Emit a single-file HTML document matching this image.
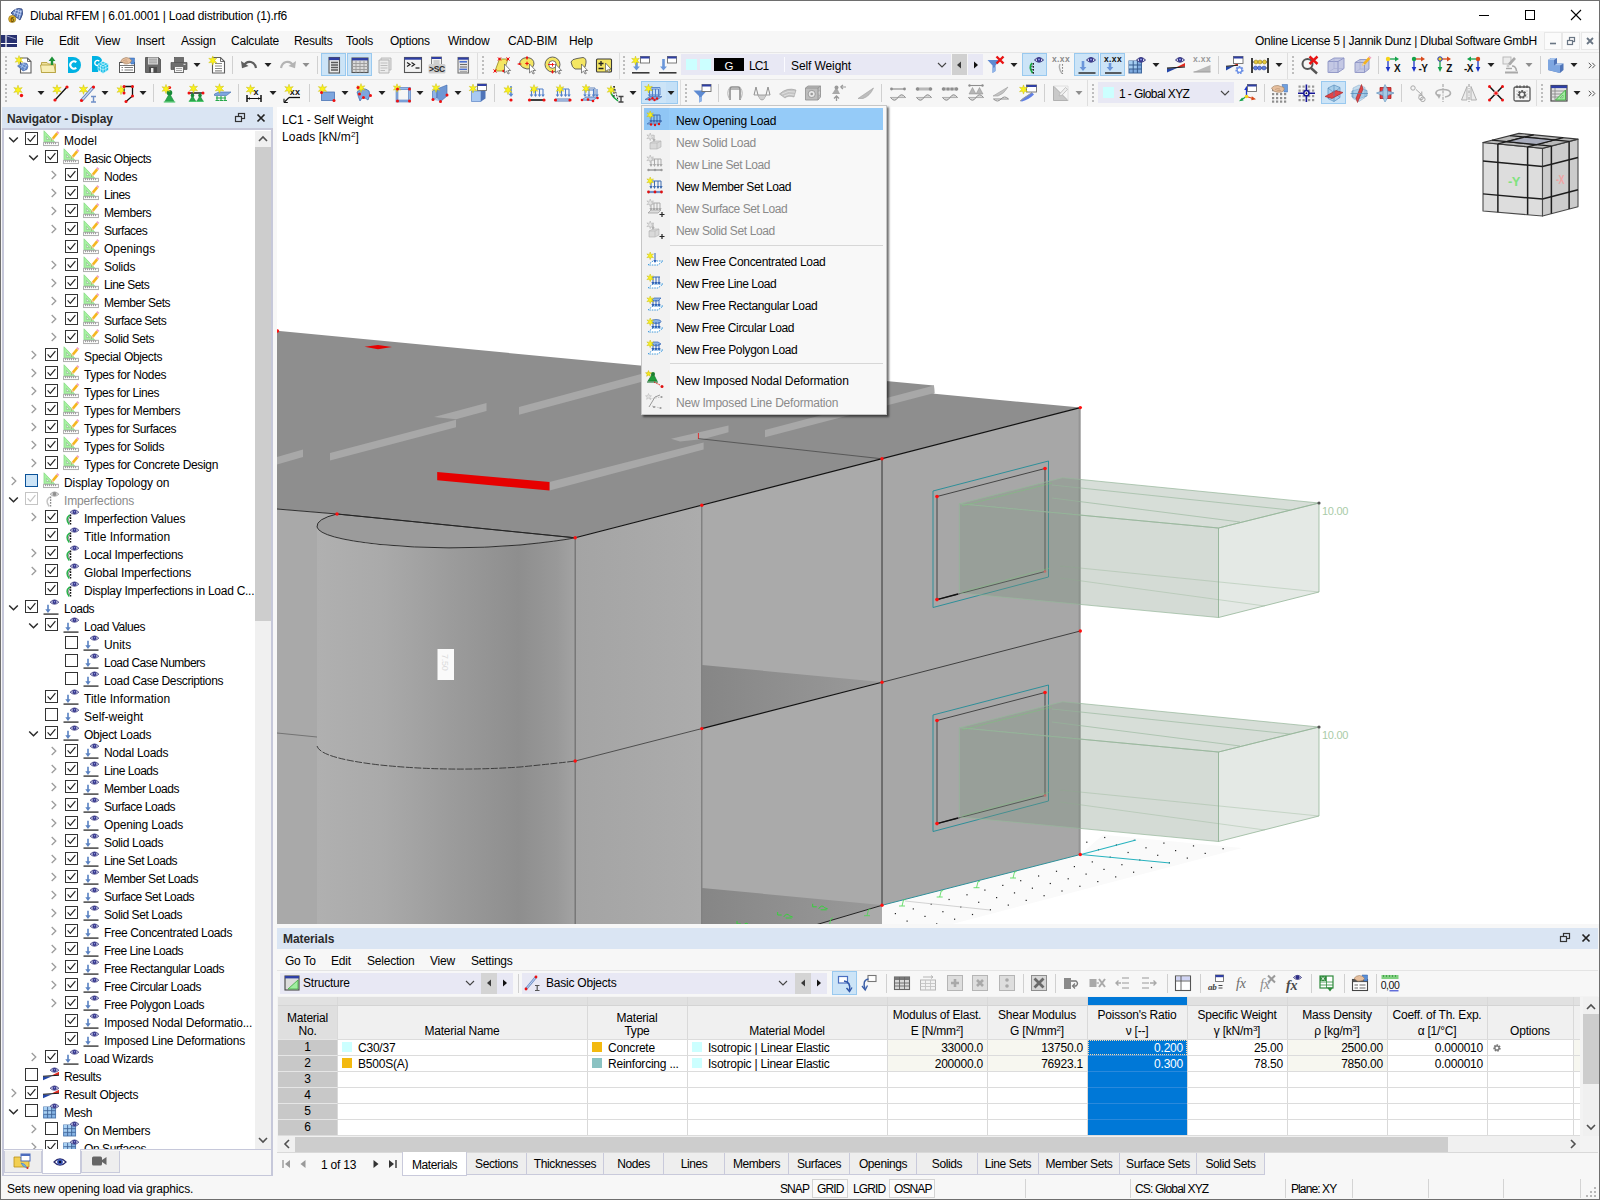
<!DOCTYPE html>
<html lang="en"><head><meta charset="utf-8"><title>Dlubal RFEM</title><style>
*{box-sizing:border-box;margin:0;padding:0}
html,body{width:1600px;height:1200px;overflow:hidden;background:#f0f0f0}
body{font-family:"Liberation Sans",sans-serif;font-size:12px;color:#000;letter-spacing:-0.22px;position:relative}
.a{position:absolute}
.t{position:absolute;white-space:nowrap;line-height:16px;height:16px}
.b{font-weight:bold}
.g{color:#8a8a8a}
svg{position:absolute;overflow:visible}
.sep{position:absolute;width:1px;background:#d0d0d0}
.sel{position:absolute;background:#cce4f7;border:1px solid #99c9ef}
.cb{position:absolute;width:13px;height:13px;border:1px solid #333;background:#fff}
.tab{letter-spacing:-0.4px;position:absolute;top:1153px;height:22px;border:1px solid #c9cadb;border-top:none;background:#eeeeee;text-align:center;line-height:23px;white-space:nowrap}
.cell{position:absolute;height:16px;line-height:15px;white-space:nowrap;overflow:hidden}
.hd{position:absolute;text-align:center;white-space:nowrap;line-height:15px}
.mi{position:absolute;left:676px;white-space:nowrap;line-height:16px;height:16px;letter-spacing:0}
sup{font-size:8px;line-height:0;vertical-align:4px}
</style></head>
<body>
<div class="a" style="left:0px;top:0px;width:1600px;height:1200px;background:#f7f7f7;"></div>
<div class="a" style="left:1px;top:1px;width:1598px;height:30px;background:#ffffff;"></div>
<div class="t " style="left:30px;top:8px;letter-spacing:-0.21px">Dlubal RFEM | 6.01.0001 | Load distribution (1).rf6</div>
<svg style="left:7px;top:5.5px" width="20" height="20" viewBox="0 0 20 20"><path d="M4 7 Q9 1 15 3 Q17 8 13 14 L9 11 Q6 9 4 7Z" fill="#5a78b8" stroke="#2b3f78" stroke-width="0.8"/>
<path d="M6 6L14 9M8 4L15 6M9 3L7 9M12 3L10 11M14 4L12 13" stroke="#cfe0ff" stroke-width="0.7" fill="none"/>
<circle cx="5.2" cy="13" r="3.6" fill="#e3b52a" stroke="#8c6a10" stroke-width="0.6"/>
<text x="5.2" y="15.6" font-size="7" font-weight="bold" text-anchor="middle" fill="#6b4c00" font-family="Liberation Sans, sans-serif">6</text></svg>
<svg style="left:1478px;top:9px" width="12" height="12" viewBox="0 0 12 12"><path d="M1 6.5H11" stroke="#000" stroke-width="1"/></svg>
<svg style="left:1524px;top:9px" width="12" height="12" viewBox="0 0 12 12"><rect x="1.5" y="1.5" width="9" height="9" fill="none" stroke="#000" stroke-width="1"/></svg>
<svg style="left:1570px;top:9px" width="12" height="12" viewBox="0 0 12 12"><path d="M1 1L11 11M11 1L1 11" stroke="#000" stroke-width="1.1"/></svg>
<div class="a" style="left:1px;top:31px;width:1598px;height:21px;background:#f7f7f7;"></div>
<div class="a" style="left:1px;top:52px;width:1598px;height:1px;background:#e6e6e6;"></div>
<svg style="left:1px;top:35px" width="16" height="12" viewBox="0 0 16 12"><rect width="16" height="12" fill="#27306f"/><path d="M0 8.5H16M5 0V12" stroke="#fff" stroke-width="1.2"/><path d="M6 1L15 4" stroke="#dfe4ff" stroke-width="0.6"/></svg>
<div class="t " style="left:25px;top:33px;">File</div>
<div class="t " style="left:59px;top:33px;">Edit</div>
<div class="t " style="left:95px;top:33px;">View</div>
<div class="t " style="left:136px;top:33px;">Insert</div>
<div class="t " style="left:181px;top:33px;">Assign</div>
<div class="t " style="left:231px;top:33px;">Calculate</div>
<div class="t " style="left:294px;top:33px;">Results</div>
<div class="t " style="left:346px;top:33px;">Tools</div>
<div class="t " style="left:390px;top:33px;">Options</div>
<div class="t " style="left:448px;top:33px;">Window</div>
<div class="t " style="left:508px;top:33px;">CAD-BIM</div>
<div class="t " style="left:569px;top:33px;">Help</div>
<div class="t " style="left:1255px;top:33px;letter-spacing:-0.3px">Online License 5 | Jannik Dunz | Dlubal Software GmbH</div>
<div class="a" style="left:1544px;top:32px;width:18px;height:18px;background:#fbfbfb;border:1px solid #e8e8e8"></div>
<div class="a" style="left:1562px;top:32px;width:18px;height:18px;background:#fbfbfb;border:1px solid #e8e8e8"></div>
<div class="a" style="left:1581px;top:32px;width:18px;height:18px;background:#fbfbfb;border:1px solid #e8e8e8"></div>
<svg style="left:1548px;top:36px" width="10" height="10" viewBox="0 0 10 10"><path d="M2 7.5H8" stroke="#6a7684" stroke-width="1.6"/></svg>
<svg style="left:1566px;top:36px" width="10" height="10" viewBox="0 0 10 10"><rect x="3.5" y="1.5" width="5" height="4" fill="none" stroke="#6a7684" stroke-width="1.2"/><rect x="1.5" y="4.5" width="5" height="4" fill="#fbfbfb" stroke="#6a7684" stroke-width="1.2"/></svg>
<svg style="left:1585px;top:36px" width="10" height="10" viewBox="0 0 10 10"><path d="M2 2L8 8M8 2L2 8" stroke="#6a7684" stroke-width="1.8"/></svg>
<div class="a" style="left:1px;top:53px;width:1598px;height:54px;background:#f6f6f6;"></div>
<div class="a" style="left:1px;top:79px;width:1598px;height:1px;background:#e6e6e6;"></div>
<div class="a" style="left:2px;top:107px;width:271px;height:21px;background:#dae5f3;"></div>
<div class="t b" style="left:7px;top:110.5px;color:#2b2b2b;letter-spacing:-0.15px">Navigator - Display</div>
<svg style="left:234px;top:112px" width="12" height="12" viewBox="0 0 12 12"><rect x="4.5" y="1.5" width="6" height="5" fill="none" stroke="#333" stroke-width="1.2"/><rect x="1.5" y="4.5" width="6" height="5" fill="#dae5f3" stroke="#333" stroke-width="1.2"/></svg>
<svg style="left:255px;top:112px" width="12" height="12" viewBox="0 0 12 12"><path d="M2.5 2.5L9.5 9.5M9.5 2.5L2.5 9.5" stroke="#222" stroke-width="1.7"/></svg>
<div class="a" style="left:2px;top:128px;width:271px;height:1022px;background:#ffffff;border:2px solid #c6c8da;border-bottom-width:1px"></div>
<div class="a" style="left:255px;top:131px;width:16px;height:1018px;background:#f0f0f0;"></div>
<div class="a" style="left:255px;top:147px;width:16px;height:474px;background:#cdcdcd;"></div>
<svg style="left:257px;top:134px" width="12" height="10" viewBox="0 0 12 10"><path d="M2 7L6 3L10 7" fill="none" stroke="#505050" stroke-width="1.6"/></svg>
<svg style="left:257px;top:1135px" width="12" height="10" viewBox="0 0 12 10"><path d="M2 3L6 7L10 3" fill="none" stroke="#505050" stroke-width="1.6"/></svg>
<div class="a" style="left:2px;top:1149px;width:271px;height:27px;background:#f7f7f7;border:1px solid #c6c8da;border-left-width:2px;border-right-width:2px"></div>
<div class="a" style="left:4px;top:1151px;width:38px;height:22px;background:#eeeeee;border:1px solid #c9cbdc;border-top:none"></div>
<div class="a" style="left:42px;top:1149px;width:39px;height:25px;background:#ffffff;border:1px solid #c9cbdc;border-top:none"></div>
<div class="a" style="left:81px;top:1151px;width:39px;height:22px;background:#eeeeee;border:1px solid #c9cbdc;border-top:none"></div>
<svg style="left:12px;top:1151px" width="20" height="20" viewBox="0 0 20 20"><path d="M2 6H8L10 8H17V16H2Z" fill="#f2cf52" stroke="#b98f17" stroke-width="0.8"/>
<rect x="9" y="3" width="9" height="7" fill="#fff" stroke="#4d6dbd" stroke-width="1"/><rect x="9" y="3" width="9" height="2" fill="#4d6dbd"/>
<path d="M9 12Q13 12 15 17L11 15Z" fill="#7db5e8" stroke="#3d7cc0" stroke-width="0.6"/><circle cx="15.5" cy="17" r="1" fill="#e02020"/></svg>
<svg style="left:50px;top:1152px" width="20" height="20" viewBox="0 0 20 20"><path d="M4 10Q10 3.6 16 10Q10 16.4 4 10Z" fill="#fff" stroke="#2a2a6c" stroke-width="1.2"/><circle cx="10" cy="10" r="2.9" fill="#3a56b8"/><circle cx="10" cy="10" r="1.3" fill="#0c0c2a"/></svg>
<svg style="left:89px;top:1151px" width="20" height="20" viewBox="0 0 20 20"><rect x="3" y="5.5" width="10" height="9" rx="1.5" fill="#666"/><path d="M13 9L17.5 6V14L13 11Z" fill="#666"/></svg>
<div class="a" style="left:1px;top:1176px;width:1598px;height:23px;background:#f7f7f7;"></div>
<div class="t " style="left:7px;top:1181px;;letter-spacing:-0.17px">Sets new opening load via graphics.</div>
<div class="t " style="left:780px;top:1181px;;letter-spacing:-0.90px">SNAP</div>
<div class="a" style="left:812px;top:1179px;width:36px;height:19px;background:#fbfbfb;border:1px solid #d4d4d4"></div>
<div class="t " style="left:817px;top:1181px;;letter-spacing:-0.90px">GRID</div>
<div class="t " style="left:853px;top:1181px;;letter-spacing:-0.90px">LGRID</div>
<div class="a" style="left:889px;top:1179px;width:46px;height:19px;background:#fbfbfb;border:1px solid #d4d4d4"></div>
<div class="t " style="left:894px;top:1181px;;letter-spacing:-0.90px">OSNAP</div>
<div class="sep" style="left:1025px;top:1179px;height:19px;background:#d4d4d4"></div>
<div class="sep" style="left:1130px;top:1179px;height:19px;background:#d4d4d4"></div>
<div class="sep" style="left:1285px;top:1179px;height:19px;background:#d4d4d4"></div>
<div class="sep" style="left:1352px;top:1179px;height:19px;background:#d4d4d4"></div>
<div class="sep" style="left:1428px;top:1179px;height:19px;background:#d4d4d4"></div>
<div class="sep" style="left:1503px;top:1179px;height:19px;background:#d4d4d4"></div>
<div class="sep" style="left:1580px;top:1179px;height:19px;background:#d4d4d4"></div>
<div class="t " style="left:1135px;top:1181px;;letter-spacing:-0.81px">CS: Global XYZ</div>
<div class="t " style="left:1291px;top:1181px;;letter-spacing:-0.90px">Plane: XY</div>
<svg style="left:1585px;top:1186px" width="12" height="12" viewBox="0 0 12 12"><rect x="9" y="1" width="2" height="2" fill="#b8b8b8"/><rect x="9" y="5" width="2" height="2" fill="#b8b8b8"/><rect x="5" y="5" width="2" height="2" fill="#b8b8b8"/><rect x="9" y="9" width="2" height="2" fill="#b8b8b8"/><rect x="5" y="9" width="2" height="2" fill="#b8b8b8"/><rect x="1" y="9" width="2" height="2" fill="#b8b8b8"/></svg>
<div class="a" style="left:0px;top:0px;width:1600px;height:1px;background:#6e6e6e;"></div>
<div class="a" style="left:0px;top:0px;width:1px;height:1200px;background:#6e6e6e;"></div>
<div class="a" style="left:1599px;top:0px;width:1px;height:1200px;background:#6e6e6e;"></div>
<div class="a" style="left:0px;top:1199px;width:1600px;height:1px;background:#6e6e6e;"></div>
<div class="a" style="left:4px;top:130px;width:251px;height:1019px;overflow:hidden">
<svg style="left:4px;top:6px" width="11" height="8" viewBox="0 0 11 8"><path d="M1.2 1.5L5.5 5.8L9.8 1.5" fill="none" stroke="#2a2a2a" stroke-width="1.5"/></svg>
<div class="cb" style="left:21px;top:2px"></div>
<svg style="left:21px;top:2px" width="13" height="13"><path d="M2.6 6.4L5.3 9.3L10.4 3.2" fill="none" stroke="#222" stroke-width="1.2"/></svg>
<svg style="left:39px;top:0px" width="16" height="16" viewBox="0 0 16 16"><path d="M1 0.8V11.8H11.5Z" fill="#a6f2a0" stroke="#8ada88" stroke-width="0.8"/><path d="M3.4 6.3V9.5H6.4Z" fill="#e8f4e6" stroke="#8ab88a" stroke-width="0.6"/>
<rect x="0.6" y="12.3" width="14.8" height="3.3" fill="#fff" stroke="#a4a4a4" stroke-width="0.9"/><path d="M2.6 12.4v1.8M4.6 12.4v1.8M6.6 12.4v1.8M8.6 12.4v1.8M10.6 12.4v1.8M12.6 12.4v1.8" stroke="#8a8a8a" stroke-width="0.9"/>
<path d="M8 10.5L9 7.5L13.3 2.2L15.3 3.9L11 9.2Z" fill="#f6b620"/><path d="M13.3 2.2L14.3 1L16.3 2.7L15.3 3.9Z" fill="#efa0c8"/><path d="M8 10.5L9 7.5L11 9.2Z" fill="#e8d2a8"/><path d="M8 10.5L8.4 9.4L9.1 10Z" fill="#444"/></svg>
<div class="t " style="left:60px;top:2.5px;letter-spacing:0.03px">Model</div>
<svg style="left:24px;top:24px" width="11" height="8" viewBox="0 0 11 8"><path d="M1.2 1.5L5.5 5.8L9.8 1.5" fill="none" stroke="#2a2a2a" stroke-width="1.5"/></svg>
<div class="cb" style="left:41px;top:20px"></div>
<svg style="left:41px;top:20px" width="13" height="13"><path d="M2.6 6.4L5.3 9.3L10.4 3.2" fill="none" stroke="#222" stroke-width="1.2"/></svg>
<svg style="left:59px;top:18px" width="16" height="16" viewBox="0 0 16 16"><path d="M1 0.8V11.8H11.5Z" fill="#a6f2a0" stroke="#8ada88" stroke-width="0.8"/><path d="M3.4 6.3V9.5H6.4Z" fill="#e8f4e6" stroke="#8ab88a" stroke-width="0.6"/>
<rect x="0.6" y="12.3" width="14.8" height="3.3" fill="#fff" stroke="#a4a4a4" stroke-width="0.9"/><path d="M2.6 12.4v1.8M4.6 12.4v1.8M6.6 12.4v1.8M8.6 12.4v1.8M10.6 12.4v1.8M12.6 12.4v1.8" stroke="#8a8a8a" stroke-width="0.9"/>
<path d="M8 10.5L9 7.5L13.3 2.2L15.3 3.9L11 9.2Z" fill="#f6b620"/><path d="M13.3 2.2L14.3 1L16.3 2.7L15.3 3.9Z" fill="#efa0c8"/><path d="M8 10.5L9 7.5L11 9.2Z" fill="#e8d2a8"/><path d="M8 10.5L8.4 9.4L9.1 10Z" fill="#444"/></svg>
<div class="t " style="left:80px;top:20.5px;letter-spacing:-0.48px">Basic Objects</div>
<svg style="left:46px;top:40px" width="8" height="10" viewBox="0 0 8 10"><path d="M1.7 1L5.8 5L1.7 9" fill="none" stroke="#9c9c9c" stroke-width="1.3"/></svg>
<div class="cb" style="left:61px;top:38px"></div>
<svg style="left:61px;top:38px" width="13" height="13"><path d="M2.6 6.4L5.3 9.3L10.4 3.2" fill="none" stroke="#222" stroke-width="1.2"/></svg>
<svg style="left:79px;top:36px" width="16" height="16" viewBox="0 0 16 16"><path d="M1 0.8V11.8H11.5Z" fill="#a6f2a0" stroke="#8ada88" stroke-width="0.8"/><path d="M3.4 6.3V9.5H6.4Z" fill="#e8f4e6" stroke="#8ab88a" stroke-width="0.6"/>
<rect x="0.6" y="12.3" width="14.8" height="3.3" fill="#fff" stroke="#a4a4a4" stroke-width="0.9"/><path d="M2.6 12.4v1.8M4.6 12.4v1.8M6.6 12.4v1.8M8.6 12.4v1.8M10.6 12.4v1.8M12.6 12.4v1.8" stroke="#8a8a8a" stroke-width="0.9"/>
<path d="M8 10.5L9 7.5L13.3 2.2L15.3 3.9L11 9.2Z" fill="#f6b620"/><path d="M13.3 2.2L14.3 1L16.3 2.7L15.3 3.9Z" fill="#efa0c8"/><path d="M8 10.5L9 7.5L11 9.2Z" fill="#e8d2a8"/><path d="M8 10.5L8.4 9.4L9.1 10Z" fill="#444"/></svg>
<div class="t " style="left:100px;top:38.5px;letter-spacing:-0.32px">Nodes</div>
<svg style="left:46px;top:58px" width="8" height="10" viewBox="0 0 8 10"><path d="M1.7 1L5.8 5L1.7 9" fill="none" stroke="#9c9c9c" stroke-width="1.3"/></svg>
<div class="cb" style="left:61px;top:56px"></div>
<svg style="left:61px;top:56px" width="13" height="13"><path d="M2.6 6.4L5.3 9.3L10.4 3.2" fill="none" stroke="#222" stroke-width="1.2"/></svg>
<svg style="left:79px;top:54px" width="16" height="16" viewBox="0 0 16 16"><path d="M1 0.8V11.8H11.5Z" fill="#a6f2a0" stroke="#8ada88" stroke-width="0.8"/><path d="M3.4 6.3V9.5H6.4Z" fill="#e8f4e6" stroke="#8ab88a" stroke-width="0.6"/>
<rect x="0.6" y="12.3" width="14.8" height="3.3" fill="#fff" stroke="#a4a4a4" stroke-width="0.9"/><path d="M2.6 12.4v1.8M4.6 12.4v1.8M6.6 12.4v1.8M8.6 12.4v1.8M10.6 12.4v1.8M12.6 12.4v1.8" stroke="#8a8a8a" stroke-width="0.9"/>
<path d="M8 10.5L9 7.5L13.3 2.2L15.3 3.9L11 9.2Z" fill="#f6b620"/><path d="M13.3 2.2L14.3 1L16.3 2.7L15.3 3.9Z" fill="#efa0c8"/><path d="M8 10.5L9 7.5L11 9.2Z" fill="#e8d2a8"/><path d="M8 10.5L8.4 9.4L9.1 10Z" fill="#444"/></svg>
<div class="t " style="left:100px;top:56.5px;letter-spacing:-0.52px">Lines</div>
<svg style="left:46px;top:76px" width="8" height="10" viewBox="0 0 8 10"><path d="M1.7 1L5.8 5L1.7 9" fill="none" stroke="#9c9c9c" stroke-width="1.3"/></svg>
<div class="cb" style="left:61px;top:74px"></div>
<svg style="left:61px;top:74px" width="13" height="13"><path d="M2.6 6.4L5.3 9.3L10.4 3.2" fill="none" stroke="#222" stroke-width="1.2"/></svg>
<svg style="left:79px;top:72px" width="16" height="16" viewBox="0 0 16 16"><path d="M1 0.8V11.8H11.5Z" fill="#a6f2a0" stroke="#8ada88" stroke-width="0.8"/><path d="M3.4 6.3V9.5H6.4Z" fill="#e8f4e6" stroke="#8ab88a" stroke-width="0.6"/>
<rect x="0.6" y="12.3" width="14.8" height="3.3" fill="#fff" stroke="#a4a4a4" stroke-width="0.9"/><path d="M2.6 12.4v1.8M4.6 12.4v1.8M6.6 12.4v1.8M8.6 12.4v1.8M10.6 12.4v1.8M12.6 12.4v1.8" stroke="#8a8a8a" stroke-width="0.9"/>
<path d="M8 10.5L9 7.5L13.3 2.2L15.3 3.9L11 9.2Z" fill="#f6b620"/><path d="M13.3 2.2L14.3 1L16.3 2.7L15.3 3.9Z" fill="#efa0c8"/><path d="M8 10.5L9 7.5L11 9.2Z" fill="#e8d2a8"/><path d="M8 10.5L8.4 9.4L9.1 10Z" fill="#444"/></svg>
<div class="t " style="left:100px;top:74.5px;letter-spacing:-0.42px">Members</div>
<svg style="left:46px;top:94px" width="8" height="10" viewBox="0 0 8 10"><path d="M1.7 1L5.8 5L1.7 9" fill="none" stroke="#9c9c9c" stroke-width="1.3"/></svg>
<div class="cb" style="left:61px;top:92px"></div>
<svg style="left:61px;top:92px" width="13" height="13"><path d="M2.6 6.4L5.3 9.3L10.4 3.2" fill="none" stroke="#222" stroke-width="1.2"/></svg>
<svg style="left:79px;top:90px" width="16" height="16" viewBox="0 0 16 16"><path d="M1 0.8V11.8H11.5Z" fill="#a6f2a0" stroke="#8ada88" stroke-width="0.8"/><path d="M3.4 6.3V9.5H6.4Z" fill="#e8f4e6" stroke="#8ab88a" stroke-width="0.6"/>
<rect x="0.6" y="12.3" width="14.8" height="3.3" fill="#fff" stroke="#a4a4a4" stroke-width="0.9"/><path d="M2.6 12.4v1.8M4.6 12.4v1.8M6.6 12.4v1.8M8.6 12.4v1.8M10.6 12.4v1.8M12.6 12.4v1.8" stroke="#8a8a8a" stroke-width="0.9"/>
<path d="M8 10.5L9 7.5L13.3 2.2L15.3 3.9L11 9.2Z" fill="#f6b620"/><path d="M13.3 2.2L14.3 1L16.3 2.7L15.3 3.9Z" fill="#efa0c8"/><path d="M8 10.5L9 7.5L11 9.2Z" fill="#e8d2a8"/><path d="M8 10.5L8.4 9.4L9.1 10Z" fill="#444"/></svg>
<div class="t " style="left:100px;top:92.5px;letter-spacing:-0.53px">Surfaces</div>
<div class="cb" style="left:61px;top:110px"></div>
<svg style="left:61px;top:110px" width="13" height="13"><path d="M2.6 6.4L5.3 9.3L10.4 3.2" fill="none" stroke="#222" stroke-width="1.2"/></svg>
<svg style="left:79px;top:108px" width="16" height="16" viewBox="0 0 16 16"><path d="M1 0.8V11.8H11.5Z" fill="#a6f2a0" stroke="#8ada88" stroke-width="0.8"/><path d="M3.4 6.3V9.5H6.4Z" fill="#e8f4e6" stroke="#8ab88a" stroke-width="0.6"/>
<rect x="0.6" y="12.3" width="14.8" height="3.3" fill="#fff" stroke="#a4a4a4" stroke-width="0.9"/><path d="M2.6 12.4v1.8M4.6 12.4v1.8M6.6 12.4v1.8M8.6 12.4v1.8M10.6 12.4v1.8M12.6 12.4v1.8" stroke="#8a8a8a" stroke-width="0.9"/>
<path d="M8 10.5L9 7.5L13.3 2.2L15.3 3.9L11 9.2Z" fill="#f6b620"/><path d="M13.3 2.2L14.3 1L16.3 2.7L15.3 3.9Z" fill="#efa0c8"/><path d="M8 10.5L9 7.5L11 9.2Z" fill="#e8d2a8"/><path d="M8 10.5L8.4 9.4L9.1 10Z" fill="#444"/></svg>
<div class="t " style="left:100px;top:110.5px;letter-spacing:-0.03px">Openings</div>
<svg style="left:46px;top:130px" width="8" height="10" viewBox="0 0 8 10"><path d="M1.7 1L5.8 5L1.7 9" fill="none" stroke="#9c9c9c" stroke-width="1.3"/></svg>
<div class="cb" style="left:61px;top:128px"></div>
<svg style="left:61px;top:128px" width="13" height="13"><path d="M2.6 6.4L5.3 9.3L10.4 3.2" fill="none" stroke="#222" stroke-width="1.2"/></svg>
<svg style="left:79px;top:126px" width="16" height="16" viewBox="0 0 16 16"><path d="M1 0.8V11.8H11.5Z" fill="#a6f2a0" stroke="#8ada88" stroke-width="0.8"/><path d="M3.4 6.3V9.5H6.4Z" fill="#e8f4e6" stroke="#8ab88a" stroke-width="0.6"/>
<rect x="0.6" y="12.3" width="14.8" height="3.3" fill="#fff" stroke="#a4a4a4" stroke-width="0.9"/><path d="M2.6 12.4v1.8M4.6 12.4v1.8M6.6 12.4v1.8M8.6 12.4v1.8M10.6 12.4v1.8M12.6 12.4v1.8" stroke="#8a8a8a" stroke-width="0.9"/>
<path d="M8 10.5L9 7.5L13.3 2.2L15.3 3.9L11 9.2Z" fill="#f6b620"/><path d="M13.3 2.2L14.3 1L16.3 2.7L15.3 3.9Z" fill="#efa0c8"/><path d="M8 10.5L9 7.5L11 9.2Z" fill="#e8d2a8"/><path d="M8 10.5L8.4 9.4L9.1 10Z" fill="#444"/></svg>
<div class="t " style="left:100px;top:128.5px;letter-spacing:-0.26px">Solids</div>
<svg style="left:46px;top:148px" width="8" height="10" viewBox="0 0 8 10"><path d="M1.7 1L5.8 5L1.7 9" fill="none" stroke="#9c9c9c" stroke-width="1.3"/></svg>
<div class="cb" style="left:61px;top:146px"></div>
<svg style="left:61px;top:146px" width="13" height="13"><path d="M2.6 6.4L5.3 9.3L10.4 3.2" fill="none" stroke="#222" stroke-width="1.2"/></svg>
<svg style="left:79px;top:144px" width="16" height="16" viewBox="0 0 16 16"><path d="M1 0.8V11.8H11.5Z" fill="#a6f2a0" stroke="#8ada88" stroke-width="0.8"/><path d="M3.4 6.3V9.5H6.4Z" fill="#e8f4e6" stroke="#8ab88a" stroke-width="0.6"/>
<rect x="0.6" y="12.3" width="14.8" height="3.3" fill="#fff" stroke="#a4a4a4" stroke-width="0.9"/><path d="M2.6 12.4v1.8M4.6 12.4v1.8M6.6 12.4v1.8M8.6 12.4v1.8M10.6 12.4v1.8M12.6 12.4v1.8" stroke="#8a8a8a" stroke-width="0.9"/>
<path d="M8 10.5L9 7.5L13.3 2.2L15.3 3.9L11 9.2Z" fill="#f6b620"/><path d="M13.3 2.2L14.3 1L16.3 2.7L15.3 3.9Z" fill="#efa0c8"/><path d="M8 10.5L9 7.5L11 9.2Z" fill="#e8d2a8"/><path d="M8 10.5L8.4 9.4L9.1 10Z" fill="#444"/></svg>
<div class="t " style="left:100px;top:146.5px;letter-spacing:-0.55px">Line Sets</div>
<svg style="left:46px;top:166px" width="8" height="10" viewBox="0 0 8 10"><path d="M1.7 1L5.8 5L1.7 9" fill="none" stroke="#9c9c9c" stroke-width="1.3"/></svg>
<div class="cb" style="left:61px;top:164px"></div>
<svg style="left:61px;top:164px" width="13" height="13"><path d="M2.6 6.4L5.3 9.3L10.4 3.2" fill="none" stroke="#222" stroke-width="1.2"/></svg>
<svg style="left:79px;top:162px" width="16" height="16" viewBox="0 0 16 16"><path d="M1 0.8V11.8H11.5Z" fill="#a6f2a0" stroke="#8ada88" stroke-width="0.8"/><path d="M3.4 6.3V9.5H6.4Z" fill="#e8f4e6" stroke="#8ab88a" stroke-width="0.6"/>
<rect x="0.6" y="12.3" width="14.8" height="3.3" fill="#fff" stroke="#a4a4a4" stroke-width="0.9"/><path d="M2.6 12.4v1.8M4.6 12.4v1.8M6.6 12.4v1.8M8.6 12.4v1.8M10.6 12.4v1.8M12.6 12.4v1.8" stroke="#8a8a8a" stroke-width="0.9"/>
<path d="M8 10.5L9 7.5L13.3 2.2L15.3 3.9L11 9.2Z" fill="#f6b620"/><path d="M13.3 2.2L14.3 1L16.3 2.7L15.3 3.9Z" fill="#efa0c8"/><path d="M8 10.5L9 7.5L11 9.2Z" fill="#e8d2a8"/><path d="M8 10.5L8.4 9.4L9.1 10Z" fill="#444"/></svg>
<div class="t " style="left:100px;top:164.5px;letter-spacing:-0.48px">Member Sets</div>
<svg style="left:46px;top:184px" width="8" height="10" viewBox="0 0 8 10"><path d="M1.7 1L5.8 5L1.7 9" fill="none" stroke="#9c9c9c" stroke-width="1.3"/></svg>
<div class="cb" style="left:61px;top:182px"></div>
<svg style="left:61px;top:182px" width="13" height="13"><path d="M2.6 6.4L5.3 9.3L10.4 3.2" fill="none" stroke="#222" stroke-width="1.2"/></svg>
<svg style="left:79px;top:180px" width="16" height="16" viewBox="0 0 16 16"><path d="M1 0.8V11.8H11.5Z" fill="#a6f2a0" stroke="#8ada88" stroke-width="0.8"/><path d="M3.4 6.3V9.5H6.4Z" fill="#e8f4e6" stroke="#8ab88a" stroke-width="0.6"/>
<rect x="0.6" y="12.3" width="14.8" height="3.3" fill="#fff" stroke="#a4a4a4" stroke-width="0.9"/><path d="M2.6 12.4v1.8M4.6 12.4v1.8M6.6 12.4v1.8M8.6 12.4v1.8M10.6 12.4v1.8M12.6 12.4v1.8" stroke="#8a8a8a" stroke-width="0.9"/>
<path d="M8 10.5L9 7.5L13.3 2.2L15.3 3.9L11 9.2Z" fill="#f6b620"/><path d="M13.3 2.2L14.3 1L16.3 2.7L15.3 3.9Z" fill="#efa0c8"/><path d="M8 10.5L9 7.5L11 9.2Z" fill="#e8d2a8"/><path d="M8 10.5L8.4 9.4L9.1 10Z" fill="#444"/></svg>
<div class="t " style="left:100px;top:182.5px;letter-spacing:-0.55px">Surface Sets</div>
<svg style="left:46px;top:202px" width="8" height="10" viewBox="0 0 8 10"><path d="M1.7 1L5.8 5L1.7 9" fill="none" stroke="#9c9c9c" stroke-width="1.3"/></svg>
<div class="cb" style="left:61px;top:200px"></div>
<svg style="left:61px;top:200px" width="13" height="13"><path d="M2.6 6.4L5.3 9.3L10.4 3.2" fill="none" stroke="#222" stroke-width="1.2"/></svg>
<svg style="left:79px;top:198px" width="16" height="16" viewBox="0 0 16 16"><path d="M1 0.8V11.8H11.5Z" fill="#a6f2a0" stroke="#8ada88" stroke-width="0.8"/><path d="M3.4 6.3V9.5H6.4Z" fill="#e8f4e6" stroke="#8ab88a" stroke-width="0.6"/>
<rect x="0.6" y="12.3" width="14.8" height="3.3" fill="#fff" stroke="#a4a4a4" stroke-width="0.9"/><path d="M2.6 12.4v1.8M4.6 12.4v1.8M6.6 12.4v1.8M8.6 12.4v1.8M10.6 12.4v1.8M12.6 12.4v1.8" stroke="#8a8a8a" stroke-width="0.9"/>
<path d="M8 10.5L9 7.5L13.3 2.2L15.3 3.9L11 9.2Z" fill="#f6b620"/><path d="M13.3 2.2L14.3 1L16.3 2.7L15.3 3.9Z" fill="#efa0c8"/><path d="M8 10.5L9 7.5L11 9.2Z" fill="#e8d2a8"/><path d="M8 10.5L8.4 9.4L9.1 10Z" fill="#444"/></svg>
<div class="t " style="left:100px;top:200.5px;letter-spacing:-0.39px">Solid Sets</div>
<svg style="left:26px;top:220px" width="8" height="10" viewBox="0 0 8 10"><path d="M1.7 1L5.8 5L1.7 9" fill="none" stroke="#9c9c9c" stroke-width="1.3"/></svg>
<div class="cb" style="left:41px;top:218px"></div>
<svg style="left:41px;top:218px" width="13" height="13"><path d="M2.6 6.4L5.3 9.3L10.4 3.2" fill="none" stroke="#222" stroke-width="1.2"/></svg>
<svg style="left:59px;top:216px" width="16" height="16" viewBox="0 0 16 16"><path d="M1 0.8V11.8H11.5Z" fill="#a6f2a0" stroke="#8ada88" stroke-width="0.8"/><path d="M3.4 6.3V9.5H6.4Z" fill="#e8f4e6" stroke="#8ab88a" stroke-width="0.6"/>
<rect x="0.6" y="12.3" width="14.8" height="3.3" fill="#fff" stroke="#a4a4a4" stroke-width="0.9"/><path d="M2.6 12.4v1.8M4.6 12.4v1.8M6.6 12.4v1.8M8.6 12.4v1.8M10.6 12.4v1.8M12.6 12.4v1.8" stroke="#8a8a8a" stroke-width="0.9"/>
<path d="M8 10.5L9 7.5L13.3 2.2L15.3 3.9L11 9.2Z" fill="#f6b620"/><path d="M13.3 2.2L14.3 1L16.3 2.7L15.3 3.9Z" fill="#efa0c8"/><path d="M8 10.5L9 7.5L11 9.2Z" fill="#e8d2a8"/><path d="M8 10.5L8.4 9.4L9.1 10Z" fill="#444"/></svg>
<div class="t " style="left:80px;top:218.5px;letter-spacing:-0.35px">Special Objects</div>
<svg style="left:26px;top:238px" width="8" height="10" viewBox="0 0 8 10"><path d="M1.7 1L5.8 5L1.7 9" fill="none" stroke="#9c9c9c" stroke-width="1.3"/></svg>
<div class="cb" style="left:41px;top:236px"></div>
<svg style="left:41px;top:236px" width="13" height="13"><path d="M2.6 6.4L5.3 9.3L10.4 3.2" fill="none" stroke="#222" stroke-width="1.2"/></svg>
<svg style="left:59px;top:234px" width="16" height="16" viewBox="0 0 16 16"><path d="M1 0.8V11.8H11.5Z" fill="#a6f2a0" stroke="#8ada88" stroke-width="0.8"/><path d="M3.4 6.3V9.5H6.4Z" fill="#e8f4e6" stroke="#8ab88a" stroke-width="0.6"/>
<rect x="0.6" y="12.3" width="14.8" height="3.3" fill="#fff" stroke="#a4a4a4" stroke-width="0.9"/><path d="M2.6 12.4v1.8M4.6 12.4v1.8M6.6 12.4v1.8M8.6 12.4v1.8M10.6 12.4v1.8M12.6 12.4v1.8" stroke="#8a8a8a" stroke-width="0.9"/>
<path d="M8 10.5L9 7.5L13.3 2.2L15.3 3.9L11 9.2Z" fill="#f6b620"/><path d="M13.3 2.2L14.3 1L16.3 2.7L15.3 3.9Z" fill="#efa0c8"/><path d="M8 10.5L9 7.5L11 9.2Z" fill="#e8d2a8"/><path d="M8 10.5L8.4 9.4L9.1 10Z" fill="#444"/></svg>
<div class="t " style="left:80px;top:236.5px;letter-spacing:-0.35px">Types for Nodes</div>
<svg style="left:26px;top:256px" width="8" height="10" viewBox="0 0 8 10"><path d="M1.7 1L5.8 5L1.7 9" fill="none" stroke="#9c9c9c" stroke-width="1.3"/></svg>
<div class="cb" style="left:41px;top:254px"></div>
<svg style="left:41px;top:254px" width="13" height="13"><path d="M2.6 6.4L5.3 9.3L10.4 3.2" fill="none" stroke="#222" stroke-width="1.2"/></svg>
<svg style="left:59px;top:252px" width="16" height="16" viewBox="0 0 16 16"><path d="M1 0.8V11.8H11.5Z" fill="#a6f2a0" stroke="#8ada88" stroke-width="0.8"/><path d="M3.4 6.3V9.5H6.4Z" fill="#e8f4e6" stroke="#8ab88a" stroke-width="0.6"/>
<rect x="0.6" y="12.3" width="14.8" height="3.3" fill="#fff" stroke="#a4a4a4" stroke-width="0.9"/><path d="M2.6 12.4v1.8M4.6 12.4v1.8M6.6 12.4v1.8M8.6 12.4v1.8M10.6 12.4v1.8M12.6 12.4v1.8" stroke="#8a8a8a" stroke-width="0.9"/>
<path d="M8 10.5L9 7.5L13.3 2.2L15.3 3.9L11 9.2Z" fill="#f6b620"/><path d="M13.3 2.2L14.3 1L16.3 2.7L15.3 3.9Z" fill="#efa0c8"/><path d="M8 10.5L9 7.5L11 9.2Z" fill="#e8d2a8"/><path d="M8 10.5L8.4 9.4L9.1 10Z" fill="#444"/></svg>
<div class="t " style="left:80px;top:254.5px;letter-spacing:-0.42px">Types for Lines</div>
<svg style="left:26px;top:274px" width="8" height="10" viewBox="0 0 8 10"><path d="M1.7 1L5.8 5L1.7 9" fill="none" stroke="#9c9c9c" stroke-width="1.3"/></svg>
<div class="cb" style="left:41px;top:272px"></div>
<svg style="left:41px;top:272px" width="13" height="13"><path d="M2.6 6.4L5.3 9.3L10.4 3.2" fill="none" stroke="#222" stroke-width="1.2"/></svg>
<svg style="left:59px;top:270px" width="16" height="16" viewBox="0 0 16 16"><path d="M1 0.8V11.8H11.5Z" fill="#a6f2a0" stroke="#8ada88" stroke-width="0.8"/><path d="M3.4 6.3V9.5H6.4Z" fill="#e8f4e6" stroke="#8ab88a" stroke-width="0.6"/>
<rect x="0.6" y="12.3" width="14.8" height="3.3" fill="#fff" stroke="#a4a4a4" stroke-width="0.9"/><path d="M2.6 12.4v1.8M4.6 12.4v1.8M6.6 12.4v1.8M8.6 12.4v1.8M10.6 12.4v1.8M12.6 12.4v1.8" stroke="#8a8a8a" stroke-width="0.9"/>
<path d="M8 10.5L9 7.5L13.3 2.2L15.3 3.9L11 9.2Z" fill="#f6b620"/><path d="M13.3 2.2L14.3 1L16.3 2.7L15.3 3.9Z" fill="#efa0c8"/><path d="M8 10.5L9 7.5L11 9.2Z" fill="#e8d2a8"/><path d="M8 10.5L8.4 9.4L9.1 10Z" fill="#444"/></svg>
<div class="t " style="left:80px;top:272.5px;letter-spacing:-0.39px">Types for Members</div>
<svg style="left:26px;top:292px" width="8" height="10" viewBox="0 0 8 10"><path d="M1.7 1L5.8 5L1.7 9" fill="none" stroke="#9c9c9c" stroke-width="1.3"/></svg>
<div class="cb" style="left:41px;top:290px"></div>
<svg style="left:41px;top:290px" width="13" height="13"><path d="M2.6 6.4L5.3 9.3L10.4 3.2" fill="none" stroke="#222" stroke-width="1.2"/></svg>
<svg style="left:59px;top:288px" width="16" height="16" viewBox="0 0 16 16"><path d="M1 0.8V11.8H11.5Z" fill="#a6f2a0" stroke="#8ada88" stroke-width="0.8"/><path d="M3.4 6.3V9.5H6.4Z" fill="#e8f4e6" stroke="#8ab88a" stroke-width="0.6"/>
<rect x="0.6" y="12.3" width="14.8" height="3.3" fill="#fff" stroke="#a4a4a4" stroke-width="0.9"/><path d="M2.6 12.4v1.8M4.6 12.4v1.8M6.6 12.4v1.8M8.6 12.4v1.8M10.6 12.4v1.8M12.6 12.4v1.8" stroke="#8a8a8a" stroke-width="0.9"/>
<path d="M8 10.5L9 7.5L13.3 2.2L15.3 3.9L11 9.2Z" fill="#f6b620"/><path d="M13.3 2.2L14.3 1L16.3 2.7L15.3 3.9Z" fill="#efa0c8"/><path d="M8 10.5L9 7.5L11 9.2Z" fill="#e8d2a8"/><path d="M8 10.5L8.4 9.4L9.1 10Z" fill="#444"/></svg>
<div class="t " style="left:80px;top:290.5px;letter-spacing:-0.44px">Types for Surfaces</div>
<svg style="left:26px;top:310px" width="8" height="10" viewBox="0 0 8 10"><path d="M1.7 1L5.8 5L1.7 9" fill="none" stroke="#9c9c9c" stroke-width="1.3"/></svg>
<div class="cb" style="left:41px;top:308px"></div>
<svg style="left:41px;top:308px" width="13" height="13"><path d="M2.6 6.4L5.3 9.3L10.4 3.2" fill="none" stroke="#222" stroke-width="1.2"/></svg>
<svg style="left:59px;top:306px" width="16" height="16" viewBox="0 0 16 16"><path d="M1 0.8V11.8H11.5Z" fill="#a6f2a0" stroke="#8ada88" stroke-width="0.8"/><path d="M3.4 6.3V9.5H6.4Z" fill="#e8f4e6" stroke="#8ab88a" stroke-width="0.6"/>
<rect x="0.6" y="12.3" width="14.8" height="3.3" fill="#fff" stroke="#a4a4a4" stroke-width="0.9"/><path d="M2.6 12.4v1.8M4.6 12.4v1.8M6.6 12.4v1.8M8.6 12.4v1.8M10.6 12.4v1.8M12.6 12.4v1.8" stroke="#8a8a8a" stroke-width="0.9"/>
<path d="M8 10.5L9 7.5L13.3 2.2L15.3 3.9L11 9.2Z" fill="#f6b620"/><path d="M13.3 2.2L14.3 1L16.3 2.7L15.3 3.9Z" fill="#efa0c8"/><path d="M8 10.5L9 7.5L11 9.2Z" fill="#e8d2a8"/><path d="M8 10.5L8.4 9.4L9.1 10Z" fill="#444"/></svg>
<div class="t " style="left:80px;top:308.5px;letter-spacing:-0.33px">Types for Solids</div>
<svg style="left:26px;top:328px" width="8" height="10" viewBox="0 0 8 10"><path d="M1.7 1L5.8 5L1.7 9" fill="none" stroke="#9c9c9c" stroke-width="1.3"/></svg>
<div class="cb" style="left:41px;top:326px"></div>
<svg style="left:41px;top:326px" width="13" height="13"><path d="M2.6 6.4L5.3 9.3L10.4 3.2" fill="none" stroke="#222" stroke-width="1.2"/></svg>
<svg style="left:59px;top:324px" width="16" height="16" viewBox="0 0 16 16"><path d="M1 0.8V11.8H11.5Z" fill="#a6f2a0" stroke="#8ada88" stroke-width="0.8"/><path d="M3.4 6.3V9.5H6.4Z" fill="#e8f4e6" stroke="#8ab88a" stroke-width="0.6"/>
<rect x="0.6" y="12.3" width="14.8" height="3.3" fill="#fff" stroke="#a4a4a4" stroke-width="0.9"/><path d="M2.6 12.4v1.8M4.6 12.4v1.8M6.6 12.4v1.8M8.6 12.4v1.8M10.6 12.4v1.8M12.6 12.4v1.8" stroke="#8a8a8a" stroke-width="0.9"/>
<path d="M8 10.5L9 7.5L13.3 2.2L15.3 3.9L11 9.2Z" fill="#f6b620"/><path d="M13.3 2.2L14.3 1L16.3 2.7L15.3 3.9Z" fill="#efa0c8"/><path d="M8 10.5L9 7.5L11 9.2Z" fill="#e8d2a8"/><path d="M8 10.5L8.4 9.4L9.1 10Z" fill="#444"/></svg>
<div class="t " style="left:80px;top:326.5px;letter-spacing:-0.32px">Types for Concrete Design</div>
<svg style="left:6px;top:346px" width="8" height="10" viewBox="0 0 8 10"><path d="M1.7 1L5.8 5L1.7 9" fill="none" stroke="#9c9c9c" stroke-width="1.3"/></svg>
<div class="cb" style="left:21px;top:344px;background:#cce4f7;border-color:#0a5299"></div>
<svg style="left:39px;top:342px" width="16" height="16" viewBox="0 0 16 16"><path d="M1 0.8V11.8H11.5Z" fill="#a6f2a0" stroke="#8ada88" stroke-width="0.8"/><path d="M3.4 6.3V9.5H6.4Z" fill="#e8f4e6" stroke="#8ab88a" stroke-width="0.6"/>
<rect x="0.6" y="12.3" width="14.8" height="3.3" fill="#fff" stroke="#a4a4a4" stroke-width="0.9"/><path d="M2.6 12.4v1.8M4.6 12.4v1.8M6.6 12.4v1.8M8.6 12.4v1.8M10.6 12.4v1.8M12.6 12.4v1.8" stroke="#8a8a8a" stroke-width="0.9"/>
<path d="M8 10.5L9 7.5L13.3 2.2L15.3 3.9L11 9.2Z" fill="#f6b620"/><path d="M13.3 2.2L14.3 1L16.3 2.7L15.3 3.9Z" fill="#efa0c8"/><path d="M8 10.5L9 7.5L11 9.2Z" fill="#e8d2a8"/><path d="M8 10.5L8.4 9.4L9.1 10Z" fill="#444"/></svg>
<div class="t " style="left:60px;top:344.5px;letter-spacing:-0.10px">Display Topology on</div>
<svg style="left:4px;top:366px" width="11" height="8" viewBox="0 0 11 8"><path d="M1.2 1.5L5.5 5.8L9.8 1.5" fill="none" stroke="#2a2a2a" stroke-width="1.5"/></svg>
<div class="cb" style="left:21px;top:362px;border-color:#c4c4c4"></div>
<svg style="left:21px;top:362px" width="13" height="13"><path d="M2.6 6.4L5.3 9.3L10.4 3.2" fill="none" stroke="#c4c4c4" stroke-width="1.2"/></svg>
<svg style="left:39px;top:360px" width="16" height="16" viewBox="0 0 16 16"><path d="M6.8 6.8Q1.6 11 6.3 16.4" fill="none" stroke="#c4c4c4" stroke-width="1.5"/><path d="M7.6 6.5V16.8" stroke="#8a8a8a" stroke-width="1.3" stroke-dasharray="1.7 1.1"/><path d="M7.2 4.2Q11.5 -0.3 15.8 4.2Q11.5 8.2 7.2 4.2Z" fill="#f2f2f2" stroke="#9a9a9a" stroke-width="0.9"/><circle cx="11.5" cy="4" r="2.1" fill="#8f8f8f"/></svg>
<div class="t g" style="left:60px;top:362.5px;letter-spacing:-0.15px">Imperfections</div>
<svg style="left:26px;top:382px" width="8" height="10" viewBox="0 0 8 10"><path d="M1.7 1L5.8 5L1.7 9" fill="none" stroke="#9c9c9c" stroke-width="1.3"/></svg>
<div class="cb" style="left:41px;top:380px"></div>
<svg style="left:41px;top:380px" width="13" height="13"><path d="M2.6 6.4L5.3 9.3L10.4 3.2" fill="none" stroke="#222" stroke-width="1.2"/></svg>
<svg style="left:59px;top:378px" width="16" height="16" viewBox="0 0 16 16"><path d="M6.8 6.8Q1.6 11 6.3 16.4" fill="none" stroke="#27b24a" stroke-width="1.5"/><path d="M7.6 6.5V16.8" stroke="#111" stroke-width="1.3" stroke-dasharray="1.7 1.1"/><path d="M7 8.3Q4.3 11.2 6.6 14.8" stroke="#333" stroke-width="0.7" fill="none"/><path d="M7.2 4.2Q11.5 -0.3 15.8 4.2Q11.5 8.2 7.2 4.2Z" fill="#e9e9f6" stroke="#35357e" stroke-width="0.9"/><circle cx="11.5" cy="4" r="2.1" fill="#2f2f86"/><circle cx="11.5" cy="3.8" r="0.8" fill="#8f9be0"/></svg>
<div class="t " style="left:80px;top:380.5px;letter-spacing:-0.21px">Imperfection Values</div>
<div class="cb" style="left:41px;top:398px"></div>
<svg style="left:41px;top:398px" width="13" height="13"><path d="M2.6 6.4L5.3 9.3L10.4 3.2" fill="none" stroke="#222" stroke-width="1.2"/></svg>
<svg style="left:59px;top:396px" width="16" height="16" viewBox="0 0 16 16"><path d="M6.8 6.8Q1.6 11 6.3 16.4" fill="none" stroke="#27b24a" stroke-width="1.5"/><path d="M7.6 6.5V16.8" stroke="#111" stroke-width="1.3" stroke-dasharray="1.7 1.1"/><path d="M7 8.3Q4.3 11.2 6.6 14.8" stroke="#333" stroke-width="0.7" fill="none"/><path d="M7.2 4.2Q11.5 -0.3 15.8 4.2Q11.5 8.2 7.2 4.2Z" fill="#e9e9f6" stroke="#35357e" stroke-width="0.9"/><circle cx="11.5" cy="4" r="2.1" fill="#2f2f86"/><circle cx="11.5" cy="3.8" r="0.8" fill="#8f9be0"/></svg>
<div class="t " style="left:80px;top:398.5px;letter-spacing:0.03px">Title Information</div>
<svg style="left:26px;top:418px" width="8" height="10" viewBox="0 0 8 10"><path d="M1.7 1L5.8 5L1.7 9" fill="none" stroke="#9c9c9c" stroke-width="1.3"/></svg>
<div class="cb" style="left:41px;top:416px"></div>
<svg style="left:41px;top:416px" width="13" height="13"><path d="M2.6 6.4L5.3 9.3L10.4 3.2" fill="none" stroke="#222" stroke-width="1.2"/></svg>
<svg style="left:59px;top:414px" width="16" height="16" viewBox="0 0 16 16"><path d="M6.8 6.8Q1.6 11 6.3 16.4" fill="none" stroke="#27b24a" stroke-width="1.5"/><path d="M7.6 6.5V16.8" stroke="#111" stroke-width="1.3" stroke-dasharray="1.7 1.1"/><path d="M7 8.3Q4.3 11.2 6.6 14.8" stroke="#333" stroke-width="0.7" fill="none"/><path d="M7.2 4.2Q11.5 -0.3 15.8 4.2Q11.5 8.2 7.2 4.2Z" fill="#e9e9f6" stroke="#35357e" stroke-width="0.9"/><circle cx="11.5" cy="4" r="2.1" fill="#2f2f86"/><circle cx="11.5" cy="3.8" r="0.8" fill="#8f9be0"/></svg>
<div class="t " style="left:80px;top:416.5px;letter-spacing:-0.26px">Local Imperfections</div>
<svg style="left:26px;top:436px" width="8" height="10" viewBox="0 0 8 10"><path d="M1.7 1L5.8 5L1.7 9" fill="none" stroke="#9c9c9c" stroke-width="1.3"/></svg>
<div class="cb" style="left:41px;top:434px"></div>
<svg style="left:41px;top:434px" width="13" height="13"><path d="M2.6 6.4L5.3 9.3L10.4 3.2" fill="none" stroke="#222" stroke-width="1.2"/></svg>
<svg style="left:59px;top:432px" width="16" height="16" viewBox="0 0 16 16"><path d="M6.8 6.8Q1.6 11 6.3 16.4" fill="none" stroke="#27b24a" stroke-width="1.5"/><path d="M7.6 6.5V16.8" stroke="#111" stroke-width="1.3" stroke-dasharray="1.7 1.1"/><path d="M7 8.3Q4.3 11.2 6.6 14.8" stroke="#333" stroke-width="0.7" fill="none"/><path d="M7.2 4.2Q11.5 -0.3 15.8 4.2Q11.5 8.2 7.2 4.2Z" fill="#e9e9f6" stroke="#35357e" stroke-width="0.9"/><circle cx="11.5" cy="4" r="2.1" fill="#2f2f86"/><circle cx="11.5" cy="3.8" r="0.8" fill="#8f9be0"/></svg>
<div class="t " style="left:80px;top:434.5px;letter-spacing:-0.15px">Global Imperfections</div>
<div class="cb" style="left:41px;top:452px"></div>
<svg style="left:41px;top:452px" width="13" height="13"><path d="M2.6 6.4L5.3 9.3L10.4 3.2" fill="none" stroke="#222" stroke-width="1.2"/></svg>
<svg style="left:59px;top:450px" width="16" height="16" viewBox="0 0 16 16"><path d="M6.8 6.8Q1.6 11 6.3 16.4" fill="none" stroke="#27b24a" stroke-width="1.5"/><path d="M7.6 6.5V16.8" stroke="#111" stroke-width="1.3" stroke-dasharray="1.7 1.1"/><path d="M7 8.3Q4.3 11.2 6.6 14.8" stroke="#333" stroke-width="0.7" fill="none"/><path d="M7.2 4.2Q11.5 -0.3 15.8 4.2Q11.5 8.2 7.2 4.2Z" fill="#e9e9f6" stroke="#35357e" stroke-width="0.9"/><circle cx="11.5" cy="4" r="2.1" fill="#2f2f86"/><circle cx="11.5" cy="3.8" r="0.8" fill="#8f9be0"/></svg>
<div class="t " style="left:80px;top:452.5px;letter-spacing:-0.27px">Display Imperfections in Load C...</div>
<svg style="left:4px;top:474px" width="11" height="8" viewBox="0 0 11 8"><path d="M1.2 1.5L5.5 5.8L9.8 1.5" fill="none" stroke="#2a2a2a" stroke-width="1.5"/></svg>
<div class="cb" style="left:21px;top:470px"></div>
<svg style="left:21px;top:470px" width="13" height="13"><path d="M2.6 6.4L5.3 9.3L10.4 3.2" fill="none" stroke="#222" stroke-width="1.2"/></svg>
<svg style="left:39px;top:468px" width="16" height="16" viewBox="0 0 16 16"><path d="M5 6.8V12.8" stroke="#6088c6" stroke-width="1.7"/><path d="M2.3 11.2L5 15L7.7 11.2Z" fill="#5a82c2"/><path d="M0.5 16.1H15.5" stroke="#444" stroke-width="1.5"/><path d="M7.2 4.2Q11.5 -0.3 15.8 4.2Q11.5 8.2 7.2 4.2Z" fill="#e9e9f6" stroke="#35357e" stroke-width="0.9"/><circle cx="11.5" cy="4" r="2.1" fill="#2f2f86"/><circle cx="11.5" cy="3.8" r="0.8" fill="#8f9be0"/></svg>
<div class="t " style="left:60px;top:470.5px;letter-spacing:-0.52px">Loads</div>
<svg style="left:24px;top:492px" width="11" height="8" viewBox="0 0 11 8"><path d="M1.2 1.5L5.5 5.8L9.8 1.5" fill="none" stroke="#2a2a2a" stroke-width="1.5"/></svg>
<div class="cb" style="left:41px;top:488px"></div>
<svg style="left:41px;top:488px" width="13" height="13"><path d="M2.6 6.4L5.3 9.3L10.4 3.2" fill="none" stroke="#222" stroke-width="1.2"/></svg>
<svg style="left:59px;top:486px" width="16" height="16" viewBox="0 0 16 16"><path d="M5 6.8V12.8" stroke="#6088c6" stroke-width="1.7"/><path d="M2.3 11.2L5 15L7.7 11.2Z" fill="#5a82c2"/><path d="M0.5 16.1H15.5" stroke="#444" stroke-width="1.5"/><path d="M7.2 4.2Q11.5 -0.3 15.8 4.2Q11.5 8.2 7.2 4.2Z" fill="#e9e9f6" stroke="#35357e" stroke-width="0.9"/><circle cx="11.5" cy="4" r="2.1" fill="#2f2f86"/><circle cx="11.5" cy="3.8" r="0.8" fill="#8f9be0"/></svg>
<div class="t " style="left:80px;top:488.5px;letter-spacing:-0.43px">Load Values</div>
<div class="cb" style="left:61px;top:506px"></div>
<svg style="left:79px;top:504px" width="16" height="16" viewBox="0 0 16 16"><path d="M5 6.8V12.8" stroke="#6088c6" stroke-width="1.7"/><path d="M2.3 11.2L5 15L7.7 11.2Z" fill="#5a82c2"/><path d="M0.5 16.1H15.5" stroke="#444" stroke-width="1.5"/><path d="M7.2 4.2Q11.5 -0.3 15.8 4.2Q11.5 8.2 7.2 4.2Z" fill="#e9e9f6" stroke="#35357e" stroke-width="0.9"/><circle cx="11.5" cy="4" r="2.1" fill="#2f2f86"/><circle cx="11.5" cy="3.8" r="0.8" fill="#8f9be0"/></svg>
<div class="t " style="left:100px;top:506.5px;letter-spacing:-0.05px">Units</div>
<div class="cb" style="left:61px;top:524px"></div>
<svg style="left:79px;top:522px" width="16" height="16" viewBox="0 0 16 16"><path d="M5 6.8V12.8" stroke="#6088c6" stroke-width="1.7"/><path d="M2.3 11.2L5 15L7.7 11.2Z" fill="#5a82c2"/><path d="M0.5 16.1H15.5" stroke="#444" stroke-width="1.5"/><path d="M7.2 4.2Q11.5 -0.3 15.8 4.2Q11.5 8.2 7.2 4.2Z" fill="#e9e9f6" stroke="#35357e" stroke-width="0.9"/><circle cx="11.5" cy="4" r="2.1" fill="#2f2f86"/><circle cx="11.5" cy="3.8" r="0.8" fill="#8f9be0"/></svg>
<div class="t " style="left:100px;top:524.5px;letter-spacing:-0.53px">Load Case Numbers</div>
<div class="cb" style="left:61px;top:542px"></div>
<svg style="left:79px;top:540px" width="16" height="16" viewBox="0 0 16 16"><path d="M5 6.8V12.8" stroke="#6088c6" stroke-width="1.7"/><path d="M2.3 11.2L5 15L7.7 11.2Z" fill="#5a82c2"/><path d="M0.5 16.1H15.5" stroke="#444" stroke-width="1.5"/><path d="M7.2 4.2Q11.5 -0.3 15.8 4.2Q11.5 8.2 7.2 4.2Z" fill="#e9e9f6" stroke="#35357e" stroke-width="0.9"/><circle cx="11.5" cy="4" r="2.1" fill="#2f2f86"/><circle cx="11.5" cy="3.8" r="0.8" fill="#8f9be0"/></svg>
<div class="t " style="left:100px;top:542.5px;letter-spacing:-0.38px">Load Case Descriptions</div>
<div class="cb" style="left:41px;top:560px"></div>
<svg style="left:41px;top:560px" width="13" height="13"><path d="M2.6 6.4L5.3 9.3L10.4 3.2" fill="none" stroke="#222" stroke-width="1.2"/></svg>
<svg style="left:59px;top:558px" width="16" height="16" viewBox="0 0 16 16"><path d="M5 6.8V12.8" stroke="#6088c6" stroke-width="1.7"/><path d="M2.3 11.2L5 15L7.7 11.2Z" fill="#5a82c2"/><path d="M0.5 16.1H15.5" stroke="#444" stroke-width="1.5"/><path d="M7.2 4.2Q11.5 -0.3 15.8 4.2Q11.5 8.2 7.2 4.2Z" fill="#e9e9f6" stroke="#35357e" stroke-width="0.9"/><circle cx="11.5" cy="4" r="2.1" fill="#2f2f86"/><circle cx="11.5" cy="3.8" r="0.8" fill="#8f9be0"/></svg>
<div class="t " style="left:80px;top:560.5px;letter-spacing:0.03px">Title Information</div>
<div class="cb" style="left:41px;top:578px"></div>
<svg style="left:59px;top:576px" width="16" height="16" viewBox="0 0 16 16"><path d="M5 6.8V12.8" stroke="#6088c6" stroke-width="1.7"/><path d="M2.3 11.2L5 15L7.7 11.2Z" fill="#5a82c2"/><path d="M0.5 16.1H15.5" stroke="#444" stroke-width="1.5"/><path d="M7.2 4.2Q11.5 -0.3 15.8 4.2Q11.5 8.2 7.2 4.2Z" fill="#e9e9f6" stroke="#35357e" stroke-width="0.9"/><circle cx="11.5" cy="4" r="2.1" fill="#2f2f86"/><circle cx="11.5" cy="3.8" r="0.8" fill="#8f9be0"/></svg>
<div class="t " style="left:80px;top:578.5px;letter-spacing:-0.02px">Self-weight</div>
<svg style="left:24px;top:600px" width="11" height="8" viewBox="0 0 11 8"><path d="M1.2 1.5L5.5 5.8L9.8 1.5" fill="none" stroke="#2a2a2a" stroke-width="1.5"/></svg>
<div class="cb" style="left:41px;top:596px"></div>
<svg style="left:41px;top:596px" width="13" height="13"><path d="M2.6 6.4L5.3 9.3L10.4 3.2" fill="none" stroke="#222" stroke-width="1.2"/></svg>
<svg style="left:59px;top:594px" width="16" height="16" viewBox="0 0 16 16"><path d="M5 6.8V12.8" stroke="#6088c6" stroke-width="1.7"/><path d="M2.3 11.2L5 15L7.7 11.2Z" fill="#5a82c2"/><path d="M0.5 16.1H15.5" stroke="#444" stroke-width="1.5"/><path d="M7.2 4.2Q11.5 -0.3 15.8 4.2Q11.5 8.2 7.2 4.2Z" fill="#e9e9f6" stroke="#35357e" stroke-width="0.9"/><circle cx="11.5" cy="4" r="2.1" fill="#2f2f86"/><circle cx="11.5" cy="3.8" r="0.8" fill="#8f9be0"/></svg>
<div class="t " style="left:80px;top:596.5px;letter-spacing:-0.30px">Object Loads</div>
<svg style="left:46px;top:616px" width="8" height="10" viewBox="0 0 8 10"><path d="M1.7 1L5.8 5L1.7 9" fill="none" stroke="#9c9c9c" stroke-width="1.3"/></svg>
<div class="cb" style="left:61px;top:614px"></div>
<svg style="left:61px;top:614px" width="13" height="13"><path d="M2.6 6.4L5.3 9.3L10.4 3.2" fill="none" stroke="#222" stroke-width="1.2"/></svg>
<svg style="left:79px;top:612px" width="16" height="16" viewBox="0 0 16 16"><path d="M5 6.8V12.8" stroke="#6088c6" stroke-width="1.7"/><path d="M2.3 11.2L5 15L7.7 11.2Z" fill="#5a82c2"/><path d="M0.5 16.1H15.5" stroke="#444" stroke-width="1.5"/><path d="M7.2 4.2Q11.5 -0.3 15.8 4.2Q11.5 8.2 7.2 4.2Z" fill="#e9e9f6" stroke="#35357e" stroke-width="0.9"/><circle cx="11.5" cy="4" r="2.1" fill="#2f2f86"/><circle cx="11.5" cy="3.8" r="0.8" fill="#8f9be0"/></svg>
<div class="t " style="left:100px;top:614.5px;letter-spacing:-0.30px">Nodal Loads</div>
<svg style="left:46px;top:634px" width="8" height="10" viewBox="0 0 8 10"><path d="M1.7 1L5.8 5L1.7 9" fill="none" stroke="#9c9c9c" stroke-width="1.3"/></svg>
<div class="cb" style="left:61px;top:632px"></div>
<svg style="left:61px;top:632px" width="13" height="13"><path d="M2.6 6.4L5.3 9.3L10.4 3.2" fill="none" stroke="#222" stroke-width="1.2"/></svg>
<svg style="left:79px;top:630px" width="16" height="16" viewBox="0 0 16 16"><path d="M5 6.8V12.8" stroke="#6088c6" stroke-width="1.7"/><path d="M2.3 11.2L5 15L7.7 11.2Z" fill="#5a82c2"/><path d="M0.5 16.1H15.5" stroke="#444" stroke-width="1.5"/><path d="M7.2 4.2Q11.5 -0.3 15.8 4.2Q11.5 8.2 7.2 4.2Z" fill="#e9e9f6" stroke="#35357e" stroke-width="0.9"/><circle cx="11.5" cy="4" r="2.1" fill="#2f2f86"/><circle cx="11.5" cy="3.8" r="0.8" fill="#8f9be0"/></svg>
<div class="t " style="left:100px;top:632.5px;letter-spacing:-0.46px">Line Loads</div>
<svg style="left:46px;top:652px" width="8" height="10" viewBox="0 0 8 10"><path d="M1.7 1L5.8 5L1.7 9" fill="none" stroke="#9c9c9c" stroke-width="1.3"/></svg>
<div class="cb" style="left:61px;top:650px"></div>
<svg style="left:61px;top:650px" width="13" height="13"><path d="M2.6 6.4L5.3 9.3L10.4 3.2" fill="none" stroke="#222" stroke-width="1.2"/></svg>
<svg style="left:79px;top:648px" width="16" height="16" viewBox="0 0 16 16"><path d="M5 6.8V12.8" stroke="#6088c6" stroke-width="1.7"/><path d="M2.3 11.2L5 15L7.7 11.2Z" fill="#5a82c2"/><path d="M0.5 16.1H15.5" stroke="#444" stroke-width="1.5"/><path d="M7.2 4.2Q11.5 -0.3 15.8 4.2Q11.5 8.2 7.2 4.2Z" fill="#e9e9f6" stroke="#35357e" stroke-width="0.9"/><circle cx="11.5" cy="4" r="2.1" fill="#2f2f86"/><circle cx="11.5" cy="3.8" r="0.8" fill="#8f9be0"/></svg>
<div class="t " style="left:100px;top:650.5px;letter-spacing:-0.41px">Member Loads</div>
<svg style="left:46px;top:670px" width="8" height="10" viewBox="0 0 8 10"><path d="M1.7 1L5.8 5L1.7 9" fill="none" stroke="#9c9c9c" stroke-width="1.3"/></svg>
<div class="cb" style="left:61px;top:668px"></div>
<svg style="left:61px;top:668px" width="13" height="13"><path d="M2.6 6.4L5.3 9.3L10.4 3.2" fill="none" stroke="#222" stroke-width="1.2"/></svg>
<svg style="left:79px;top:666px" width="16" height="16" viewBox="0 0 16 16"><path d="M5 6.8V12.8" stroke="#6088c6" stroke-width="1.7"/><path d="M2.3 11.2L5 15L7.7 11.2Z" fill="#5a82c2"/><path d="M0.5 16.1H15.5" stroke="#444" stroke-width="1.5"/><path d="M7.2 4.2Q11.5 -0.3 15.8 4.2Q11.5 8.2 7.2 4.2Z" fill="#e9e9f6" stroke="#35357e" stroke-width="0.9"/><circle cx="11.5" cy="4" r="2.1" fill="#2f2f86"/><circle cx="11.5" cy="3.8" r="0.8" fill="#8f9be0"/></svg>
<div class="t " style="left:100px;top:668.5px;letter-spacing:-0.48px">Surface Loads</div>
<svg style="left:46px;top:688px" width="8" height="10" viewBox="0 0 8 10"><path d="M1.7 1L5.8 5L1.7 9" fill="none" stroke="#9c9c9c" stroke-width="1.3"/></svg>
<div class="cb" style="left:61px;top:686px"></div>
<svg style="left:61px;top:686px" width="13" height="13"><path d="M2.6 6.4L5.3 9.3L10.4 3.2" fill="none" stroke="#222" stroke-width="1.2"/></svg>
<svg style="left:79px;top:684px" width="16" height="16" viewBox="0 0 16 16"><path d="M5 6.8V12.8" stroke="#6088c6" stroke-width="1.7"/><path d="M2.3 11.2L5 15L7.7 11.2Z" fill="#5a82c2"/><path d="M0.5 16.1H15.5" stroke="#444" stroke-width="1.5"/><path d="M7.2 4.2Q11.5 -0.3 15.8 4.2Q11.5 8.2 7.2 4.2Z" fill="#e9e9f6" stroke="#35357e" stroke-width="0.9"/><circle cx="11.5" cy="4" r="2.1" fill="#2f2f86"/><circle cx="11.5" cy="3.8" r="0.8" fill="#8f9be0"/></svg>
<div class="t " style="left:100px;top:686.5px;letter-spacing:-0.18px">Opening Loads</div>
<svg style="left:46px;top:706px" width="8" height="10" viewBox="0 0 8 10"><path d="M1.7 1L5.8 5L1.7 9" fill="none" stroke="#9c9c9c" stroke-width="1.3"/></svg>
<div class="cb" style="left:61px;top:704px"></div>
<svg style="left:61px;top:704px" width="13" height="13"><path d="M2.6 6.4L5.3 9.3L10.4 3.2" fill="none" stroke="#222" stroke-width="1.2"/></svg>
<svg style="left:79px;top:702px" width="16" height="16" viewBox="0 0 16 16"><path d="M5 6.8V12.8" stroke="#6088c6" stroke-width="1.7"/><path d="M2.3 11.2L5 15L7.7 11.2Z" fill="#5a82c2"/><path d="M0.5 16.1H15.5" stroke="#444" stroke-width="1.5"/><path d="M7.2 4.2Q11.5 -0.3 15.8 4.2Q11.5 8.2 7.2 4.2Z" fill="#e9e9f6" stroke="#35357e" stroke-width="0.9"/><circle cx="11.5" cy="4" r="2.1" fill="#2f2f86"/><circle cx="11.5" cy="3.8" r="0.8" fill="#8f9be0"/></svg>
<div class="t " style="left:100px;top:704.5px;letter-spacing:-0.33px">Solid Loads</div>
<svg style="left:46px;top:724px" width="8" height="10" viewBox="0 0 8 10"><path d="M1.7 1L5.8 5L1.7 9" fill="none" stroke="#9c9c9c" stroke-width="1.3"/></svg>
<div class="cb" style="left:61px;top:722px"></div>
<svg style="left:61px;top:722px" width="13" height="13"><path d="M2.6 6.4L5.3 9.3L10.4 3.2" fill="none" stroke="#222" stroke-width="1.2"/></svg>
<svg style="left:79px;top:720px" width="16" height="16" viewBox="0 0 16 16"><path d="M5 6.8V12.8" stroke="#6088c6" stroke-width="1.7"/><path d="M2.3 11.2L5 15L7.7 11.2Z" fill="#5a82c2"/><path d="M0.5 16.1H15.5" stroke="#444" stroke-width="1.5"/><path d="M7.2 4.2Q11.5 -0.3 15.8 4.2Q11.5 8.2 7.2 4.2Z" fill="#e9e9f6" stroke="#35357e" stroke-width="0.9"/><circle cx="11.5" cy="4" r="2.1" fill="#2f2f86"/><circle cx="11.5" cy="3.8" r="0.8" fill="#8f9be0"/></svg>
<div class="t " style="left:100px;top:722.5px;letter-spacing:-0.50px">Line Set Loads</div>
<svg style="left:46px;top:742px" width="8" height="10" viewBox="0 0 8 10"><path d="M1.7 1L5.8 5L1.7 9" fill="none" stroke="#9c9c9c" stroke-width="1.3"/></svg>
<div class="cb" style="left:61px;top:740px"></div>
<svg style="left:61px;top:740px" width="13" height="13"><path d="M2.6 6.4L5.3 9.3L10.4 3.2" fill="none" stroke="#222" stroke-width="1.2"/></svg>
<svg style="left:79px;top:738px" width="16" height="16" viewBox="0 0 16 16"><path d="M5 6.8V12.8" stroke="#6088c6" stroke-width="1.7"/><path d="M2.3 11.2L5 15L7.7 11.2Z" fill="#5a82c2"/><path d="M0.5 16.1H15.5" stroke="#444" stroke-width="1.5"/><path d="M7.2 4.2Q11.5 -0.3 15.8 4.2Q11.5 8.2 7.2 4.2Z" fill="#e9e9f6" stroke="#35357e" stroke-width="0.9"/><circle cx="11.5" cy="4" r="2.1" fill="#2f2f86"/><circle cx="11.5" cy="3.8" r="0.8" fill="#8f9be0"/></svg>
<div class="t " style="left:100px;top:740.5px;letter-spacing:-0.46px">Member Set Loads</div>
<svg style="left:46px;top:760px" width="8" height="10" viewBox="0 0 8 10"><path d="M1.7 1L5.8 5L1.7 9" fill="none" stroke="#9c9c9c" stroke-width="1.3"/></svg>
<div class="cb" style="left:61px;top:758px"></div>
<svg style="left:61px;top:758px" width="13" height="13"><path d="M2.6 6.4L5.3 9.3L10.4 3.2" fill="none" stroke="#222" stroke-width="1.2"/></svg>
<svg style="left:79px;top:756px" width="16" height="16" viewBox="0 0 16 16"><path d="M5 6.8V12.8" stroke="#6088c6" stroke-width="1.7"/><path d="M2.3 11.2L5 15L7.7 11.2Z" fill="#5a82c2"/><path d="M0.5 16.1H15.5" stroke="#444" stroke-width="1.5"/><path d="M7.2 4.2Q11.5 -0.3 15.8 4.2Q11.5 8.2 7.2 4.2Z" fill="#e9e9f6" stroke="#35357e" stroke-width="0.9"/><circle cx="11.5" cy="4" r="2.1" fill="#2f2f86"/><circle cx="11.5" cy="3.8" r="0.8" fill="#8f9be0"/></svg>
<div class="t " style="left:100px;top:758.5px;letter-spacing:-0.51px">Surface Set Loads</div>
<svg style="left:46px;top:778px" width="8" height="10" viewBox="0 0 8 10"><path d="M1.7 1L5.8 5L1.7 9" fill="none" stroke="#9c9c9c" stroke-width="1.3"/></svg>
<div class="cb" style="left:61px;top:776px"></div>
<svg style="left:61px;top:776px" width="13" height="13"><path d="M2.6 6.4L5.3 9.3L10.4 3.2" fill="none" stroke="#222" stroke-width="1.2"/></svg>
<svg style="left:79px;top:774px" width="16" height="16" viewBox="0 0 16 16"><path d="M5 6.8V12.8" stroke="#6088c6" stroke-width="1.7"/><path d="M2.3 11.2L5 15L7.7 11.2Z" fill="#5a82c2"/><path d="M0.5 16.1H15.5" stroke="#444" stroke-width="1.5"/><path d="M7.2 4.2Q11.5 -0.3 15.8 4.2Q11.5 8.2 7.2 4.2Z" fill="#e9e9f6" stroke="#35357e" stroke-width="0.9"/><circle cx="11.5" cy="4" r="2.1" fill="#2f2f86"/><circle cx="11.5" cy="3.8" r="0.8" fill="#8f9be0"/></svg>
<div class="t " style="left:100px;top:776.5px;letter-spacing:-0.40px">Solid Set Loads</div>
<svg style="left:46px;top:796px" width="8" height="10" viewBox="0 0 8 10"><path d="M1.7 1L5.8 5L1.7 9" fill="none" stroke="#9c9c9c" stroke-width="1.3"/></svg>
<div class="cb" style="left:61px;top:794px"></div>
<svg style="left:61px;top:794px" width="13" height="13"><path d="M2.6 6.4L5.3 9.3L10.4 3.2" fill="none" stroke="#222" stroke-width="1.2"/></svg>
<svg style="left:79px;top:792px" width="16" height="16" viewBox="0 0 16 16"><path d="M5 6.8V12.8" stroke="#6088c6" stroke-width="1.7"/><path d="M2.3 11.2L5 15L7.7 11.2Z" fill="#5a82c2"/><path d="M0.5 16.1H15.5" stroke="#444" stroke-width="1.5"/><path d="M7.2 4.2Q11.5 -0.3 15.8 4.2Q11.5 8.2 7.2 4.2Z" fill="#e9e9f6" stroke="#35357e" stroke-width="0.9"/><circle cx="11.5" cy="4" r="2.1" fill="#2f2f86"/><circle cx="11.5" cy="3.8" r="0.8" fill="#8f9be0"/></svg>
<div class="t " style="left:100px;top:794.5px;letter-spacing:-0.35px">Free Concentrated Loads</div>
<svg style="left:46px;top:814px" width="8" height="10" viewBox="0 0 8 10"><path d="M1.7 1L5.8 5L1.7 9" fill="none" stroke="#9c9c9c" stroke-width="1.3"/></svg>
<div class="cb" style="left:61px;top:812px"></div>
<svg style="left:61px;top:812px" width="13" height="13"><path d="M2.6 6.4L5.3 9.3L10.4 3.2" fill="none" stroke="#222" stroke-width="1.2"/></svg>
<svg style="left:79px;top:810px" width="16" height="16" viewBox="0 0 16 16"><path d="M5 6.8V12.8" stroke="#6088c6" stroke-width="1.7"/><path d="M2.3 11.2L5 15L7.7 11.2Z" fill="#5a82c2"/><path d="M0.5 16.1H15.5" stroke="#444" stroke-width="1.5"/><path d="M7.2 4.2Q11.5 -0.3 15.8 4.2Q11.5 8.2 7.2 4.2Z" fill="#e9e9f6" stroke="#35357e" stroke-width="0.9"/><circle cx="11.5" cy="4" r="2.1" fill="#2f2f86"/><circle cx="11.5" cy="3.8" r="0.8" fill="#8f9be0"/></svg>
<div class="t " style="left:100px;top:812.5px;letter-spacing:-0.51px">Free Line Loads</div>
<svg style="left:46px;top:832px" width="8" height="10" viewBox="0 0 8 10"><path d="M1.7 1L5.8 5L1.7 9" fill="none" stroke="#9c9c9c" stroke-width="1.3"/></svg>
<div class="cb" style="left:61px;top:830px"></div>
<svg style="left:61px;top:830px" width="13" height="13"><path d="M2.6 6.4L5.3 9.3L10.4 3.2" fill="none" stroke="#222" stroke-width="1.2"/></svg>
<svg style="left:79px;top:828px" width="16" height="16" viewBox="0 0 16 16"><path d="M5 6.8V12.8" stroke="#6088c6" stroke-width="1.7"/><path d="M2.3 11.2L5 15L7.7 11.2Z" fill="#5a82c2"/><path d="M0.5 16.1H15.5" stroke="#444" stroke-width="1.5"/><path d="M7.2 4.2Q11.5 -0.3 15.8 4.2Q11.5 8.2 7.2 4.2Z" fill="#e9e9f6" stroke="#35357e" stroke-width="0.9"/><circle cx="11.5" cy="4" r="2.1" fill="#2f2f86"/><circle cx="11.5" cy="3.8" r="0.8" fill="#8f9be0"/></svg>
<div class="t " style="left:100px;top:830.5px;letter-spacing:-0.39px">Free Rectangular Loads</div>
<svg style="left:46px;top:850px" width="8" height="10" viewBox="0 0 8 10"><path d="M1.7 1L5.8 5L1.7 9" fill="none" stroke="#9c9c9c" stroke-width="1.3"/></svg>
<div class="cb" style="left:61px;top:848px"></div>
<svg style="left:61px;top:848px" width="13" height="13"><path d="M2.6 6.4L5.3 9.3L10.4 3.2" fill="none" stroke="#222" stroke-width="1.2"/></svg>
<svg style="left:79px;top:846px" width="16" height="16" viewBox="0 0 16 16"><path d="M5 6.8V12.8" stroke="#6088c6" stroke-width="1.7"/><path d="M2.3 11.2L5 15L7.7 11.2Z" fill="#5a82c2"/><path d="M0.5 16.1H15.5" stroke="#444" stroke-width="1.5"/><path d="M7.2 4.2Q11.5 -0.3 15.8 4.2Q11.5 8.2 7.2 4.2Z" fill="#e9e9f6" stroke="#35357e" stroke-width="0.9"/><circle cx="11.5" cy="4" r="2.1" fill="#2f2f86"/><circle cx="11.5" cy="3.8" r="0.8" fill="#8f9be0"/></svg>
<div class="t " style="left:100px;top:848.5px;letter-spacing:-0.44px">Free Circular Loads</div>
<svg style="left:46px;top:868px" width="8" height="10" viewBox="0 0 8 10"><path d="M1.7 1L5.8 5L1.7 9" fill="none" stroke="#9c9c9c" stroke-width="1.3"/></svg>
<div class="cb" style="left:61px;top:866px"></div>
<svg style="left:61px;top:866px" width="13" height="13"><path d="M2.6 6.4L5.3 9.3L10.4 3.2" fill="none" stroke="#222" stroke-width="1.2"/></svg>
<svg style="left:79px;top:864px" width="16" height="16" viewBox="0 0 16 16"><path d="M5 6.8V12.8" stroke="#6088c6" stroke-width="1.7"/><path d="M2.3 11.2L5 15L7.7 11.2Z" fill="#5a82c2"/><path d="M0.5 16.1H15.5" stroke="#444" stroke-width="1.5"/><path d="M7.2 4.2Q11.5 -0.3 15.8 4.2Q11.5 8.2 7.2 4.2Z" fill="#e9e9f6" stroke="#35357e" stroke-width="0.9"/><circle cx="11.5" cy="4" r="2.1" fill="#2f2f86"/><circle cx="11.5" cy="3.8" r="0.8" fill="#8f9be0"/></svg>
<div class="t " style="left:100px;top:866.5px;letter-spacing:-0.41px">Free Polygon Loads</div>
<div class="cb" style="left:61px;top:884px"></div>
<svg style="left:61px;top:884px" width="13" height="13"><path d="M2.6 6.4L5.3 9.3L10.4 3.2" fill="none" stroke="#222" stroke-width="1.2"/></svg>
<svg style="left:79px;top:882px" width="16" height="16" viewBox="0 0 16 16"><path d="M5 6.8V12.8" stroke="#6088c6" stroke-width="1.7"/><path d="M2.3 11.2L5 15L7.7 11.2Z" fill="#5a82c2"/><path d="M0.5 16.1H15.5" stroke="#444" stroke-width="1.5"/><path d="M7.2 4.2Q11.5 -0.3 15.8 4.2Q11.5 8.2 7.2 4.2Z" fill="#e9e9f6" stroke="#35357e" stroke-width="0.9"/><circle cx="11.5" cy="4" r="2.1" fill="#2f2f86"/><circle cx="11.5" cy="3.8" r="0.8" fill="#8f9be0"/></svg>
<div class="t " style="left:100px;top:884.5px;letter-spacing:-0.17px">Imposed Nodal Deformatio...</div>
<div class="cb" style="left:61px;top:902px"></div>
<svg style="left:61px;top:902px" width="13" height="13"><path d="M2.6 6.4L5.3 9.3L10.4 3.2" fill="none" stroke="#222" stroke-width="1.2"/></svg>
<svg style="left:79px;top:900px" width="16" height="16" viewBox="0 0 16 16"><path d="M5 6.8V12.8" stroke="#6088c6" stroke-width="1.7"/><path d="M2.3 11.2L5 15L7.7 11.2Z" fill="#5a82c2"/><path d="M0.5 16.1H15.5" stroke="#444" stroke-width="1.5"/><path d="M7.2 4.2Q11.5 -0.3 15.8 4.2Q11.5 8.2 7.2 4.2Z" fill="#e9e9f6" stroke="#35357e" stroke-width="0.9"/><circle cx="11.5" cy="4" r="2.1" fill="#2f2f86"/><circle cx="11.5" cy="3.8" r="0.8" fill="#8f9be0"/></svg>
<div class="t " style="left:100px;top:902.5px;letter-spacing:-0.23px">Imposed Line Deformations</div>
<svg style="left:26px;top:922px" width="8" height="10" viewBox="0 0 8 10"><path d="M1.7 1L5.8 5L1.7 9" fill="none" stroke="#9c9c9c" stroke-width="1.3"/></svg>
<div class="cb" style="left:41px;top:920px"></div>
<svg style="left:41px;top:920px" width="13" height="13"><path d="M2.6 6.4L5.3 9.3L10.4 3.2" fill="none" stroke="#222" stroke-width="1.2"/></svg>
<svg style="left:59px;top:918px" width="16" height="16" viewBox="0 0 16 16"><path d="M5 6.8V12.8" stroke="#6088c6" stroke-width="1.7"/><path d="M2.3 11.2L5 15L7.7 11.2Z" fill="#5a82c2"/><path d="M0.5 16.1H15.5" stroke="#444" stroke-width="1.5"/><path d="M7.2 4.2Q11.5 -0.3 15.8 4.2Q11.5 8.2 7.2 4.2Z" fill="#e9e9f6" stroke="#35357e" stroke-width="0.9"/><circle cx="11.5" cy="4" r="2.1" fill="#2f2f86"/><circle cx="11.5" cy="3.8" r="0.8" fill="#8f9be0"/></svg>
<div class="t " style="left:80px;top:920.5px;letter-spacing:-0.36px">Load Wizards</div>
<div class="cb" style="left:21px;top:938px"></div>
<svg style="left:39px;top:936px" width="16" height="16" viewBox="0 0 16 16"><path d="M0 10.6L9 10.2L0 14.2Z" fill="#2346a8"/><path d="M8.5 9.6L16 9V5.8Z" fill="#e02a1e"/><path d="M0 10.3L16 9.2" stroke="#1a1a1a" stroke-width="1.1"/><path d="M7.2 4.2Q11.5 -0.3 15.8 4.2Q11.5 8.2 7.2 4.2Z" fill="#e9e9f6" stroke="#35357e" stroke-width="0.9"/><circle cx="11.5" cy="4" r="2.1" fill="#2f2f86"/><circle cx="11.5" cy="3.8" r="0.8" fill="#8f9be0"/></svg>
<div class="t " style="left:60px;top:938.5px;letter-spacing:-0.42px">Results</div>
<svg style="left:6px;top:958px" width="8" height="10" viewBox="0 0 8 10"><path d="M1.7 1L5.8 5L1.7 9" fill="none" stroke="#9c9c9c" stroke-width="1.3"/></svg>
<div class="cb" style="left:21px;top:956px"></div>
<svg style="left:21px;top:956px" width="13" height="13"><path d="M2.6 6.4L5.3 9.3L10.4 3.2" fill="none" stroke="#222" stroke-width="1.2"/></svg>
<svg style="left:39px;top:954px" width="16" height="16" viewBox="0 0 16 16"><path d="M0 10.6L9 10.2L0 14.2Z" fill="#2346a8"/><path d="M8.5 9.6L16 9V5.8Z" fill="#e02a1e"/><path d="M0 10.3L16 9.2" stroke="#1a1a1a" stroke-width="1.1"/><path d="M7.2 4.2Q11.5 -0.3 15.8 4.2Q11.5 8.2 7.2 4.2Z" fill="#e9e9f6" stroke="#35357e" stroke-width="0.9"/><circle cx="11.5" cy="4" r="2.1" fill="#2f2f86"/><circle cx="11.5" cy="3.8" r="0.8" fill="#8f9be0"/></svg>
<div class="t " style="left:60px;top:956.5px;letter-spacing:-0.28px">Result Objects</div>
<svg style="left:4px;top:978px" width="11" height="8" viewBox="0 0 11 8"><path d="M1.2 1.5L5.5 5.8L9.8 1.5" fill="none" stroke="#2a2a2a" stroke-width="1.5"/></svg>
<div class="cb" style="left:21px;top:974px"></div>
<svg style="left:39px;top:972px" width="16" height="16" viewBox="0 0 16 16"><rect x="0.6" y="5" width="12" height="11" fill="#86b4e4" stroke="#4a74ac" stroke-width="0.9"/><path d="M0.6 5H8.6V12.3H0.6Z" fill="#a9d0f2"/><path d="M4.6 5V16M8.6 5V16M0.6 8.7H12.6M0.6 12.3H12.6" stroke="#3f6498" stroke-width="0.9"/><path d="M7.2 4.2Q11.5 -0.3 15.8 4.2Q11.5 8.2 7.2 4.2Z" fill="#e9e9f6" stroke="#35357e" stroke-width="0.9"/><circle cx="11.5" cy="4" r="2.1" fill="#2f2f86"/><circle cx="11.5" cy="3.8" r="0.8" fill="#8f9be0"/></svg>
<div class="t " style="left:60px;top:974.5px;letter-spacing:-0.31px">Mesh</div>
<svg style="left:26px;top:994px" width="8" height="10" viewBox="0 0 8 10"><path d="M1.7 1L5.8 5L1.7 9" fill="none" stroke="#9c9c9c" stroke-width="1.3"/></svg>
<div class="cb" style="left:41px;top:992px"></div>
<svg style="left:59px;top:990px" width="16" height="16" viewBox="0 0 16 16"><rect x="0.6" y="5" width="12" height="11" fill="#86b4e4" stroke="#4a74ac" stroke-width="0.9"/><path d="M0.6 5H8.6V12.3H0.6Z" fill="#a9d0f2"/><path d="M4.6 5V16M8.6 5V16M0.6 8.7H12.6M0.6 12.3H12.6" stroke="#3f6498" stroke-width="0.9"/><path d="M7.2 4.2Q11.5 -0.3 15.8 4.2Q11.5 8.2 7.2 4.2Z" fill="#e9e9f6" stroke="#35357e" stroke-width="0.9"/><circle cx="11.5" cy="4" r="2.1" fill="#2f2f86"/><circle cx="11.5" cy="3.8" r="0.8" fill="#8f9be0"/></svg>
<div class="t " style="left:80px;top:992.5px;letter-spacing:-0.33px">On Members</div>
<svg style="left:26px;top:1012px" width="8" height="10" viewBox="0 0 8 10"><path d="M1.7 1L5.8 5L1.7 9" fill="none" stroke="#9c9c9c" stroke-width="1.3"/></svg>
<div class="cb" style="left:41px;top:1010px"></div>
<svg style="left:41px;top:1010px" width="13" height="13"><path d="M2.6 6.4L5.3 9.3L10.4 3.2" fill="none" stroke="#222" stroke-width="1.2"/></svg>
<svg style="left:59px;top:1008px" width="16" height="16" viewBox="0 0 16 16"><rect x="0.6" y="5" width="12" height="11" fill="#86b4e4" stroke="#4a74ac" stroke-width="0.9"/><path d="M0.6 5H8.6V12.3H0.6Z" fill="#a9d0f2"/><path d="M4.6 5V16M8.6 5V16M0.6 8.7H12.6M0.6 12.3H12.6" stroke="#3f6498" stroke-width="0.9"/><path d="M7.2 4.2Q11.5 -0.3 15.8 4.2Q11.5 8.2 7.2 4.2Z" fill="#e9e9f6" stroke="#35357e" stroke-width="0.9"/><circle cx="11.5" cy="4" r="2.1" fill="#2f2f86"/><circle cx="11.5" cy="3.8" r="0.8" fill="#8f9be0"/></svg>
<div class="t " style="left:80px;top:1010.5px;letter-spacing:-0.42px">On Surfaces</div>
</div>
<div class="a" style="left:277px;top:107px;width:1322px;height:817px;background:#ffffff;"></div>
<svg style="left:0;top:0" width="1600" height="1200" viewBox="0 0 1600 1200"><defs><linearGradient id="cyl" x1="0" x2="1" y1="0" y2="0"><stop offset="0" stop-color="#b0b0b0"/><stop offset="0.25" stop-color="#aaaaaa"/><stop offset="0.55" stop-color="#9a9a9a"/><stop offset="0.78" stop-color="#8e8e8e"/><stop offset="0.93" stop-color="#999999"/><stop offset="1" stop-color="#a3a3a3"/></linearGradient><linearGradient id="fw" x1="0" x2="1" y1="0" y2="0"><stop offset="0" stop-color="#a4a4a4"/><stop offset="1" stop-color="#acacac"/></linearGradient><linearGradient id="dk" x1="0" x2="1" y1="0" y2="0"><stop offset="0" stop-color="#868686"/><stop offset="1" stop-color="#9a9a9a"/></linearGradient><clipPath id="vp"><rect x="277" y="107" width="1322" height="817"/></clipPath></defs><g clip-path="url(#vp)"><polygon points="1080.6,854.4 1102.98,834.78 1242.1,847.94 876.94,943.82 776.3,934.3" fill="#fafafa" stroke="none" stroke-width="1" /><rect x="859.0" y="922.4" width="1.2" height="1.2" fill="#222"/><rect x="888.6" y="925.2" width="1.2" height="1.2" fill="#222"/><rect x="876.9" y="917.7" width="1.2" height="1.2" fill="#222"/><rect x="906.5" y="920.5" width="1.2" height="1.2" fill="#222"/><rect x="936.1" y="923.3" width="1.2" height="1.2" fill="#222"/><rect x="894.8" y="913.0" width="1.2" height="1.2" fill="#222"/><rect x="924.4" y="915.8" width="1.2" height="1.2" fill="#222"/><rect x="954.0" y="918.6" width="1.2" height="1.2" fill="#222"/><rect x="912.7" y="908.3" width="1.2" height="1.2" fill="#222"/><rect x="942.3" y="911.1" width="1.2" height="1.2" fill="#222"/><rect x="971.9" y="913.9" width="1.2" height="1.2" fill="#222"/><rect x="930.6" y="903.6" width="1.2" height="1.2" fill="#222"/><rect x="960.2" y="906.4" width="1.2" height="1.2" fill="#222"/><rect x="989.8" y="909.2" width="1.2" height="1.2" fill="#222"/><rect x="948.5" y="898.9" width="1.2" height="1.2" fill="#222"/><rect x="978.1" y="901.7" width="1.2" height="1.2" fill="#222"/><rect x="1007.7" y="904.5" width="1.2" height="1.2" fill="#222"/><rect x="966.4" y="894.2" width="1.2" height="1.2" fill="#222"/><rect x="996.0" y="897.0" width="1.2" height="1.2" fill="#222"/><rect x="1025.6" y="899.8" width="1.2" height="1.2" fill="#222"/><rect x="984.3" y="889.5" width="1.2" height="1.2" fill="#222"/><rect x="1013.9" y="892.3" width="1.2" height="1.2" fill="#222"/><rect x="1043.5" y="895.1" width="1.2" height="1.2" fill="#222"/><rect x="1002.2" y="884.8" width="1.2" height="1.2" fill="#222"/><rect x="1031.8" y="887.6" width="1.2" height="1.2" fill="#222"/><rect x="1061.4" y="890.4" width="1.2" height="1.2" fill="#222"/><rect x="1020.1" y="880.1" width="1.2" height="1.2" fill="#222"/><rect x="1049.7" y="882.9" width="1.2" height="1.2" fill="#222"/><rect x="1079.3" y="885.7" width="1.2" height="1.2" fill="#222"/><rect x="1038.0" y="875.4" width="1.2" height="1.2" fill="#222"/><rect x="1067.6" y="878.2" width="1.2" height="1.2" fill="#222"/><rect x="1097.2" y="881.0" width="1.2" height="1.2" fill="#222"/><rect x="1055.9" y="870.7" width="1.2" height="1.2" fill="#222"/><rect x="1085.5" y="873.5" width="1.2" height="1.2" fill="#222"/><rect x="1115.1" y="876.3" width="1.2" height="1.2" fill="#222"/><rect x="1073.8" y="866.0" width="1.2" height="1.2" fill="#222"/><rect x="1103.4" y="868.8" width="1.2" height="1.2" fill="#222"/><rect x="1133.0" y="871.6" width="1.2" height="1.2" fill="#222"/><rect x="1091.7" y="861.3" width="1.2" height="1.2" fill="#222"/><rect x="1121.3" y="864.1" width="1.2" height="1.2" fill="#222"/><rect x="1150.9" y="866.9" width="1.2" height="1.2" fill="#222"/><rect x="1109.6" y="856.6" width="1.2" height="1.2" fill="#222"/><rect x="1139.2" y="859.4" width="1.2" height="1.2" fill="#222"/><rect x="1168.8" y="862.2" width="1.2" height="1.2" fill="#222"/><rect x="1097.9" y="849.1" width="1.2" height="1.2" fill="#222"/><rect x="1127.5" y="851.9" width="1.2" height="1.2" fill="#222"/><rect x="1157.1" y="854.7" width="1.2" height="1.2" fill="#222"/><rect x="1186.7" y="857.5" width="1.2" height="1.2" fill="#222"/><rect x="1086.2" y="841.6" width="1.2" height="1.2" fill="#222"/><rect x="1115.8" y="844.4" width="1.2" height="1.2" fill="#222"/><rect x="1145.4" y="847.2" width="1.2" height="1.2" fill="#222"/><rect x="1175.0" y="850.0" width="1.2" height="1.2" fill="#222"/><rect x="1204.6" y="852.8" width="1.2" height="1.2" fill="#222"/><rect x="1104.1" y="836.9" width="1.2" height="1.2" fill="#222"/><rect x="1133.7" y="839.7" width="1.2" height="1.2" fill="#222"/><rect x="1163.3" y="842.5" width="1.2" height="1.2" fill="#222"/><rect x="1192.9" y="845.3" width="1.2" height="1.2" fill="#222"/><rect x="1222.5" y="848.1" width="1.2" height="1.2" fill="#222"/><polygon points="277,509 337,514 317,527 317,926 277,926" fill="#a9a9a9" stroke="none" stroke-width="1" /><path d="M317 526.5 Q319 538 380 545 Q448 551 520 545 Q560 541 575.2 537.8 V926 H317 Z" fill="url(#cyl)"/><polygon points="575.2,537.8 701.8,505.166 701.8,926 575.2,926" fill="url(#fw)" stroke="none" stroke-width="1" /><polygon points="701.8,505.166 882,458.716 882,926 701.8,926" fill="#aaaaaa" stroke="none" stroke-width="1" /><polygon points="702.3,665 881.5,682 702.3,728.6" fill="url(#dk)" stroke="none" stroke-width="1" /><polygon points="702.3,888 881.5,905 812,926 702.3,926" fill="url(#dk)" stroke="none" stroke-width="1" /><polygon points="882,458.716 1080.3,407.6 1080.3,854.5 882,905.3" fill="#a7a7a7" stroke="none" stroke-width="1" /><polygon points="1078.6,408 1080.6,407.6 1080.6,854.5 1078.6,855" fill="#949494" stroke="none" stroke-width="1" /><polygon points="277,330.8 1080.3,407.6 575.2,537.8 337,514 277,509" fill="#8e8e8e" stroke="none" stroke-width="1" /><polygon points="870,379.4 934,385.5 934.4,393.5 870,403" fill="#8e8e8e" stroke="none" stroke-width="1" /><polygon points="277,457 303,449.6 303,457 277,464.5" fill="#a8a8a8" stroke="none" stroke-width="1" /><polygon points="330,453 456,419.7 456,427.2 330,460.5" fill="#a8a8a8" stroke="none" stroke-width="1" /><polygon points="434,417 486.5,403 486.5,411 456,419.2" fill="#a8a8a8" stroke="none" stroke-width="1" /><polygon points="519,407 641,374 641,382 519,414.7" fill="#a8a8a8" stroke="none" stroke-width="1" /><polygon points="549.5,482 703.6,442.5 703.6,449.5 549.5,490.6" fill="#a8a8a8" stroke="none" stroke-width="1" /><polygon points="671,438.8 728.5,425.5 728.5,432.2 703.6,439 680,441.5" fill="#a8a8a8" stroke="none" stroke-width="1" /><polygon points="765,429.9 934,385.5 934.4,393 765,437.2" fill="#a8a8a8" stroke="none" stroke-width="1" /><polygon points="437.2,472 549.5,482 549.5,490.6 437.2,480.2" fill="#e60000" stroke="none" stroke-width="1" /><polygon points="364.5,346.8 378,345 392,347 378,349.3" fill="#e60000" stroke="none" stroke-width="1" /><line x1="698.4" y1="433" x2="698.4" y2="439" stroke="#e03030" stroke-width="1" /><line x1="698.4" y1="438.6" x2="882" y2="458.8" stroke="#4a4a4a" stroke-width="0.8" /><path d="M337 514 Q316 519 317 527 Q320 538 380 544.5 Q448 551 520 545 Q560 541 575.2 537.8 Z" fill="#9b9b9b" stroke="#1e1e1e" stroke-width="0.9"/><line x1="277" y1="509" x2="337" y2="514" stroke="#222" stroke-width="0.9" /><line x1="337" y1="514" x2="575.2" y2="537.8" stroke="#222" stroke-width="0.9" /><line x1="575.2" y1="537.8" x2="1080.3" y2="407.6" stroke="#111" stroke-width="1.1" /><line x1="575.2" y1="537.8" x2="575.2" y2="926" stroke="#555" stroke-width="0.9" /><line x1="701.8" y1="505" x2="701.8" y2="926" stroke="#6a6a6a" stroke-width="1" /><line x1="882" y1="458.8" x2="882" y2="905.3" stroke="#333" stroke-width="1" /><line x1="277" y1="733" x2="317" y2="737" stroke="#666" stroke-width="0.8" /><path d="M317 746 Q320 758 380 765 Q448 772 520 767 Q560 763 575.2 761" fill="none" stroke="#333" stroke-width="0.9" stroke-dasharray="7 1.5"/><line x1="575.2" y1="761" x2="701.8" y2="728.6" stroke="#444" stroke-width="0.9" /><line x1="701.8" y1="728.6" x2="882" y2="682.3" stroke="#111" stroke-width="1.1" /><line x1="882" y1="682.3" x2="1080.3" y2="631" stroke="#333" stroke-width="0.9" /><line x1="882" y1="905.3" x2="1080.3" y2="854.5" stroke="#2e8f99" stroke-width="1" /><line x1="812" y1="926" x2="882" y2="905.3" stroke="#222" stroke-width="1" /><line x1="1081" y1="854.5" x2="1136" y2="840" stroke="#27b3bf" stroke-width="1.1" /><line x1="1081" y1="854.5" x2="1170" y2="863" stroke="#27b3bf" stroke-width="1.1" /><line x1="905" y1="901" x2="990" y2="910" stroke="#c8c8c8" stroke-width="0.8" /><polygon points="933,491 1048.5,461 1048.5,577 933,607.5" fill="none" stroke="#2e8f99" stroke-width="1" /><polygon points="937,496.5 1045,468.5 1045,571.5 937,599.6" fill="none" stroke="#3a3a3a" stroke-width="0.9" /><line x1="937" y1="599.6" x2="958" y2="594" stroke="#111" stroke-width="1.4" /><circle cx="937" cy="496.5" r="1.8" fill="#ff1010"/><circle cx="1045" cy="468.5" r="1.8" fill="#ff1010"/><circle cx="937" cy="599.6" r="1.8" fill="#ff1010"/><circle cx="1045" cy="571.5" r="1.3" fill="#e06060"/><polygon points="933,715 1048.5,685 1048.5,801 933,831.5" fill="none" stroke="#2e8f99" stroke-width="1" /><polygon points="937,720.5 1045,692.5 1045,795.5 937,823.6" fill="none" stroke="#3a3a3a" stroke-width="0.9" /><line x1="937" y1="823.6" x2="958" y2="818" stroke="#111" stroke-width="1.4" /><circle cx="937" cy="720.5" r="1.8" fill="#ff1010"/><circle cx="1045" cy="692.5" r="1.8" fill="#ff1010"/><circle cx="937" cy="823.6" r="1.8" fill="#ff1010"/><circle cx="1045" cy="795.5" r="1.3" fill="#e06060"/><polygon points="959.4,503.8 1218.5,528 1319,503 1062.6,477.7" fill="rgba(123,145,126,0.30)" stroke="rgba(150,182,154,0.9)" stroke-width="0.8" /><polygon points="959.4,503.8 1218.5,528 1218.5,617.5 959.4,593" fill="rgba(123,145,126,0.326)" stroke="rgba(150,182,154,0.9)" stroke-width="0.8" /><polygon points="1218.5,528 1319,503 1319,592 1218.5,617.5" fill="rgba(123,145,126,0.205)" stroke="rgba(150,182,154,0.9)" stroke-width="0.9" /><line x1="1052" y1="485" x2="1290" y2="510" stroke="rgba(150,182,154,0.9)" stroke-width="0.7" /><line x1="1052" y1="498" x2="1240" y2="522" stroke="rgba(150,182,154,0.9)" stroke-width="0.7" /><line x1="1060" y1="566" x2="1319" y2="592" stroke="rgba(140,175,140,0.5)" stroke-width="0.7" /><line x1="1060" y1="578" x2="1265" y2="606" stroke="rgba(140,175,140,0.5)" stroke-width="0.7" /><line x1="962" y1="506" x2="1052" y2="483" stroke="rgba(120,200,120,0.6)" stroke-width="0.8" /><line x1="962" y1="592" x2="1050" y2="568" stroke="rgba(120,200,120,0.5)" stroke-width="0.8" /><circle cx="1319" cy="503" r="1.6" fill="#555"/><text x="1322" y="515" font-size="11" fill="#a9cba8" font-family="Liberation Sans, sans-serif" letter-spacing="-0.3">10.00</text><polygon points="959.4,727.8 1218.5,752 1319,727 1062.6,701.7" fill="rgba(123,145,126,0.30)" stroke="rgba(150,182,154,0.9)" stroke-width="0.8" /><polygon points="959.4,727.8 1218.5,752 1218.5,841.5 959.4,817" fill="rgba(123,145,126,0.326)" stroke="rgba(150,182,154,0.9)" stroke-width="0.8" /><polygon points="1218.5,752 1319,727 1319,816 1218.5,841.5" fill="rgba(123,145,126,0.205)" stroke="rgba(150,182,154,0.9)" stroke-width="0.9" /><line x1="1052" y1="709" x2="1290" y2="734" stroke="rgba(150,182,154,0.9)" stroke-width="0.7" /><line x1="1052" y1="722" x2="1240" y2="746" stroke="rgba(150,182,154,0.9)" stroke-width="0.7" /><line x1="1060" y1="790" x2="1319" y2="816" stroke="rgba(140,175,140,0.5)" stroke-width="0.7" /><line x1="1060" y1="802" x2="1265" y2="830" stroke="rgba(140,175,140,0.5)" stroke-width="0.7" /><line x1="962" y1="730" x2="1052" y2="707" stroke="rgba(120,200,120,0.6)" stroke-width="0.8" /><line x1="962" y1="816" x2="1050" y2="792" stroke="rgba(120,200,120,0.5)" stroke-width="0.8" /><circle cx="1319" cy="727" r="1.6" fill="#555"/><text x="1322" y="739" font-size="11" fill="#a9cba8" font-family="Liberation Sans, sans-serif" letter-spacing="-0.3">10.00</text><circle cx="277.5" cy="331" r="1.7" fill="#ff1010"/><circle cx="337" cy="514" r="1.7" fill="#ff1010"/><circle cx="575.2" cy="537.8" r="1.7" fill="#ff1010"/><circle cx="701.8" cy="505.2" r="1.7" fill="#ff1010"/><circle cx="882" cy="458.8" r="1.7" fill="#ff1010"/><circle cx="1080.3" cy="407.6" r="1.7" fill="#ff1010"/><circle cx="575.2" cy="761" r="1.7" fill="#ff1010"/><circle cx="701.8" cy="728.6" r="1.7" fill="#ff1010"/><circle cx="882" cy="682.3" r="1.7" fill="#ff1010"/><circle cx="1080.3" cy="631" r="1.7" fill="#ff1010"/><circle cx="882" cy="905.3" r="1.7" fill="#ff1010"/><circle cx="1080.3" cy="854.5" r="1.7" fill="#ff1010"/><path d="M1010 878H1016M1013 878L1014.5 872L1016.5 871.5" fill="none" stroke="#4cd850" stroke-width="0.8"/><path d="M973.5 887.7H979.5M976.5 887.7L978 881.7L980 881.2" fill="none" stroke="#4cd850" stroke-width="0.8"/><path d="M936.7 897H942.7M939.7 897L941.2 891L943.2 890.5" fill="none" stroke="#4cd850" stroke-width="0.8"/><path d="M899 906H905M902 906L903.5 900L905.5 899.5" fill="none" stroke="#4cd850" stroke-width="0.8"/><path d="M864 915.7H870M867 915.7L868.5 909.7L870.5 909.2" fill="none" stroke="#4cd850" stroke-width="0.8"/><path d="M826.5 924.5H832.5M829.5 924.5L831 918.5L833 918" fill="none" stroke="#4cd850" stroke-width="0.8"/><path d="M812.7 903.8v3h4M818.7 908.8q3 -5 6 -1l3 1M820.7 909.8h6" fill="none" stroke="#35d23a" stroke-width="1"/><path d="M777.7 912v3h4M783.7 917q3 -5 6 -1l3 1M785.7 918h6" fill="none" stroke="#35d23a" stroke-width="1"/><path d="M737 921v3h4M743 926q3 -5 6 -1l3 1M745 927h6" fill="none" stroke="#35d23a" stroke-width="1"/><rect x="437.5" y="649" width="16.5" height="31" fill="#fafafa"/><text transform="translate(441.5,654) rotate(90)" font-size="9" fill="#dcdcdc" font-family="Liberation Sans, sans-serif">7.50</text></g></svg>
<div class="t " style="left:282px;top:112px;letter-spacing:-0.15px">LC1 - Self Weight</div>
<div class="t " style="left:282px;top:129px;;letter-spacing:0.14px">Loads [kN/m<sup>2</sup>]</div>
<svg style="left:0;top:0" width="1600" height="1200" viewBox="0 0 1600 1200"><polygon points="1483,142.5 1542.5,148.3 1542.5,216 1483,211" fill="#dddddd" stroke="#4a4a4a" stroke-width="1.1" stroke-linejoin="round"/><polygon points="1542.5,148.3 1578,139.2 1578,206.7 1542.5,216" fill="#cccccc" stroke="#4a4a4a" stroke-width="1.1" stroke-linejoin="round"/><polygon points="1483,142.5 1519,133.3 1578,139.2 1542.5,148.3" fill="#b9b9b9" stroke="#3a3a3a" stroke-width="1.2" stroke-linejoin="round"/><line x1="1497.88" y1="143.95" x2="1497.88" y2="212.25" stroke="#1d1d1d" stroke-width="1.5" /><line x1="1483" y1="160.995" x2="1542.5" y2="166.579" stroke="#1d1d1d" stroke-width="1.5" /><line x1="1551.38" y1="146.025" x2="1551.38" y2="213.675" stroke="#1d1d1d" stroke-width="1.5" /><line x1="1542.5" y1="166.579" x2="1578" y2="157.425" stroke="#1d1d1d" stroke-width="1.5" /><line x1="1497.88" y1="143.95" x2="1533.75" y2="134.775" stroke="#1d1d1d" stroke-width="1.3" /><line x1="1492" y1="140.2" x2="1551.38" y2="146.025" stroke="#1d1d1d" stroke-width="1.3" /><line x1="1527.62" y1="146.85" x2="1527.62" y2="214.75" stroke="#1d1d1d" stroke-width="1.5" /><line x1="1483" y1="193.875" x2="1542.5" y2="199.075" stroke="#1d1d1d" stroke-width="1.5" /><line x1="1569.12" y1="141.475" x2="1569.12" y2="209.025" stroke="#1d1d1d" stroke-width="1.5" /><line x1="1542.5" y1="199.075" x2="1578" y2="189.825" stroke="#1d1d1d" stroke-width="1.5" /><line x1="1527.62" y1="146.85" x2="1563.25" y2="137.725" stroke="#1d1d1d" stroke-width="1.3" /><line x1="1510" y1="135.6" x2="1569.12" y2="141.475" stroke="#1d1d1d" stroke-width="1.3" /><polygon points="1506.84,141.656 1536.53,144.569 1554.34,140.006 1524.78,137.069" fill="#a9adbd" stroke="#1d1d1d" stroke-width="1.2" /><text x="1514" y="186" font-size="13" font-weight="bold" fill="#7fe27f" text-anchor="middle" font-family="Liberation Sans, sans-serif" letter-spacing="-0.5">-Y</text><text x="1560" y="184" font-size="12" font-weight="bold" fill="#efa3a3" text-anchor="middle" font-family="Liberation Sans, sans-serif" letter-spacing="-0.8" transform="translate(1560 0) scale(0.75 1) translate(-1560 0)">-X</text></svg>
<div class="a" style="left:277px;top:928px;width:1321px;height:21px;background:#dae5f3;"></div>
<div class="t b" style="left:283px;top:931px;color:#2b2b2b;letter-spacing:-0.08px">Materials</div>
<svg style="left:1559px;top:932px" width="12" height="12" viewBox="0 0 12 12"><rect x="4.5" y="1.5" width="6" height="5" fill="none" stroke="#333" stroke-width="1.2"/><rect x="1.5" y="4.5" width="6" height="5" fill="#dae5f3" stroke="#333" stroke-width="1.2"/></svg>
<svg style="left:1580px;top:932px" width="12" height="12" viewBox="0 0 12 12"><path d="M2.5 2.5L9.5 9.5M9.5 2.5L2.5 9.5" stroke="#222" stroke-width="1.7"/></svg>
<div class="a" style="left:277px;top:949px;width:1321px;height:22px;background:#f7f7f7;"></div>
<div class="t " style="left:285px;top:953px;">Go To</div>
<div class="t " style="left:331px;top:953px;">Edit</div>
<div class="t " style="left:367px;top:953px;">Selection</div>
<div class="t " style="left:430px;top:953px;">View</div>
<div class="t " style="left:471px;top:953px;">Settings</div>
<div class="a" style="left:277px;top:970px;width:1321px;height:1px;background:#e4e4e4;"></div>
<div class="a" style="left:277px;top:971px;width:1321px;height:25px;background:#f7f7f7;"></div>
<div class="a" style="left:280px;top:973px;width:201px;height:21px;background:#e8e8f4;"></div>
<div class="t " style="left:303px;top:975px;">Structure</div>
<svg style="left:465px;top:979px" width="10" height="8" viewBox="0 0 10 8"><path d="M1 2L5 6L9 2" fill="none" stroke="#444" stroke-width="1.1"/></svg>
<div class="a" style="left:481px;top:973px;width:16px;height:21px;background:#d4d4d4;"></div>
<svg style="left:485px;top:979px" width="8" height="8" viewBox="0 0 8 8"><path d="M6 0.5V7.5L2 4Z" fill="#3a3a3a"/></svg>
<div class="a" style="left:497px;top:973px;width:16px;height:21px;background:#e8e8f4;"></div>
<svg style="left:501px;top:979px" width="8" height="8" viewBox="0 0 8 8"><path d="M2 0.5V7.5L6 4Z" fill="#111"/></svg>
<div class="sep" style="left:518px;top:974px;height:19px;background:#d0d0d0"></div>
<div class="a" style="left:522px;top:973px;width:273px;height:21px;background:#e8e8f4;"></div>
<div class="t " style="left:546px;top:975px;">Basic Objects</div>
<svg style="left:778px;top:979px" width="10" height="8" viewBox="0 0 10 8"><path d="M1 2L5 6L9 2" fill="none" stroke="#444" stroke-width="1.1"/></svg>
<div class="a" style="left:795px;top:973px;width:16px;height:21px;background:#d4d4d4;"></div>
<svg style="left:799px;top:979px" width="8" height="8" viewBox="0 0 8 8"><path d="M6 0.5V7.5L2 4Z" fill="#3a3a3a"/></svg>
<div class="a" style="left:811px;top:973px;width:16px;height:21px;background:#e8e8f4;"></div>
<svg style="left:815px;top:979px" width="8" height="8" viewBox="0 0 8 8"><path d="M2 0.5V7.5L6 4Z" fill="#111"/></svg>
<div class="a" style="left:277px;top:996px;width:1321px;height:157px;background:#f3f3f3;"></div>
<div class="a" style="left:278px;top:997px;width:1302px;height:139px;background:#ffffff;"></div>
<div class="a" style="left:278px;top:997px;width:1302px;height:9px;background:#e1e1e1;"></div>
<div class="a" style="left:278px;top:1006px;width:1302px;height:34px;background:#f0f0f0;"></div>
<div class="a" style="left:278px;top:1006px;width:59px;height:34px;background:#dfdfdf;"></div>
<div class="a" style="left:1088px;top:997px;width:99px;height:9px;background:#0078d7;"></div>
<div class="a" style="left:278px;top:1040px;width:59px;height:96px;background:#c8c8c8;"></div>
<div class="a" style="left:888px;top:1040px;width:99px;height:32px;background:#f7f7f0;"></div>
<div class="a" style="left:988px;top:1040px;width:99px;height:32px;background:#f7f7f0;"></div>
<div class="a" style="left:1288px;top:1040px;width:99px;height:32px;background:#f7f7f0;"></div>
<div class="a" style="left:1573px;top:1040px;width:7px;height:32px;background:#f7f7f0;"></div>
<div class="a" style="left:1088px;top:1040px;width:99px;height:96px;background:#0078d7;"></div>
<div class="sep" style="left:337px;top:997px;height:139px;background:#d9d9d9"></div>
<div class="sep" style="left:587px;top:997px;height:139px;background:#d9d9d9"></div>
<div class="sep" style="left:687px;top:997px;height:139px;background:#d9d9d9"></div>
<div class="sep" style="left:887px;top:997px;height:139px;background:#d9d9d9"></div>
<div class="sep" style="left:987px;top:997px;height:139px;background:#d9d9d9"></div>
<div class="sep" style="left:1087px;top:997px;height:139px;background:#d9d9d9"></div>
<div class="sep" style="left:1187px;top:997px;height:139px;background:#d9d9d9"></div>
<div class="sep" style="left:1287px;top:997px;height:139px;background:#d9d9d9"></div>
<div class="sep" style="left:1387px;top:997px;height:139px;background:#d9d9d9"></div>
<div class="sep" style="left:1487px;top:997px;height:139px;background:#d9d9d9"></div>
<div class="sep" style="left:1573px;top:997px;height:139px;background:#d9d9d9"></div>
<div class="a" style="left:278px;top:1005px;width:1302px;height:1px;background:#d4d4d4;"></div>
<div class="a" style="left:278px;top:1039px;width:1302px;height:1px;background:#dcdcdc;"></div>
<div class="a" style="left:278px;top:1039px;width:59px;height:1px;background:#e6e6e6;"></div>
<div class="a" style="left:278px;top:1055px;width:1302px;height:1px;background:#dcdcdc;"></div>
<div class="a" style="left:278px;top:1055px;width:59px;height:1px;background:#e6e6e6;"></div>
<div class="a" style="left:278px;top:1071px;width:1302px;height:1px;background:#dcdcdc;"></div>
<div class="a" style="left:278px;top:1071px;width:59px;height:1px;background:#e6e6e6;"></div>
<div class="a" style="left:278px;top:1087px;width:1302px;height:1px;background:#dcdcdc;"></div>
<div class="a" style="left:278px;top:1087px;width:59px;height:1px;background:#e6e6e6;"></div>
<div class="a" style="left:278px;top:1103px;width:1302px;height:1px;background:#dcdcdc;"></div>
<div class="a" style="left:278px;top:1103px;width:59px;height:1px;background:#e6e6e6;"></div>
<div class="a" style="left:278px;top:1119px;width:1302px;height:1px;background:#dcdcdc;"></div>
<div class="a" style="left:278px;top:1119px;width:59px;height:1px;background:#e6e6e6;"></div>
<div class="a" style="left:278px;top:1135px;width:1302px;height:1px;background:#dcdcdc;"></div>
<div class="a" style="left:1088px;top:1055px;width:99px;height:1px;background:#3d93de;"></div>
<div class="a" style="left:1088px;top:1071px;width:99px;height:1px;background:#2a89dc;"></div>
<div class="a" style="left:1088px;top:1087px;width:99px;height:1px;background:#2a89dc;"></div>
<div class="a" style="left:1088px;top:1103px;width:99px;height:1px;background:#2a89dc;"></div>
<div class="a" style="left:1088px;top:1119px;width:99px;height:1px;background:#2a89dc;"></div>
<div class="a" style="left:1088px;top:1040px;width:99px;height:15px;background:transparent;border:1px dotted #ffd9a8"></div>
<div class="hd" style="left:278px;width:59px;top:1011px">Material</div>
<div class="hd" style="left:278px;width:59px;top:1024px">No.</div>
<div class="hd" style="left:337px;width:250px;top:1024px">Material Name</div>
<div class="hd" style="left:587px;width:100px;top:1011px">Material</div>
<div class="hd" style="left:587px;width:100px;top:1024px">Type</div>
<div class="hd" style="left:687px;width:200px;top:1024px">Material Model</div>
<div class="hd" style="left:887px;width:100px;top:1008px">Modulus of Elast.</div>
<div class="hd" style="left:887px;width:100px;top:1024px">E [N/mm<sup>2</sup>]</div>
<div class="hd" style="left:987px;width:100px;top:1008px">Shear Modulus</div>
<div class="hd" style="left:987px;width:100px;top:1024px">G [N/mm<sup>2</sup>]</div>
<div class="hd" style="left:1087px;width:100px;top:1008px">Poisson's Ratio</div>
<div class="hd" style="left:1087px;width:100px;top:1024px">&nu; [--]</div>
<div class="hd" style="left:1187px;width:100px;top:1008px">Specific Weight</div>
<div class="hd" style="left:1187px;width:100px;top:1024px">&gamma; [kN/m<sup>3</sup>]</div>
<div class="hd" style="left:1287px;width:100px;top:1008px">Mass Density</div>
<div class="hd" style="left:1287px;width:100px;top:1024px">&rho; [kg/m<sup>3</sup>]</div>
<div class="hd" style="left:1387px;width:100px;top:1008px">Coeff. of Th. Exp.</div>
<div class="hd" style="left:1387px;width:100px;top:1024px">&alpha; [1/&deg;C]</div>
<div class="hd" style="left:1487px;width:86px;top:1024px">Options</div>
<div class="hd" style="left:278px;width:59px;top:1039.5px">1</div>
<div class="hd" style="left:278px;width:59px;top:1055.5px">2</div>
<div class="hd" style="left:278px;width:59px;top:1071.5px">3</div>
<div class="hd" style="left:278px;width:59px;top:1087.5px">4</div>
<div class="hd" style="left:278px;width:59px;top:1103.5px">5</div>
<div class="hd" style="left:278px;width:59px;top:1119.5px">6</div>
<div class="a" style="left:342px;top:1042px;width:10px;height:10px;background:#ccffff;"></div>
<div class="t " style="left:358px;top:1040px;">C30/37</div>
<div class="a" style="left:342px;top:1058px;width:10px;height:10px;background:#f3b90f;"></div>
<div class="t " style="left:358px;top:1056px;">B500S(A)</div>
<div class="a" style="left:592px;top:1042px;width:10px;height:10px;background:#f3b90f;"></div>
<div class="t " style="left:608px;top:1040px;">Concrete</div>
<div class="a" style="left:592px;top:1058px;width:10px;height:10px;background:#8ac2c2;"></div>
<div class="t " style="left:608px;top:1056px;">Reinforcing ...</div>
<div class="a" style="left:692px;top:1042px;width:10px;height:10px;background:#ccffff;"></div>
<div class="t " style="left:708px;top:1040px;">Isotropic | Linear Elastic</div>
<div class="a" style="left:692px;top:1058px;width:10px;height:10px;background:#ccffff;"></div>
<div class="t " style="left:708px;top:1056px;">Isotropic | Linear Elastic</div>
<div class="t" style="right:617px;top:1040px;color:#000">33000.0</div>
<div class="t" style="right:617px;top:1056px;color:#000">200000.0</div>
<div class="t" style="right:517px;top:1040px;color:#000">13750.0</div>
<div class="t" style="right:517px;top:1056px;color:#000">76923.1</div>
<div class="t" style="right:417px;top:1040px;color:#fff">0.200</div>
<div class="t" style="right:417px;top:1056px;color:#fff">0.300</div>
<div class="t" style="right:317px;top:1040px;color:#000">25.00</div>
<div class="t" style="right:317px;top:1056px;color:#000">78.50</div>
<div class="t" style="right:217px;top:1040px;color:#000">2500.00</div>
<div class="t" style="right:217px;top:1056px;color:#000">7850.00</div>
<div class="t" style="right:117px;top:1040px;color:#000">0.000010</div>
<div class="t" style="right:117px;top:1056px;color:#000">0.000010</div>
<svg style="left:1492px;top:1043px" width="10" height="10" viewBox="0 0 10 10"><circle cx="5" cy="5" r="2.6" fill="none" stroke="#777" stroke-width="2.2" stroke-dasharray="1.4 0.9"/><circle cx="5" cy="5" r="2.2" fill="none" stroke="#777" stroke-width="1.2"/></svg>
<div class="a" style="left:1583px;top:997px;width:16px;height:139px;background:#f0f0f0;"></div>
<div class="a" style="left:1583px;top:1014px;width:16px;height:70px;background:#cdcdcd;"></div>
<svg style="left:1585px;top:1002px" width="12" height="10" viewBox="0 0 12 10"><path d="M2 7L6 3L10 7" fill="none" stroke="#505050" stroke-width="1.6"/></svg>
<svg style="left:1585px;top:1122px" width="12" height="10" viewBox="0 0 12 10"><path d="M2 3L6 7L10 3" fill="none" stroke="#505050" stroke-width="1.6"/></svg>
<div class="a" style="left:278px;top:1136px;width:1302px;height:17px;background:#f0f0f0;"></div>
<div class="a" style="left:295px;top:1137px;width:1153px;height:15px;background:#cdcdcd;"></div>
<svg style="left:282px;top:1138px" width="10" height="12" viewBox="0 0 10 12"><path d="M7 2L3 6L7 10" fill="none" stroke="#505050" stroke-width="1.6"/></svg>
<svg style="left:1568px;top:1138px" width="10" height="12" viewBox="0 0 10 12"><path d="M3 2L7 6L3 10" fill="none" stroke="#505050" stroke-width="1.6"/></svg>
<div class="a" style="left:277px;top:1153px;width:1321px;height:23px;background:#f7f7f7;"></div>
<div class="a" style="left:277px;top:1152px;width:1321px;height:1px;background:#d9d9d9;"></div>
<svg style="left:281px;top:1159px" width="10" height="10" viewBox="0 0 10 10"><path d="M2 1V9" stroke="#9a9a9a" stroke-width="1.4"/><path d="M9 1V9L4 5Z" fill="#9a9a9a"/></svg>
<svg style="left:298px;top:1159px" width="10" height="10" viewBox="0 0 10 10"><path d="M7.5 1V9L2.5 5Z" fill="#9a9a9a"/></svg>
<div class="t " style="left:321px;top:1157px;">1 of 13</div>
<svg style="left:371px;top:1159px" width="10" height="10" viewBox="0 0 10 10"><path d="M2.5 1V9L7.5 5Z" fill="#333"/></svg>
<svg style="left:388px;top:1159px" width="10" height="10" viewBox="0 0 10 10"><path d="M8 1V9" stroke="#333" stroke-width="1.4"/><path d="M1 1V9L6 5Z" fill="#333"/></svg>
<div class="tab" style="left:402px;width:65px;background:#fff;top:1152px;height:24px;line-height:27px">Materials</div>
<div class="tab" style="left:466px;width:61px">Sections</div>
<div class="tab" style="left:526px;width:78px">Thicknesses</div>
<div class="tab" style="left:603px;width:61px">Nodes</div>
<div class="tab" style="left:663px;width:62px">Lines</div>
<div class="tab" style="left:724px;width:65px">Members</div>
<div class="tab" style="left:788px;width:62px">Surfaces</div>
<div class="tab" style="left:849px;width:68px">Openings</div>
<div class="tab" style="left:916px;width:62px">Solids</div>
<div class="tab" style="left:977px;width:62px">Line Sets</div>
<div class="tab" style="left:1038px;width:82px">Member Sets</div>
<div class="tab" style="left:1119px;width:78px">Surface Sets</div>
<div class="tab" style="left:1196px;width:69px">Solid Sets</div>
<svg style="left:5px;top:56px" width="2" height="20" viewBox="0 0 2 20"><rect x="0" y="0" width="2" height="2" fill="#bdbdbd"/><rect x="0" y="4" width="2" height="2" fill="#bdbdbd"/><rect x="0" y="8" width="2" height="2" fill="#bdbdbd"/><rect x="0" y="12" width="2" height="2" fill="#bdbdbd"/><rect x="0" y="16" width="2" height="2" fill="#bdbdbd"/></svg>
<div class="sel" style="left:321px;top:53px;width:25px;height:23px"></div>
<div class="sel" style="left:347px;top:53px;width:25px;height:23px"></div>
<div class="sel" style="left:1022px;top:53px;width:25px;height:23px"></div>
<div class="sel" style="left:1074px;top:53px;width:25px;height:23px"></div>
<div class="sel" style="left:1100px;top:53px;width:25px;height:23px"></div>
<svg style="left:13.5px;top:54.5px" width="20" height="20" viewBox="0 0 20 20"><path d="M6.5 3H13.5L17 6.5V18H6.5Z" fill="#fff" stroke="#5e5e5e" stroke-width="1.1"/><path d="M13.5 3V6.5H17" fill="none" stroke="#5e5e5e" stroke-width="0.9"/><path d="M3.5 11Q8 6.5 13 8.5Q15 11 13 14.5L9 16Q6 13 3.5 11Z" fill="#5f86c8" stroke="#36579a" stroke-width="0.5"/><path d="M5.5 10L11.5 13M8 8.5L13.5 11M7 13L10 8M10 15L13 9.5" stroke="#bcd2f2" stroke-width="0.6"/><polygon points="5.0,0.6 5.9,3.4 8.8,2.8 6.8,5.0 8.8,7.2 5.9,6.6 5.0,9.4 4.1,6.6 1.2,7.2 3.2,5.0 1.2,2.8 4.1,3.4" fill="#fbf31a" stroke="#c9bc10" stroke-width="0.5"/></svg>
<svg style="left:39px;top:54.5px" width="20" height="20" viewBox="0 0 20 20"><path d="M2.5 7.5H8L9.5 9H16.5V17.5H2.5Z" fill="#efe19a" stroke="#b7a341" stroke-width="0.9"/><path d="M1.5 10H15L16.5 17.5H2.5Z" fill="#f7eeb6" stroke="#b7a341" stroke-width="0.9"/><path d="M13 10V5" stroke="#1d9238" stroke-width="2.4"/><path d="M9.6 6L13 1.5L16.4 6Z" fill="#1d9238"/></svg>
<svg style="left:64px;top:54.5px" width="20" height="20" viewBox="0 0 20 20"><path d="M4 2H9A8 8 0 0 1 9 18H4Z" fill="#00b2e3"/><path d="M12.3 7.3A3.6 3.6 0 1 0 12.3 12.7" fill="none" stroke="#fff" stroke-width="2"/></svg>
<svg style="left:90px;top:54.5px" width="20" height="20" viewBox="0 0 20 20"><path d="M2 1H6A6.5 6.5 0 0 1 12 5L8 17H2Z" fill="#00b2e3"/><path d="M9.3 6.2A2.6 2.6 0 1 0 9.3 9.8" fill="none" stroke="#fff" stroke-width="1.4"/><path d="M8 9L13 6.5L18.5 9V15L13 18.5L8 15Z" fill="#1fc1ea" stroke="#fff" stroke-width="0.5"/><path d="M8 9L13 11.8L18.5 9M13 11.8V18.5M10.5 7.8L15.8 10.5V16.8M15.8 7.8L10.5 10.5V16.8M8 12L13 15L18.5 12" fill="none" stroke="#e8fbff" stroke-width="0.6"/></svg>
<svg style="left:116.5px;top:54.5px" width="20" height="20" viewBox="0 0 20 20"><rect x="2.5" y="7.5" width="15" height="10" fill="#fff" stroke="#555" stroke-width="1"/><path d="M2.5 10.5H17.5" stroke="#555" stroke-width="0.8"/><path d="M4.5 12.5H6M7.5 12.5H16M4.5 15H6M7.5 15H16" stroke="#7c7c7c" stroke-width="1.2"/><path d="M12 3H17.5V9H14Z" fill="#5a8fd6" stroke="#2f5ea6" stroke-width="0.5"/><path d="M3.5 6.5Q5 3 9 2.5Q13 2.5 14.5 5.5Q14 8.5 10 9Q7 9.5 6 7.5Z" fill="#e6bf9e" stroke="#9b7a5c" stroke-width="0.6"/><path d="M6 6Q8 4.5 10 5M7 7.5Q9 6.5 11 7" stroke="#a98464" stroke-width="0.5" fill="none"/></svg>
<svg style="left:142.5px;top:54.5px" width="20" height="20" viewBox="0 0 20 20"><path d="M2.5 2.5H15.5L17.5 4.5V17.5H2.5Z" fill="#6a6a6a" stroke="#4a4a4a" stroke-width="0.8"/><rect x="5" y="2.5" width="10" height="7" fill="#d9d9d9"/><path d="M6 4.2H14M6 6H14M6 7.8H14" stroke="#8b8b8b" stroke-width="0.8"/><rect x="6" y="12" width="8" height="5.5" fill="#4a4a4a"/><rect x="8" y="13" width="2.4" height="4.5" fill="#ededed"/></svg>
<svg style="left:169px;top:54.5px" width="20" height="20" viewBox="0 0 20 20"><rect x="5.5" y="2.5" width="9" height="5" fill="#6e6e6e" stroke="#505050" stroke-width="0.7"/><path d="M2 7.5H18V14.5H15V11.5H5V14.5H2Z" fill="#6e6e6e" stroke="#505050" stroke-width="0.7"/><rect x="5.5" y="11.5" width="9" height="6" fill="#f4f4f4" stroke="#6e6e6e" stroke-width="1"/><path d="M7 13.5H13M7 15.5H13" stroke="#8e8e8e" stroke-width="0.8"/><rect x="14.5" y="8.8" width="2" height="1.2" fill="#d8d8d8"/></svg>
<svg style="left:207.5px;top:54.5px" width="20" height="20" viewBox="0 0 20 20"><path d="M4.5 2.5H12.5L16.5 6.5V18H4.5Z" fill="#fff" stroke="#5e5e5e" stroke-width="1.1"/><path d="M12.5 2.5V6.5H16.5" fill="none" stroke="#5e5e5e" stroke-width="0.9"/><path d="M7 8.5H14M7 11H14M7 13.5H14M7 15.8H14" stroke="#8a8a8a" stroke-width="1.2"/><polygon points="4.8,0.9 5.8,3.8 8.8,3.2 6.7,5.5 8.8,7.8 5.8,7.2 4.8,10.1 3.8,7.2 0.8,7.8 2.9,5.5 0.8,3.2 3.8,3.8" fill="#fbf31a" stroke="#c9bc10" stroke-width="0.5"/></svg>
<svg style="left:239px;top:54.5px" width="20" height="20" viewBox="0 0 20 20"><path d="M4.5 11Q7 6 12 7Q16 8 17 13" fill="none" stroke="#5e5e5e" stroke-width="2.2"/><path d="M2 6L3 13.2L9.5 11Z" fill="#5e5e5e"/></svg>
<svg style="left:277.5px;top:54.5px" width="20" height="20" viewBox="0 0 20 20"><path d="M15.5 11Q13 6 8 7Q4 8 3 13" fill="none" stroke="#b4b4b4" stroke-width="2.2"/><path d="M18 6L17 13.2L10.5 11Z" fill="#b4b4b4"/></svg>
<svg style="left:375px;top:54.5px" width="20" height="20" viewBox="0 0 20 20"><path d="M6 3H16V15H6Z" fill="#e3e3e3" stroke="#b5b5b5" stroke-width="0.9"/><path d="M4 5H14V18H4Z" fill="#ececec" stroke="#b0b0b0" stroke-width="0.9"/><path d="M5.5 8H12.5M5.5 10.5H12.5M5.5 13H12.5M5.5 15.5H10" stroke="#bdbdbd" stroke-width="1.1"/></svg>
<svg style="left:402.5px;top:54.5px" width="20" height="20" viewBox="0 0 20 20"><rect x="1.5" y="2.5" width="17" height="15" fill="#f2f2f2" stroke="#555" stroke-width="1.1"/><rect x="1.5" y="2.5" width="17" height="2.2" fill="#2f3fa4"/><path d="M4 7.5L7 9.5L4 11.5M8.5 7.5L11.5 9.5L8.5 11.5" fill="none" stroke="#222" stroke-width="1.2"/><path d="M12.5 13H16.5" stroke="#222" stroke-width="1.3"/></svg>
<svg style="left:426.5px;top:54.5px" width="20" height="20" viewBox="0 0 20 20"><rect x="4.5" y="2" width="10" height="9" fill="#f2f2f2" stroke="#777" stroke-width="0.9"/><rect x="4.5" y="2" width="10" height="2" fill="#2f3fa4"/><path d="M6.5 6H12.5M6.5 8H12.5" stroke="#999" stroke-width="0.8"/><rect x="1.5" y="9" width="17" height="9.5" rx="1.5" fill="#cfcfcf"/><text x="10" y="17" font-size="8.5" font-weight="bold" text-anchor="middle" fill="#2a2a2a" font-family="Liberation Sans, sans-serif" letter-spacing="-0.3">&gt;SC</text></svg>
<svg style="left:452.5px;top:54.5px" width="20" height="20" viewBox="0 0 20 20"><rect x="5" y="2.5" width="10.5" height="15.5" fill="#e4e4e4" stroke="#777" stroke-width="1.1"/><rect x="5" y="2.5" width="10.5" height="2.2" fill="#2f3fa4"/><rect x="6.5" y="6" width="7.5" height="1.6" fill="#4a6fd0"/><path d="M7 9.5H14M7 12H14" stroke="#6a6a6a" stroke-width="1.1"/><rect x="6.5" y="13.6" width="7.5" height="1.4" fill="#4a6fd0"/><path d="M7 16.4H14" stroke="#9a9a9a" stroke-width="0.9"/></svg>
<svg style="left:491.5px;top:54.5px" width="20" height="20" viewBox="0 0 20 20"><path d="M7.5 4H16L12 16H3Z" fill="#f4e663" stroke="#8e8420" stroke-width="0.8"/><circle cx="7.5" cy="4" r="1.2" fill="#ee1010"/><circle cx="16" cy="4" r="1.2" fill="#ee1010"/><circle cx="3" cy="16" r="1.2" fill="#ee1010"/><circle cx="11.5" cy="16" r="1.2" fill="#ee1010"/><path d="M5.8 2.3L9.2 5.7M9.2 2.3L5.8 5.7M14.3 2.3L17.7 5.7M17.7 2.3L14.3 5.7M1.3 14.3L4.7 17.7M4.7 14.3L1.3 17.7" stroke="#ee1010" stroke-width="0.8"/><path d="M12.5 9V18L14.6 16L16 19L17.3 18.4L15.9 15.5H18.6Z" fill="#fff" stroke="#555" stroke-width="0.7"/></svg>
<svg style="left:516.5px;top:54.5px" width="20" height="20" viewBox="0 0 20 20"><path d="M2.5 9Q3 3 10 2.5Q17 3 17 9Q16 14 10 14Q5 13.5 2.5 9Z" fill="#f4e663" stroke="#555" stroke-width="0.9"/><circle cx="2.5" cy="9" r="1.1" fill="#ee1010"/><circle cx="10" cy="2.8" r="1.1" fill="#ee1010"/><circle cx="10" cy="8.5" r="1.1" fill="#ee1010"/><path d="M0.5 9H4.5M10 1V4.8M8 8.5H12M10 6.5V10.5" stroke="#ee1010" stroke-width="0.8"/><path d="M12.5 9V18L14.6 16L16 19L17.3 18.4L15.9 15.5H18.6Z" fill="#fff" stroke="#555" stroke-width="0.7"/></svg>
<svg style="left:542.5px;top:54.5px" width="20" height="20" viewBox="0 0 20 20"><circle cx="9.5" cy="9.5" r="7.5" fill="#f4e663" stroke="#555" stroke-width="0.9"/><circle cx="9.5" cy="9.5" r="3.8" fill="#fff" stroke="#555" stroke-width="0.8"/><path d="M5 9.5H8M9.5 8V11.5M8 9.5H11.5M9.5 15V18.5M8 17H11" stroke="#ee1010" stroke-width="0.9"/><path d="M12.5 9V18L14.6 16L16 19L17.3 18.4L15.9 15.5H18.6Z" fill="#fff" stroke="#555" stroke-width="0.7"/></svg>
<svg style="left:569px;top:54.5px" width="20" height="20" viewBox="0 0 20 20"><path d="M2 7Q3 4 8 3.5L14 2.5Q17.5 3 17 8Q17 13 13 14H6Q3 13 2 7Z" fill="#f4e663" stroke="#555" stroke-width="0.9"/><path d="M12.5 9V18L14.6 16L16 19L17.3 18.4L15.9 15.5H18.6Z" fill="#fff" stroke="#555" stroke-width="0.7"/></svg>
<svg style="left:594px;top:54.5px" width="20" height="20" viewBox="0 0 20 20"><rect x="2.5" y="4" width="15" height="13" rx="1" fill="#f4e663" stroke="#3a3a3a" stroke-width="1.1"/><path d="M4.5 8.5H9.5M7 6V11M4.5 13.5H9.5" stroke="#222" stroke-width="1.3"/><path d="M11.5 8V16.5L13.5 14.8L14.8 17.6L16 17L14.7 14.3H17.2Z" fill="#fff" stroke="#555" stroke-width="0.7"/></svg>
<svg style="left:631px;top:54.5px" width="20" height="20" viewBox="0 0 20 20"><path d="M5.5 4V12.0" stroke="#6a96da" stroke-width="2.6"/><path d="M2.1 11.5L5.5 15.5L8.9 11.5Z" fill="#6a96da"/><path d="M1 17.8H18.5" stroke="#3a3a3a" stroke-width="1.6"/><rect x="9.5" y="1.5" width="9" height="6.5" fill="#fff" stroke="#6e6e6e" stroke-width="0.9"/><rect x="9.5" y="1.5" width="9" height="2" fill="#2f3fa4"/><polygon points="4.5,1.1 5.4,3.9 8.3,3.3 6.3,5.5 8.3,7.7 5.4,7.1 4.5,9.9 3.6,7.1 0.7,7.7 2.7,5.5 0.7,3.3 3.6,3.9" fill="#fbf31a" stroke="#c9bc10" stroke-width="0.5"/></svg>
<svg style="left:657.5px;top:54.5px" width="20" height="20" viewBox="0 0 20 20"><path d="M5.5 4V12.0" stroke="#6a96da" stroke-width="2.6"/><path d="M2.1 11.5L5.5 15.5L8.9 11.5Z" fill="#6a96da"/><path d="M1 17.8H18.5" stroke="#3a3a3a" stroke-width="1.6"/><rect x="9.5" y="1.5" width="9" height="6.5" fill="#fff" stroke="#6e6e6e" stroke-width="0.9"/><rect x="9.5" y="1.5" width="9" height="2" fill="#2f3fa4"/></svg>
<svg style="left:986px;top:54.5px" width="20" height="20" viewBox="0 0 20 20"><path d="M1.5 5H14L9.5 10.5V16L6.5 18V10.5Z" fill="#5d8ad2"/><path d="M6.5 13L9.5 12V16L6.5 18Z" fill="#8fb3e8"/><path d="M10.5 1.5L17.5 8.5M17.5 1.5L10.5 8.5" stroke="#e81313" stroke-width="2.4"/></svg>
<svg style="left:1051px;top:54.5px" width="20" height="20" viewBox="0 0 20 20"><text x="10" y="7" font-size="8.5" font-weight="bold" text-anchor="middle" fill="#8a8a8a" font-family="Liberation Sans, sans-serif" letter-spacing="0.35">x.xx</text><path d="M9 9Q7 13 11 18.5" fill="none" stroke="#b0b0b0" stroke-width="1.4"/><path d="M11.5 9V19" stroke="#8a8a8a" stroke-width="1.1" stroke-dasharray="1.8 1.2"/></svg>
<svg style="left:1127px;top:54.5px" width="20" height="20" viewBox="0 0 20 20"><rect x="2" y="6" width="12.5" height="12" fill="#7eaade" stroke="#3f689e" stroke-width="1"/><path d="M2 6H10.4V14H2Z" fill="#a4ccf0"/><path d="M6.2 6V18M10.4 6V18M2 10H14.5M2 14H14.5" stroke="#375c8f" stroke-width="1"/><path d="M9.5 5Q14 0.2 18.5 5Q14 9.4 9.5 5Z" fill="#ececf8" stroke="#2e2e78" stroke-width="1"/><circle cx="14" cy="4.8" r="2.3" fill="#2d2d86"/><circle cx="14" cy="4.5" r="0.9" fill="#9aa6ea"/></svg>
<svg style="left:1166px;top:54.5px" width="20" height="20" viewBox="0 0 20 20"><path d="M1 13.5L11 13L1 17.6Z" fill="#2346a8"/><path d="M10 12.4L19 11.6V8Z" fill="#e02a1e"/><path d="M1 13.2L19 12" stroke="#1a1a1a" stroke-width="1.2"/><path d="M9.5 5Q14 0.2 18.5 5Q14 9.4 9.5 5Z" fill="#ececf8" stroke="#2e2e78" stroke-width="1"/><circle cx="14" cy="4.8" r="2.3" fill="#2d2d86"/><circle cx="14" cy="4.5" r="0.9" fill="#9aa6ea"/></svg>
<svg style="left:1192px;top:54.5px" width="20" height="20" viewBox="0 0 20 20"><text x="10" y="7" font-size="8.5" font-weight="bold" text-anchor="middle" fill="#9a9a9a" font-family="Liberation Sans, sans-serif" letter-spacing="0.35">x.xx</text><path d="M1.5 17L18.5 10V17Z" fill="#b9b9b9"/><path d="M1.5 17H18.5" stroke="#9a9a9a" stroke-width="1"/></svg>
<svg style="left:1225px;top:54.5px" width="20" height="20" viewBox="0 0 20 20"><path d="M1 11.5L9 11L1 15.6Z" fill="#2346a8"/><path d="M8 10.6L13 10V8.2Z" fill="#e02a1e"/><path d="M1 11.2L13 10.2" stroke="#1a1a1a" stroke-width="1.1"/><rect x="8.5" y="1.5" width="9.5" height="7" fill="#fff" stroke="#6e6e6e" stroke-width="0.9"/><rect x="8.5" y="1.5" width="9.5" height="2" fill="#2f3fa4"/><circle cx="14.5" cy="15" r="3" fill="none" stroke="#6a8fe6" stroke-width="2.2" stroke-dasharray="1.6 1"/><circle cx="14.5" cy="15" r="2.4" fill="#fff" stroke="#6a8fe6" stroke-width="1.2"/></svg>
<svg style="left:1250px;top:54.5px" width="20" height="20" viewBox="0 0 20 20"><path d="M2 3V18M18 3V18" stroke="#111" stroke-width="1.6"/><path d="M2 7H18M2 13H18" stroke="#333" stroke-width="0.9"/><circle cx="6" cy="7" r="2" fill="#e6c93a" stroke="#8c7612" stroke-width="0.5"/><circle cx="10" cy="7" r="2" fill="#e6c93a" stroke="#8c7612" stroke-width="0.5"/><circle cx="14.5" cy="7" r="2" fill="#e6c93a" stroke="#8c7612" stroke-width="0.5"/><circle cx="5.5" cy="13" r="2" fill="#5f7fe0" stroke="#27419a" stroke-width="0.5"/><circle cx="9.5" cy="13" r="2" fill="#5f7fe0" stroke="#27419a" stroke-width="0.5"/><circle cx="14" cy="13" r="2" fill="#5f7fe0" stroke="#27419a" stroke-width="0.5"/></svg>
<svg style="left:1300px;top:54.5px" width="20" height="20" viewBox="0 0 20 20"><circle cx="7.5" cy="9" r="5" fill="none" stroke="#555" stroke-width="2"/><path d="M11 13L17 18.5" stroke="#555" stroke-width="2.4"/><path d="M9.5 1.5L17.5 9M17.5 1.5L9.5 9" stroke="#e81313" stroke-width="2.4"/></svg>
<svg style="left:1326px;top:54.5px" width="20" height="20" viewBox="0 0 20 20"><path d="M2 6.5L8 3H18V13.5L12 17.5H2Z" fill="#c4c8e4" stroke="#8c93c4" stroke-width="0.9"/><path d="M2 6.5H12V17.5M12 6.5L18 3" fill="none" stroke="#8c93c4" stroke-width="0.9"/><path d="M8 3V13.5H18M8 13.5L2 17.5" fill="none" stroke="#a6abd4" stroke-width="0.6"/></svg>
<svg style="left:1353px;top:54.5px" width="20" height="20" viewBox="0 0 20 20"><path d="M2 7.5L7 4.5H16V14L11.5 17.5H2Z" fill="#c4c8e4" stroke="#8c93c4" stroke-width="0.9"/><path d="M2 7.5H11.5V17.5M11.5 7.5L16 4.5" fill="none" stroke="#8c93c4" stroke-width="0.9"/><path d="M7 4.5V14H16M7 14L2 17.5" fill="none" stroke="#a6abd4" stroke-width="0.6"/><path d="M9 11L10 8L15.5 2L17.5 3.8L12 9.8Z" fill="#f4b321"/><path d="M15.5 2L16.5 1L18.5 2.8L17.5 3.8Z" fill="#ee9ec6"/><path d="M9 11L10 8L12 9.8Z" fill="#ead6ae"/></svg>
<svg style="left:1384px;top:54.5px" width="20" height="20" viewBox="0 0 20 20"><path d="M4 4H12" stroke="#14a24a" stroke-width="1.3"/><path d="M11 1.6L15 4L11 6.4Z" fill="#14a24a"/><path d="M4 4V13" stroke="#1b33c8" stroke-width="1.3"/><path d="M1.7 12L4 17L6.3 12Z" fill="#1b33c8"/><circle cx="4" cy="4" r="2.2" fill="#f5d31a"/><text x="13" y="17" font-size="10" font-weight="bold" text-anchor="middle" fill="#111" font-family="Liberation Sans, sans-serif" letter-spacing="-0.6">X</text></svg>
<svg style="left:1410px;top:54.5px" width="20" height="20" viewBox="0 0 20 20"><path d="M4 4H12" stroke="#d8491a" stroke-width="1.3"/><path d="M11 1.6L15 4L11 6.4Z" fill="#d8491a"/><path d="M4 4V13" stroke="#1b33c8" stroke-width="1.3"/><path d="M1.7 12L4 17L6.3 12Z" fill="#1b33c8"/><circle cx="4" cy="4" r="2.2" fill="#14a24a"/><text x="13" y="17" font-size="10" font-weight="bold" text-anchor="middle" fill="#111" font-family="Liberation Sans, sans-serif" letter-spacing="-0.6">-Y</text></svg>
<svg style="left:1436px;top:54.5px" width="20" height="20" viewBox="0 0 20 20"><path d="M4 4H12" stroke="#d8491a" stroke-width="1.3"/><path d="M11 1.6L15 4L11 6.4Z" fill="#d8491a"/><path d="M4 4V13" stroke="#14a24a" stroke-width="1.3"/><path d="M1.7 12L4 17L6.3 12Z" fill="#14a24a"/><circle cx="4" cy="4" r="2.2" fill="#f5d31a" stroke="#1b33c8" stroke-width="1"/><text x="13" y="17" font-size="10" font-weight="bold" text-anchor="middle" fill="#111" font-family="Liberation Sans, sans-serif" letter-spacing="-0.6">Z</text></svg>
<svg style="left:1462px;top:54.5px" width="20" height="20" viewBox="0 0 20 20"><path d="M16 4H8" stroke="#14a24a" stroke-width="1.3"/><path d="M9 1.6L5 4L9 6.4Z" fill="#14a24a"/><path d="M16 4V13" stroke="#1b33c8" stroke-width="1.3"/><path d="M13.7 12L16 17L18.3 12Z" fill="#1b33c8"/><circle cx="16" cy="4" r="2.2" fill="#d8491a"/><text x="6.5" y="17" font-size="10" font-weight="bold" text-anchor="middle" fill="#111" font-family="Liberation Sans, sans-serif" letter-spacing="-0.6">-X</text></svg>
<svg style="left:1501px;top:54.5px" width="20" height="20" viewBox="0 0 20 20"><rect x="2" y="2" width="8" height="7" fill="#ececec" stroke="#b5b5b5" stroke-width="0.9"/><path d="M8 9.5L14 3" stroke="#a9a9a9" stroke-width="2.6"/><path d="M11 11Q15 11 15.5 16" fill="none" stroke="#a9a9a9" stroke-width="1.6"/><path d="M4 17.5H17" stroke="#a9a9a9" stroke-width="2"/><path d="M5 13.5H11" stroke="#a9a9a9" stroke-width="1.4"/><path d="M7 9.5V12.5M5.5 11H8.5" stroke="#b5b5b5" stroke-width="0.8"/></svg>
<svg style="left:1546px;top:54.5px" width="20" height="20" viewBox="0 0 20 20"><path d="M2 5L5 3H11V8.5H17.5V15L14 18L2 15Z" fill="#4f74b8"/><path d="M2 5L5 3H11L8 5Z" fill="#a9c6ee"/><path d="M2 5H8V10.5H14V18L2 15Z" fill="#7ea6e0"/><path d="M8 10.5L11 8.5H17.5L14 10.5Z" fill="#a9c6ee"/></svg>
<svg style="left:324px;top:54.5px" width="20" height="20" viewBox="0 0 20 20"><rect x="5" y="2.5" width="10.5" height="15.5" fill="#e9e9e9" stroke="#555" stroke-width="1.1"/><rect x="5" y="2.5" width="10.5" height="2.6" fill="#2f3fa4"/><path d="M7 7.5H14M7 10H14M7 12.5H14M7 15H14" stroke="#5a5a5a" stroke-width="1.3"/></svg>
<svg style="left:350px;top:54.5px" width="20" height="20" viewBox="0 0 20 20"><rect x="2" y="3" width="16" height="14.5" fill="#dadada" stroke="#555" stroke-width="1.1"/><rect x="2" y="3" width="16" height="2.4" fill="#2f3fa4"/><path d="M2 8.5H18M2 11.5H18M2 14.5H18M6 5.5V17.5M10 5.5V17.5M14 5.5V17.5" stroke="#9a9a9a" stroke-width="0.9"/></svg>
<svg style="left:1025px;top:54.5px" width="20" height="20" viewBox="0 0 20 20"><path d="M7 8Q3.5 12 7.5 18" fill="none" stroke="#16a83e" stroke-width="1.7"/><path d="M8.3 8V19" stroke="#111" stroke-width="1.2" stroke-dasharray="1.8 1.2"/><path d="M6 11.5L8 11M6 14.5L8 14.5" stroke="#444" stroke-width="0.7"/><path d="M9.5 5Q14 0.2 18.5 5Q14 9.4 9.5 5Z" fill="#ececf8" stroke="#2e2e78" stroke-width="1"/><circle cx="14" cy="4.8" r="2.3" fill="#2d2d86"/><circle cx="14" cy="4.5" r="0.9" fill="#9aa6ea"/></svg>
<svg style="left:1076.5px;top:54.5px" width="20" height="20" viewBox="0 0 20 20"><path d="M6 6V12.5" stroke="#6a96da" stroke-width="2.6"/><path d="M2.6 12L6 16L9.4 12Z" fill="#6a96da"/><path d="M1.5 18H18.5" stroke="#3a3a3a" stroke-width="1.6"/><path d="M9.5 5Q14 0.2 18.5 5Q14 9.4 9.5 5Z" fill="#ececf8" stroke="#2e2e78" stroke-width="1"/><circle cx="14" cy="4.8" r="2.3" fill="#2d2d86"/><circle cx="14" cy="4.5" r="0.9" fill="#9aa6ea"/></svg>
<svg style="left:1102.5px;top:54.5px" width="20" height="20" viewBox="0 0 20 20"><text x="10" y="7" font-size="8.5" font-weight="bold" text-anchor="middle" fill="#111" font-family="Liberation Sans, sans-serif" letter-spacing="0.35">x.xx</text><path d="M7 8V12.5" stroke="#6a96da" stroke-width="2.6"/><path d="M3.6 12L7 16L10.4 12Z" fill="#6a96da"/><path d="M2 18H18.5" stroke="#3a3a3a" stroke-width="1.6"/></svg>
<svg style="left:193px;top:63px" width="8" height="4" viewBox="0 0 8 4"><path d="M0.5 0H7.5L4 4Z" fill="#222"/></svg>
<svg style="left:264px;top:63px" width="8" height="4" viewBox="0 0 8 4"><path d="M0.5 0H7.5L4 4Z" fill="#222"/></svg>
<svg style="left:302px;top:63px" width="8" height="4" viewBox="0 0 8 4"><path d="M0.5 0H7.5L4 4Z" fill="#8e8e8e"/></svg>
<svg style="left:1010px;top:63px" width="8" height="4" viewBox="0 0 8 4"><path d="M0.5 0H7.5L4 4Z" fill="#222"/></svg>
<svg style="left:1152px;top:63px" width="8" height="4" viewBox="0 0 8 4"><path d="M0.5 0H7.5L4 4Z" fill="#222"/></svg>
<svg style="left:1275px;top:63px" width="8" height="4" viewBox="0 0 8 4"><path d="M0.5 0H7.5L4 4Z" fill="#222"/></svg>
<svg style="left:1487px;top:63px" width="8" height="4" viewBox="0 0 8 4"><path d="M0.5 0H7.5L4 4Z" fill="#222"/></svg>
<svg style="left:1525px;top:63px" width="8" height="4" viewBox="0 0 8 4"><path d="M0.5 0H7.5L4 4Z" fill="#8e8e8e"/></svg>
<svg style="left:1570px;top:63px" width="8" height="4" viewBox="0 0 8 4"><path d="M0.5 0H7.5L4 4Z" fill="#222"/></svg>
<div class="sep" style="left:232px;top:56px;height:18px;background:#d0d0d0"></div>
<div class="sep" style="left:317px;top:56px;height:18px;background:#d0d0d0"></div>
<div class="sep" style="left:1218px;top:56px;height:18px;background:#d0d0d0"></div>
<div class="sep" style="left:1378px;top:56px;height:18px;background:#d0d0d0"></div>
<div class="sep" style="left:1540px;top:56px;height:18px;background:#d0d0d0"></div>
<div class="sep" style="left:477px;top:53px;height:26px;background:#dedede"></div>
<svg style="left:482px;top:56px" width="2" height="20" viewBox="0 0 2 20"><rect x="0" y="0" width="2" height="2" fill="#bdbdbd"/><rect x="0" y="4" width="2" height="2" fill="#bdbdbd"/><rect x="0" y="8" width="2" height="2" fill="#bdbdbd"/><rect x="0" y="12" width="2" height="2" fill="#bdbdbd"/><rect x="0" y="16" width="2" height="2" fill="#bdbdbd"/></svg>
<div class="sep" style="left:619px;top:53px;height:26px;background:#dedede"></div>
<svg style="left:623px;top:56px" width="2" height="20" viewBox="0 0 2 20"><rect x="0" y="0" width="2" height="2" fill="#bdbdbd"/><rect x="0" y="4" width="2" height="2" fill="#bdbdbd"/><rect x="0" y="8" width="2" height="2" fill="#bdbdbd"/><rect x="0" y="12" width="2" height="2" fill="#bdbdbd"/><rect x="0" y="16" width="2" height="2" fill="#bdbdbd"/></svg>
<div class="sep" style="left:1287px;top:53px;height:26px;background:#dedede"></div>
<svg style="left:1292px;top:56px" width="2" height="20" viewBox="0 0 2 20"><rect x="0" y="0" width="2" height="2" fill="#bdbdbd"/><rect x="0" y="4" width="2" height="2" fill="#bdbdbd"/><rect x="0" y="8" width="2" height="2" fill="#bdbdbd"/><rect x="0" y="12" width="2" height="2" fill="#bdbdbd"/><rect x="0" y="16" width="2" height="2" fill="#bdbdbd"/></svg>
<svg style="left:1588px;top:62.0px" width="8" height="7" viewBox="0 0 8 7"><path d="M0.8 0.8L3.3 3.5L0.8 6.2M4.3 0.8L6.8 3.5L4.3 6.2" fill="none" stroke="#555" stroke-width="1"/></svg>
<div class="a" style="left:681px;top:54px;width:270px;height:21px;background:#e8e8f4;"></div>
<div class="a" style="left:686px;top:59px;width:11px;height:11px;background:#ccffff;"></div>
<div class="a" style="left:700px;top:59px;width:11px;height:11px;background:#ccffff;"></div>
<div class="a" style="left:714px;top:58px;width:30px;height:13px;background:#000;"></div>
<div class="t" style="left:714px;width:30px;text-align:center;top:58px;color:#fff;letter-spacing:0;font-size:11.5px">G</div>
<div class="t " style="left:749px;top:58px;;letter-spacing:-0.90px">LC1</div>
<div class="a" style="left:784px;top:57px;width:1px;height:15px;background:#fbfbff;"></div>
<div class="t " style="left:791px;top:58px;letter-spacing:-0.1px">Self Weight</div>
<svg style="left:937px;top:62px" width="10" height="7" viewBox="0 0 10 7"><path d="M1 1L5 5L9 1" fill="none" stroke="#444" stroke-width="1.1"/></svg>
<div class="a" style="left:952px;top:54px;width:15px;height:21px;background:#d0d0d0;"></div>
<svg style="left:955px;top:61px" width="8" height="8" viewBox="0 0 8 8"><path d="M6 0.5V7.5L2 4Z" fill="#3a3a3a"/></svg>
<div class="a" style="left:968px;top:54px;width:15px;height:21px;background:#e8e8f4;"></div>
<svg style="left:972px;top:61px" width="8" height="8" viewBox="0 0 8 8"><path d="M2 0.5V7.5L6 4Z" fill="#111"/></svg>
<svg style="left:5px;top:84px" width="2" height="20" viewBox="0 0 2 20"><rect x="0" y="0" width="2" height="2" fill="#bdbdbd"/><rect x="0" y="4" width="2" height="2" fill="#bdbdbd"/><rect x="0" y="8" width="2" height="2" fill="#bdbdbd"/><rect x="0" y="12" width="2" height="2" fill="#bdbdbd"/><rect x="0" y="16" width="2" height="2" fill="#bdbdbd"/></svg>
<div class="sel" style="left:641px;top:81px;width:37px;height:23px"></div>
<div class="a" style="left:666px;top:81px;width:12px;height:23px;background:#c4e0f7;border:1px solid #99c9ef;border-left:none"></div>
<div class="sel" style="left:1321px;top:81px;width:25px;height:23px"></div>
<svg style="left:10px;top:82.5px" width="20" height="20" viewBox="0 0 20 20"><polygon points="8.0,2.2 9.0,5.3 12.2,4.6 10.0,7.0 12.2,9.4 9.0,8.7 8.0,11.8 7.0,8.7 3.8,9.4 6.0,7.0 3.8,4.6 7.0,5.3" fill="#fbf31a" stroke="#c9bc10" stroke-width="0.5"/><circle cx="11.5" cy="12.5" r="1.7" fill="#ee1010"/></svg>
<svg style="left:50px;top:82.5px" width="20" height="20" viewBox="0 0 20 20"><path d="M5 17L17 4" stroke="#111" stroke-width="1.3"/><circle cx="5" cy="17" r="1.6" fill="#ee1010"/><circle cx="17" cy="4" r="1.6" fill="#ee1010"/><polygon points="7.0,1.7 8.0,4.8 11.2,4.1 9.0,6.5 11.2,8.9 8.0,8.2 7.0,11.3 6.0,8.2 2.8,8.9 5.0,6.5 2.8,4.1 6.0,4.8" fill="#fbf31a" stroke="#c9bc10" stroke-width="0.5"/></svg>
<svg style="left:77px;top:82.5px" width="20" height="20" viewBox="0 0 20 20"><path d="M4.5 17.5L16.5 4" stroke="#5f7fb8" stroke-width="3.2"/><path d="M4.5 17.5L16.5 4" stroke="#c4d6f2" stroke-width="1.4"/><circle cx="4.5" cy="17.5" r="1.6" fill="#ee1010"/><circle cx="16.5" cy="4" r="1.6" fill="#ee1010"/><path d="M14 13.5H19M14 19.0H19M16.5 13.5V19.0" stroke="#6f8fc8" stroke-width="1.4"/><polygon points="6.5,1.7 7.5,4.8 10.7,4.1 8.5,6.5 10.7,8.9 7.5,8.2 6.5,11.3 5.5,8.2 2.3,8.9 4.5,6.5 2.3,4.1 5.5,4.8" fill="#fbf31a" stroke="#c9bc10" stroke-width="0.5"/></svg>
<svg style="left:115px;top:82.5px" width="20" height="20" viewBox="0 0 20 20"><path d="M9 3.5H17.5V13L11 18.5" fill="none" stroke="#111" stroke-width="1.3"/><path d="M9 3.5V10" stroke="#111" stroke-width="1.3"/><polygon points="6.0,2.4 7.0,5.3 10.0,4.7 7.9,7.0 10.0,9.3 7.0,8.7 6.0,11.6 5.0,8.7 2.0,9.3 4.1,7.0 2.0,4.7 5.0,5.3" fill="#fbf31a" stroke="#c9bc10" stroke-width="0.5"/><circle cx="9" cy="3.5" r="1.5" fill="#ee1010"/><circle cx="17.5" cy="3.5" r="1.5" fill="#ee1010"/><circle cx="9" cy="10" r="1.5" fill="#ee1010"/><circle cx="17.5" cy="13" r="1.5" fill="#ee1010"/><circle cx="11" cy="18.5" r="1.5" fill="#ee1010"/></svg>
<svg style="left:158px;top:82.5px" width="20" height="20" viewBox="0 0 20 20"><path d="M6.9 18.4L11.5 10.35L16.1 18.4Z" fill="#27a84a" stroke="#0f7a2c" stroke-width="0.5"/><circle cx="11.5" cy="9.775" r="2.76" fill="#178a38"/><path d="M5.75 18.975H17.25" stroke="#4fc86e" stroke-width="1.2"/><circle cx="11.5" cy="4.5" r="1.6" fill="#ee1010"/><polygon points="8.0,1.4 9.0,4.3 12.0,3.7 9.9,6.0 12.0,8.3 9.0,7.7 8.0,10.6 7.0,7.7 4.0,8.3 6.1,6.0 4.0,3.7 7.0,4.3" fill="#fbf31a" stroke="#c9bc10" stroke-width="0.5"/></svg>
<svg style="left:185px;top:82.5px" width="20" height="20" viewBox="0 0 20 20"><path d="M4 10H18" stroke="#111" stroke-width="1.4"/><path d="M4.5 18.0L7.5 12.75L10.5 18.0Z" fill="#27a84a" stroke="#0f7a2c" stroke-width="0.5"/><circle cx="7.5" cy="12.375" r="1.7999999999999998" fill="#178a38"/><path d="M3.75 18.375H11.25" stroke="#4fc86e" stroke-width="1.2"/><path d="M12.0 18.0L15 12.75L18.0 18.0Z" fill="#27a84a" stroke="#0f7a2c" stroke-width="0.5"/><circle cx="15" cy="12.375" r="1.7999999999999998" fill="#178a38"/><path d="M11.25 18.375H18.75" stroke="#4fc86e" stroke-width="1.2"/><circle cx="4" cy="10" r="1.5" fill="#ee1010"/><circle cx="18" cy="10" r="1.5" fill="#ee1010"/><polygon points="8.5,0.9 9.5,3.8 12.5,3.2 10.4,5.5 12.5,7.8 9.5,7.2 8.5,10.1 7.5,7.2 4.5,7.8 6.6,5.5 4.5,3.2 7.5,3.8" fill="#fbf31a" stroke="#c9bc10" stroke-width="0.5"/></svg>
<svg style="left:212px;top:82.5px" width="20" height="20" viewBox="0 0 20 20"><path d="M2.5 11L7 9H19L14.5 12.5H2.5Z" fill="#7ea6de" stroke="#3c68ad" stroke-width="0.6"/><path d="M5 13V17M9 13V17M13 13V17M3.5 17.5H7M7.5 17.5H11M11.5 17.5H15M4 15H14" stroke="#27a84a" stroke-width="1.1"/><polygon points="7.5,0.7 8.5,3.8 11.7,3.1 9.5,5.5 11.7,7.9 8.5,7.2 7.5,10.3 6.5,7.2 3.3,7.9 5.5,5.5 3.3,3.1 6.5,3.8" fill="#fbf31a" stroke="#c9bc10" stroke-width="0.5"/></svg>
<svg style="left:244px;top:82.5px" width="20" height="20" viewBox="0 0 20 20"><path d="M3 12V19M17 12V19" stroke="#111" stroke-width="1.5"/><path d="M3 15.5H17" stroke="#111" stroke-width="1"/><path d="M3.5 15.5L6 14.2V16.8ZM16.5 15.5L14 14.2V16.8Z" fill="#111"/><text x="12" y="12" font-size="9" font-weight="bold" text-anchor="middle" fill="#111" font-family="Liberation Sans, sans-serif">x</text><polygon points="6.5,1.7 7.5,4.8 10.7,4.1 8.5,6.5 10.7,8.9 7.5,8.2 6.5,11.3 5.5,8.2 2.3,8.9 4.5,6.5 2.3,4.1 5.5,4.8" fill="#fbf31a" stroke="#c9bc10" stroke-width="0.5"/></svg>
<svg style="left:282px;top:82.5px" width="20" height="20" viewBox="0 0 20 20"><path d="M7 14.5H18" stroke="#111" stroke-width="1.3"/><path d="M7 14.5L2.5 19" stroke="#111" stroke-width="1.1"/><path d="M2 19.5V15.8M2 19.5H5.8" stroke="#111" stroke-width="1.1"/><text x="13" y="12" font-size="9" font-weight="bold" text-anchor="middle" fill="#111" font-family="Liberation Sans, sans-serif" letter-spacing="0.2">xx</text><polygon points="7.0,1.2 8.0,4.3 11.2,3.6 9.0,6.0 11.2,8.4 8.0,7.7 7.0,10.8 6.0,7.7 2.8,8.4 5.0,6.0 2.8,3.6 6.0,4.3" fill="#fbf31a" stroke="#c9bc10" stroke-width="0.5"/></svg>
<svg style="left:317px;top:82.5px" width="20" height="20" viewBox="0 0 20 20"><rect x="4.5" y="9" width="13" height="8.5" fill="#7ea6de" stroke="#3c68ad" stroke-width="0.7"/><polygon points="5.5,1.2 6.5,4.3 9.7,3.6 7.5,6.0 9.7,8.4 6.5,7.7 5.5,10.8 4.5,7.7 1.3,8.4 3.5,6.0 1.3,3.6 4.5,4.3" fill="#fbf31a" stroke="#c9bc10" stroke-width="0.5"/><circle cx="4.5" cy="9.5" r="1.5" fill="#ee1010"/><circle cx="17" cy="17.5" r="1.5" fill="#ee1010"/></svg>
<svg style="left:353px;top:82.5px" width="20" height="20" viewBox="0 0 20 20"><path d="M4 9Q10 3 16 8Q18 12 15 17Q12 14 9 15L7 18Q5 13 4 9Z" fill="#7ea6de" stroke="#3c68ad" stroke-width="0.7"/><polygon points="8.0,0.6 8.9,3.4 11.8,2.8 9.8,5.0 11.8,7.2 8.9,6.6 8.0,9.4 7.1,6.6 4.2,7.2 6.2,5.0 4.2,2.8 7.1,3.4" fill="#fbf31a" stroke="#c9bc10" stroke-width="0.5"/><circle cx="5" cy="4.5" r="1.5" fill="#ee1010"/><circle cx="6.5" cy="11" r="1.5" fill="#ee1010"/><circle cx="10.5" cy="14.5" r="1.5" fill="#ee1010"/><circle cx="17.5" cy="12.5" r="1.5" fill="#ee1010"/></svg>
<svg style="left:393px;top:82.5px" width="20" height="20" viewBox="0 0 20 20"><rect x="4" y="5.5" width="12.5" height="12.5" fill="none" stroke="#5a84c6" stroke-width="2.6"/><rect x="4" y="5.5" width="12.5" height="12.5" fill="none" stroke="#a9c6ee" stroke-width="0.8"/><polygon points="4.0,0.8 4.9,3.5 7.6,2.9 5.8,5.0 7.6,7.1 4.9,6.5 4.0,9.2 3.1,6.5 0.4,7.1 2.2,5.0 0.4,2.9 3.1,3.5" fill="#fbf31a" stroke="#c9bc10" stroke-width="0.5"/><circle cx="4.5" cy="6" r="1.5" fill="#ee1010"/><circle cx="16.5" cy="6" r="1.5" fill="#ee1010"/><circle cx="4.5" cy="18" r="1.5" fill="#ee1010"/><circle cx="16.5" cy="18" r="1.5" fill="#ee1010"/></svg>
<svg style="left:430px;top:82.5px" width="20" height="20" viewBox="0 0 20 20"><path d="M2.5 8L7 6V15L2.5 16.5Z" fill="#8fb3e6" stroke="#3c68ad" stroke-width="0.6"/><path d="M7 6L17 2V13L10.5 18.5L7 15Z" fill="#6e97d4" stroke="#3c68ad" stroke-width="0.6"/><path d="M2.5 16.5L7 15L10.5 18.5Z" fill="#a9c6ee"/><polygon points="6.0,0.6 6.9,3.4 9.8,2.8 7.8,5.0 9.8,7.2 6.9,6.6 6.0,9.4 5.1,6.6 2.2,7.2 4.2,5.0 2.2,2.8 5.1,3.4" fill="#fbf31a" stroke="#c9bc10" stroke-width="0.5"/><circle cx="3" cy="16.5" r="1.5" fill="#ee1010"/><circle cx="10.5" cy="18.5" r="1.5" fill="#ee1010"/><circle cx="17" cy="12" r="1.5" fill="#ee1010"/></svg>
<svg style="left:468px;top:82.5px" width="20" height="20" viewBox="0 0 20 20"><path d="M3.5 8H13V18.5H3.5Z" fill="#a9c9f2" stroke="#5a84c6" stroke-width="0.7"/><path d="M13 8L17.5 5.5V15.5L13 18.5Z" fill="#4f74b8"/><path d="M3.5 8L8 5.5H17.5L13 8Z" fill="#d6e6fa"/><rect x="9.5" y="1" width="9" height="6.5" fill="#fff" stroke="#6e6e6e" stroke-width="0.9"/><rect x="9.5" y="1" width="9" height="2" fill="#2f3fa4"/><polygon points="5.0,1.1 5.9,3.9 8.8,3.3 6.8,5.5 8.8,7.7 5.9,7.1 5.0,9.9 4.1,7.1 1.2,7.7 3.2,5.5 1.2,3.3 4.1,3.9" fill="#fbf31a" stroke="#c9bc10" stroke-width="0.5"/></svg>
<svg style="left:499px;top:82.5px" width="20" height="20" viewBox="0 0 20 20"><path d="M12 3V11.3" stroke="#5b8bd4" stroke-width="1.6"/><path d="M9.6 10.8L12 14L14.4 10.8Z" fill="#5b8bd4"/><circle cx="12" cy="17" r="1.6" fill="#ee1010"/><polygon points="9.0,2.4 10.0,5.3 13.0,4.7 10.9,7.0 13.0,9.3 10.0,8.7 9.0,11.6 8.0,8.7 5.0,9.3 7.1,7.0 5.0,4.7 8.0,5.3" fill="#fbf31a" stroke="#c9bc10" stroke-width="0.5"/></svg>
<svg style="left:526px;top:82.5px" width="20" height="20" viewBox="0 0 20 20"><path d="M5 6H17" stroke="#4f7fca" stroke-width="1"/><path d="M5.5 6V11.9" stroke="#4f7fca" stroke-width="1.1"/><path d="M3.7 11.4L5.5 14L7.3 11.4Z" fill="#4f7fca"/><path d="M9.5 6V11.9" stroke="#4f7fca" stroke-width="1.1"/><path d="M7.7 11.4L9.5 14L11.3 11.4Z" fill="#4f7fca"/><path d="M13.5 6V11.9" stroke="#4f7fca" stroke-width="1.1"/><path d="M11.7 11.4L13.5 14L15.3 11.4Z" fill="#4f7fca"/><path d="M17 6V11.9" stroke="#4f7fca" stroke-width="1.1"/><path d="M15.2 11.4L17 14L18.8 11.4Z" fill="#4f7fca"/><path d="M3.5 17H18" stroke="#111" stroke-width="1.6"/><circle cx="3.5" cy="17" r="1.6" fill="#ee1010"/><circle cx="18" cy="17" r="1.6" fill="#ee1010"/><polygon points="8.0,1.6 8.9,4.4 11.8,3.8 9.8,6.0 11.8,8.2 8.9,7.6 8.0,10.4 7.1,7.6 4.2,8.2 6.2,6.0 4.2,3.8 7.1,4.4" fill="#fbf31a" stroke="#c9bc10" stroke-width="0.5"/></svg>
<svg style="left:552px;top:82.5px" width="20" height="20" viewBox="0 0 20 20"><path d="M5 6H17" stroke="#4f7fca" stroke-width="1"/><path d="M5.5 6V11.9" stroke="#4f7fca" stroke-width="1.1"/><path d="M3.7 11.4L5.5 14L7.3 11.4Z" fill="#4f7fca"/><path d="M9.5 6V11.9" stroke="#4f7fca" stroke-width="1.1"/><path d="M7.7 11.4L9.5 14L11.3 11.4Z" fill="#4f7fca"/><path d="M13.5 6V11.9" stroke="#4f7fca" stroke-width="1.1"/><path d="M11.7 11.4L13.5 14L15.3 11.4Z" fill="#4f7fca"/><path d="M17 6V11.9" stroke="#4f7fca" stroke-width="1.1"/><path d="M15.2 11.4L17 14L18.8 11.4Z" fill="#4f7fca"/><path d="M3.5 17H18" stroke="#5f7fb8" stroke-width="3"/><path d="M3.5 17H18" stroke="#c4d6f2" stroke-width="1.2"/><circle cx="3.5" cy="17" r="1.6" fill="#ee1010"/><circle cx="18" cy="17" r="1.6" fill="#ee1010"/><polygon points="8.0,1.6 8.9,4.4 11.8,3.8 9.8,6.0 11.8,8.2 8.9,7.6 8.0,10.4 7.1,7.6 4.2,8.2 6.2,6.0 4.2,3.8 7.1,4.4" fill="#fbf31a" stroke="#c9bc10" stroke-width="0.5"/></svg>
<svg style="left:579px;top:82.5px" width="20" height="20" viewBox="0 0 20 20"><path d="M6 7H15" stroke="#4f7fca" stroke-width="1"/><path d="M6 6V11.9" stroke="#4f7fca" stroke-width="1.1"/><path d="M4.2 11.4L6 14L7.8 11.4Z" fill="#4f7fca"/><path d="M10 6V11.9" stroke="#4f7fca" stroke-width="1.1"/><path d="M8.2 11.4L10 14L11.8 11.4Z" fill="#4f7fca"/><path d="M14.5 6V11.9" stroke="#4f7fca" stroke-width="1.1"/><path d="M12.7 11.4L14.5 14L16.3 11.4Z" fill="#4f7fca"/><path d="M18 6V11.9" stroke="#4f7fca" stroke-width="1.1"/><path d="M16.2 11.4L18 14L19.8 11.4Z" fill="#4f7fca"/><path d="M2.5 17L7 14H18.5L14 17.5Z" fill="#a9c6ee" stroke="#3c68ad" stroke-width="0.7"/><path d="M8 5H16V13" fill="none" stroke="#3c68ad" stroke-width="0.8"/><circle cx="3" cy="17" r="1.3" fill="#ee1010"/><circle cx="9" cy="16.5" r="1.3" fill="#ee1010"/><circle cx="14" cy="18" r="1.3" fill="#ee1010"/><circle cx="18.5" cy="15" r="1.3" fill="#ee1010"/><polygon points="7.0,1.3 7.9,4.0 10.6,3.4 8.8,5.5 10.6,7.6 7.9,7.0 7.0,9.7 6.1,7.0 3.4,7.6 5.2,5.5 3.4,3.4 6.1,4.0" fill="#fbf31a" stroke="#c9bc10" stroke-width="0.5"/></svg>
<svg style="left:605px;top:82.5px" width="20" height="20" viewBox="0 0 20 20"><path d="M6 4Q4 12 13 18" fill="none" stroke="#16a83e" stroke-width="1.5"/><path d="M9 3V14" stroke="#111" stroke-width="1.1" stroke-dasharray="1.8 1.2"/><path d="M9 3L13 17" stroke="#111" stroke-width="0.9" stroke-dasharray="1.8 1.2"/><path d="M13.5 13.5H18.5M13.5 19.0H18.5M16.0 13.5V19.0" stroke="#444" stroke-width="1.4"/><polygon points="6.0,2.6 6.9,5.4 9.8,4.8 7.8,7.0 9.8,9.2 6.9,8.6 6.0,11.4 5.1,8.6 2.2,9.2 4.2,7.0 2.2,4.8 5.1,5.4" fill="#fbf31a" stroke="#c9bc10" stroke-width="0.5"/></svg>
<svg style="left:643px;top:82.5px" width="20" height="20" viewBox="0 0 20 20"><path d="M2 16.5L7 13.5H19L14 17Z" fill="#7ea6de" stroke="#3c68ad" stroke-width="0.6"/><path d="M6.5 6H15.5M8 4.5H17V12" fill="none" stroke="#4f7fca" stroke-width="0.9"/><path d="M6.5 6V11.9" stroke="#4f7fca" stroke-width="1.1"/><path d="M4.7 11.4L6.5 14L8.3 11.4Z" fill="#4f7fca"/><path d="M9.5 6V11.9" stroke="#4f7fca" stroke-width="1.1"/><path d="M7.7 11.4L9.5 14L11.3 11.4Z" fill="#4f7fca"/><path d="M12.5 6V11.9" stroke="#4f7fca" stroke-width="1.1"/><path d="M10.7 11.4L12.5 14L14.3 11.4Z" fill="#4f7fca"/><path d="M15.5 6V11.9" stroke="#4f7fca" stroke-width="1.1"/><path d="M13.7 11.4L15.5 14L17.3 11.4Z" fill="#4f7fca"/><circle cx="6.5" cy="16.5" r="1.2" fill="#ee1010"/><circle cx="9.5" cy="15.3" r="1.2" fill="#ee1010"/><circle cx="11.5" cy="17" r="1.2" fill="#ee1010"/><circle cx="14" cy="15.5" r="1.2" fill="#ee1010"/><polygon points="5.5,1.1 6.4,3.9 9.3,3.3 7.3,5.5 9.3,7.7 6.4,7.1 5.5,9.9 4.6,7.1 1.7,7.7 3.7,5.5 1.7,3.3 4.6,3.9" fill="#fbf31a" stroke="#c9bc10" stroke-width="0.5"/></svg>
<svg style="left:692px;top:82.5px" width="20" height="20" viewBox="0 0 20 20"><path d="M1.5 7.5H15L10 13V18L7 19.5V13Z" fill="#5d8ad2"/><path d="M7 14.5L10 13.5V18L7 19.5Z" fill="#8fb3e8"/><rect x="10" y="1.5" width="9" height="7" fill="#fff" stroke="#6e6e6e" stroke-width="0.9"/><rect x="10" y="1.5" width="9" height="2" fill="#2f3fa4"/></svg>
<svg style="left:725px;top:82.5px" width="20" height="20" viewBox="0 0 20 20"><path d="M5 17V6Q5 4 7 4H13Q15 4 15 6V17" fill="none" stroke="#8e8e8e" stroke-width="1.6"/><path d="M5 6H15" stroke="#8e8e8e" stroke-width="1.2"/><path d="M4.5 5Q1 10 4.5 16M15.5 5Q19 10 15.5 16" fill="none" stroke="#b5b5b5" stroke-width="1"/></svg>
<svg style="left:752px;top:82.5px" width="20" height="20" viewBox="0 0 20 20"><path d="M2 12L4 4L6 12Q10 22 14 12L16 4L18 12" fill="none" stroke="#8e8e8e" stroke-width="1"/><path d="M6 12Q10 21 14 12Z" fill="#cfcfcf"/><path d="M2 12H18" stroke="#8e8e8e" stroke-width="0.8"/></svg>
<svg style="left:778px;top:82.5px" width="20" height="20" viewBox="0 0 20 20"><path d="M1.5 11Q9 4 18 7L16 14Q10 12 7 15Z" fill="#c4c4c4" stroke="#a0a0a0" stroke-width="0.6"/><path d="M4 11Q10 7 17 9M6 13Q11 10 16.5 12" stroke="#e4e4e4" stroke-width="0.8" fill="none"/></svg>
<svg style="left:803px;top:82.5px" width="20" height="20" viewBox="0 0 20 20"><path d="M2.5 5L5 3H17.5V14L15 17H2.5Z" fill="#bdbdbd" stroke="#8e8e8e" stroke-width="0.8"/><path d="M2.5 5H15V17M15 5L17.5 3" fill="none" stroke="#8e8e8e" stroke-width="0.8"/><circle cx="8.7" cy="11" r="3.6" fill="#e6e6e6" stroke="#8e8e8e" stroke-width="0.8"/><circle cx="8.7" cy="11" r="1.3" fill="#9a9a9a"/><ellipse cx="16.2" cy="9.8" rx="0.9" ry="2.8" fill="#e6e6e6" stroke="#8e8e8e" stroke-width="0.6"/></svg>
<svg style="left:829px;top:82.5px" width="20" height="20" viewBox="0 0 20 20"><path d="M3 11L7.5 4L11 11Z" fill="#a9a9a9"/><circle cx="7.5" cy="4.5" r="2" fill="#9a9a9a"/><path d="M11.5 4H17M11.5 4L14 2M11.5 4L14 6" stroke="#9a9a9a" stroke-width="1.2" fill="none"/><path d="M7.5 18V13M5 15.5L7.5 13L10 15.5" stroke="#9a9a9a" stroke-width="1.3" fill="none"/></svg>
<svg style="left:856px;top:82.5px" width="20" height="20" viewBox="0 0 20 20"><path d="M2 15.5L17.5 5Q14 13 7 15.5Z" fill="#bdbdbd" stroke="#a0a0a0" stroke-width="0.6"/></svg>
<svg style="left:888px;top:82.5px" width="20" height="20" viewBox="0 0 20 20"><path d="M3 6H17" stroke="#8e8e8e" stroke-width="1.2"/><circle cx="3.5" cy="6" r="1.4" fill="#8e8e8e"/><circle cx="16.5" cy="6" r="1.4" fill="#8e8e8e"/><path d="M2.5 14.5H17.5" stroke="#8e8e8e" stroke-width="1.1"/><path d="M2.5 14.5Q6.5 20 10 14.5Q13.5 9 17.5 14.5" fill="#d6d6d6" stroke="#8e8e8e" stroke-width="1"/></svg>
<svg style="left:914px;top:82.5px" width="20" height="20" viewBox="0 0 20 20"><path d="M3 6H17" stroke="#b9b9b9" stroke-width="3"/><circle cx="3.5" cy="6" r="1.8" fill="#8e8e8e"/><circle cx="16.5" cy="6" r="1.8" fill="#8e8e8e"/><path d="M2.5 14.5H17.5" stroke="#8e8e8e" stroke-width="1.1"/><path d="M2.5 14.5Q6.5 20 10 14.5Q13.5 9 17.5 14.5" fill="#d6d6d6" stroke="#8e8e8e" stroke-width="1"/></svg>
<svg style="left:940px;top:82.5px" width="20" height="20" viewBox="0 0 20 20"><path d="M3 6H17" stroke="#b9b9b9" stroke-width="3"/><circle cx="3.5" cy="6" r="1.8" fill="#8e8e8e"/><circle cx="8" cy="6" r="1.5" fill="#8e8e8e"/><circle cx="12" cy="6" r="1.5" fill="#8e8e8e"/><circle cx="16.5" cy="6" r="1.8" fill="#8e8e8e"/><path d="M2.5 14.5H17.5" stroke="#8e8e8e" stroke-width="1.1"/><path d="M2.5 14.5Q6.5 20 10 14.5Q13.5 9 17.5 14.5" fill="#d6d6d6" stroke="#8e8e8e" stroke-width="1"/></svg>
<svg style="left:966px;top:82.5px" width="20" height="20" viewBox="0 0 20 20"><path d="M3 2.5H17" stroke="#8e8e8e" stroke-width="1.1"/><circle cx="3.5" cy="2.5" r="1.2" fill="#8e8e8e"/><circle cx="16.5" cy="2.5" r="1.2" fill="#8e8e8e"/><path d="M3 11L6.5 4.5L10 11ZM10 11L13.5 4.5L17 11Z" fill="#b5b5b5" stroke="#8e8e8e" stroke-width="0.5"/><path d="M2.5 14.5H17.5" stroke="#8e8e8e" stroke-width="1.1"/><path d="M2.5 14.5Q6.5 20 10 14.5Q13.5 9 17.5 14.5" fill="#d6d6d6" stroke="#8e8e8e" stroke-width="1"/></svg>
<svg style="left:991px;top:82.5px" width="20" height="20" viewBox="0 0 20 20"><path d="M2 13L17 4Q13 11 7 13Z" fill="#c4c4c4" stroke="#a0a0a0" stroke-width="0.6"/><path d="M2.5 16H17.5" stroke="#8e8e8e" stroke-width="1"/><path d="M2.5 16Q6.5 20 10 16Q13.5 12 17.5 16" fill="none" stroke="#8e8e8e" stroke-width="1"/></svg>
<svg style="left:1018px;top:82.5px" width="20" height="20" viewBox="0 0 20 20"><path d="M2 18L5 15L14 9.5L16 11.5Q11 16.5 4 18.5Z" fill="#5f7fe6"/><path d="M2 18L14 9.5" stroke="#9a9a9a" stroke-width="1"/><rect x="8.5" y="2" width="10" height="7" fill="#fff" stroke="#6e6e6e" stroke-width="0.9"/><rect x="8.5" y="2" width="10" height="2" fill="#2f3fa4"/><polygon points="5.5,1.9 6.5,4.8 9.5,4.2 7.4,6.5 9.5,8.8 6.5,8.2 5.5,11.1 4.5,8.2 1.5,8.8 3.6,6.5 1.5,4.2 4.5,4.8" fill="#fbf31a" stroke="#c9bc10" stroke-width="0.5"/></svg>
<svg style="left:1051px;top:82.5px" width="20" height="20" viewBox="0 0 20 20"><path d="M2.5 3V17.5H17Z" fill="#c9c9c9" stroke="#a5a5a5" stroke-width="0.8"/><path d="M2.5 3H17V17.5" fill="none" stroke="#dcdcdc" stroke-width="0.9"/><path d="M8 13L9 10.5L14.5 4.5L16.5 6.3L11 12.2Z" fill="#efefef" stroke="#b0b0b0" stroke-width="0.7"/></svg>
<svg style="left:1238px;top:82.5px" width="20" height="20" viewBox="0 0 20 20"><path d="M8.5 13.5V6" stroke="#1b33c8" stroke-width="1.3"/><path d="M6.2 7L8.5 3L10.8 7Z" fill="#1b33c8"/><path d="M8.5 13.5L3 17" stroke="#14a24a" stroke-width="1.3"/><path d="M1 18.3L4.2 14.6L5.6 17.6Z" fill="#14a24a"/><path d="M8.5 13.5L15 15.5" stroke="#d8491a" stroke-width="1.3"/><path d="M18 16.3L13.8 13.2L13.3 17.2Z" fill="#d8491a"/><circle cx="8.5" cy="13.5" r="1.8" fill="#f5d31a"/><rect x="9.5" y="1.5" width="9" height="7" fill="#fff" stroke="#6e6e6e" stroke-width="0.9"/><rect x="9.5" y="1.5" width="9" height="2" fill="#2f3fa4"/></svg>
<svg style="left:1270px;top:82.5px" width="20" height="20" viewBox="0 0 20 20"><rect x="2" y="6" width="2.2" height="2.2" fill="#8e8e8e"/><rect x="2" y="10" width="2.2" height="2.2" fill="#8e8e8e"/><rect x="2" y="14" width="2.2" height="2.2" fill="#8e8e8e"/><rect x="2" y="17.5" width="2.2" height="2.2" fill="#8e8e8e"/><rect x="6" y="6" width="2.2" height="2.2" fill="#8e8e8e"/><rect x="6" y="10" width="2.2" height="2.2" fill="#8e8e8e"/><rect x="6" y="14" width="2.2" height="2.2" fill="#8e8e8e"/><rect x="6" y="17.5" width="2.2" height="2.2" fill="#8e8e8e"/><rect x="10" y="6" width="2.2" height="2.2" fill="#8e8e8e"/><rect x="10" y="10" width="2.2" height="2.2" fill="#8e8e8e"/><rect x="10" y="14" width="2.2" height="2.2" fill="#8e8e8e"/><rect x="10" y="17.5" width="2.2" height="2.2" fill="#8e8e8e"/><rect x="14" y="6" width="2.2" height="2.2" fill="#8e8e8e"/><rect x="14" y="10" width="2.2" height="2.2" fill="#8e8e8e"/><rect x="14" y="14" width="2.2" height="2.2" fill="#8e8e8e"/><rect x="14" y="17.5" width="2.2" height="2.2" fill="#8e8e8e"/><path d="M12 1.5H17.5V9H14Z" fill="#6fa0e0" stroke="#3c68ad" stroke-width="0.5"/><path d="M1.5 5Q4 2 8 2.5L14 4.5Q15 7 12 9Q7 10 3.5 8Z" fill="#e6bf9e" stroke="#9b7a5c" stroke-width="0.6"/><path d="M5 6.5Q7.5 5 10 6M6.5 8Q9 7 11 7.5" stroke="#a98464" stroke-width="0.5" fill="none"/></svg>
<svg style="left:1296px;top:82.5px" width="20" height="20" viewBox="0 0 20 20"><rect x="2.5" y="2.5" width="2.2" height="2.2" fill="#9a9a9a"/><rect x="2.5" y="6.5" width="2.2" height="2.2" fill="#9a9a9a"/><rect x="2.5" y="12" width="2.2" height="2.2" fill="#9a9a9a"/><rect x="2.5" y="16" width="2.2" height="2.2" fill="#9a9a9a"/><rect x="6.5" y="2.5" width="2.2" height="2.2" fill="#9a9a9a"/><rect x="6.5" y="6.5" width="2.2" height="2.2" fill="#9a9a9a"/><rect x="6.5" y="12" width="2.2" height="2.2" fill="#9a9a9a"/><rect x="6.5" y="16" width="2.2" height="2.2" fill="#9a9a9a"/><rect x="12" y="2.5" width="2.2" height="2.2" fill="#9a9a9a"/><rect x="12" y="6.5" width="2.2" height="2.2" fill="#9a9a9a"/><rect x="12" y="12" width="2.2" height="2.2" fill="#9a9a9a"/><rect x="12" y="16" width="2.2" height="2.2" fill="#9a9a9a"/><rect x="16" y="2.5" width="2.2" height="2.2" fill="#9a9a9a"/><rect x="16" y="6.5" width="2.2" height="2.2" fill="#9a9a9a"/><rect x="16" y="12" width="2.2" height="2.2" fill="#9a9a9a"/><rect x="16" y="16" width="2.2" height="2.2" fill="#9a9a9a"/><path d="M10.4 1.5V19M2 10.2H19" stroke="#141496" stroke-width="1.6"/><circle cx="10.4" cy="10.2" r="2.6" fill="#fff" stroke="#141496" stroke-width="1.5"/><circle cx="10.4" cy="10.2" r="0.9" fill="#222"/></svg>
<svg style="left:1324px;top:82.5px" width="20" height="20" viewBox="0 0 20 20"><path d="M10 2L16 4.5V14.5L10 18.5L4 15.5V5Z" fill="#a5cce8" stroke="#4f86b8" stroke-width="0.7" opacity="0.9"/><path d="M10 2V18.5M4 5L16 14.5M16 4.5L4 15.5" stroke="#4f86b8" stroke-width="0.6"/><path d="M1 13.5L12 7.5L19 9.5L8 15.5Z" fill="#e83a3a" stroke="#9e1414" stroke-width="0.6" opacity="0.92"/><path d="M10 7V13" stroke="#4f86b8" stroke-width="0.8"/></svg>
<svg style="left:1349px;top:82.5px" width="20" height="20" viewBox="0 0 20 20"><path d="M3 8L12 5.5L18 7.5V13L9 16L3 14Z" fill="#a5cce8" stroke="#4f86b8" stroke-width="0.7" opacity="0.9"/><path d="M10 2L16 4.5V14.5L10 18.5L4 15.5V5Z" fill="#a5cce8" stroke="#4f86b8" stroke-width="0.6" opacity="0.6"/><path d="M7 15.5L12.5 1.5L14 6L8.5 19.5Z" fill="#e83a3a" stroke="#9e1414" stroke-width="0.6" opacity="0.92"/><path d="M1.5 10.5H19" stroke="#4f86b8" stroke-width="0.7"/></svg>
<svg style="left:1375px;top:82.5px" width="20" height="20" viewBox="0 0 20 20"><path d="M5 4.5H16V15.5H5Z" fill="#e83a3a" stroke="#9e1414" stroke-width="0.7"/><path d="M1.5 10L10 7L19 10L10 13.5Z" fill="#a5cce8" stroke="#4f86b8" stroke-width="0.7" opacity="0.92"/><path d="M10 1.5L12.5 6V15L10 19L8 15V6Z" fill="#a5cce8" stroke="#4f86b8" stroke-width="0.6" opacity="0.9"/></svg>
<svg style="left:1408px;top:82.5px" width="20" height="20" viewBox="0 0 20 20"><circle cx="5" cy="5" r="2.2" fill="none" stroke="#a9a9a9" stroke-width="1"/><path d="M8 6.5L13.5 11.5M13.8 8.5V12H10.5" fill="none" stroke="#a9a9a9" stroke-width="1"/><circle cx="13" cy="14.5" r="2.3" fill="none" stroke="#a9a9a9" stroke-width="1"/><circle cx="14.8" cy="16.3" r="2.3" fill="none" stroke="#a9a9a9" stroke-width="1"/></svg>
<svg style="left:1433px;top:82.5px" width="20" height="20" viewBox="0 0 20 20"><path d="M10 1V19" stroke="#8e8e8e" stroke-width="0.9" stroke-dasharray="3 1.2 1 1.2"/><path d="M7 13.5Q2.5 12 3 9.5Q4 6.5 10 6.5Q17 6.5 17.5 10Q17.5 13 12 14" fill="none" stroke="#b0b0b0" stroke-width="1.7"/><path d="M3.5 11L8 11.5L6 16Z" fill="#b0b0b0"/></svg>
<svg style="left:1459px;top:82.5px" width="20" height="20" viewBox="0 0 20 20"><path d="M10 1V19" stroke="#8e8e8e" stroke-width="0.9" stroke-dasharray="3 1.2 1 1.2"/><path d="M8 3.5V17H2.5Z" fill="#ececec" stroke="#b0b0b0" stroke-width="1"/><path d="M12 3.5V17H17.5Z" fill="#ececec" stroke="#b0b0b0" stroke-width="1"/></svg>
<svg style="left:1486px;top:82.5px" width="20" height="20" viewBox="0 0 20 20"><path d="M3.5 3.5L16.5 17M16.5 3.5L3.5 17" stroke="#111" stroke-width="1.5"/><circle cx="10" cy="10.2" r="2.4" fill="#f08a8a"/><circle cx="10" cy="10.2" r="1.3" fill="#ee1010"/><circle cx="3.5" cy="3.5" r="1.5" fill="#ee1010"/><circle cx="16.5" cy="3.5" r="1.5" fill="#ee1010"/><circle cx="3.5" cy="17" r="1.5" fill="#ee1010"/><circle cx="16.5" cy="17" r="1.5" fill="#ee1010"/></svg>
<svg style="left:1512px;top:82.5px" width="20" height="20" viewBox="0 0 20 20"><rect x="2" y="4" width="16" height="14" rx="1.5" fill="#f6f6f6" stroke="#5a5a5a" stroke-width="1.3"/><path d="M5 2.5V5M8 2.5V5M12 2.5V5M15 2.5V5" stroke="#5a5a5a" stroke-width="1.6"/><path d="M4 8H7M4 11H6M4 14H7M13.5 8H16M14.5 11H16M13.5 14H16" stroke="#c0c0c0" stroke-width="0.9"/><circle cx="10" cy="11.5" r="3.2" fill="none" stroke="#5a5a5a" stroke-width="2.4" stroke-dasharray="1.7 1.1"/><circle cx="10" cy="11.5" r="2.6" fill="#f6f6f6" stroke="#5a5a5a" stroke-width="1.3"/></svg>
<svg style="left:1549px;top:82.5px" width="20" height="20" viewBox="0 0 20 20"><rect x="2" y="2.5" width="16" height="15.5" fill="#e2e2e2" stroke="#4a4a4a" stroke-width="1.2"/><rect x="2" y="2.5" width="16" height="2.6" fill="#2f3fa4"/><path d="M2 8H18M2 11H18M2 14H18M6 5V18" stroke="#8a8a8a" stroke-width="0.9"/><path d="M16.5 7V17H6.5Z" fill="#9fee9f" stroke="#4cae4c" stroke-width="1"/><path d="M14 12V14.8H11.2Z" fill="#e2e2e2" stroke="#4cae4c" stroke-width="0.6"/></svg>
<svg style="left:37px;top:91px" width="8" height="4" viewBox="0 0 8 4"><path d="M0.5 0H7.5L4 4Z" fill="#222"/></svg>
<svg style="left:101px;top:91px" width="8" height="4" viewBox="0 0 8 4"><path d="M0.5 0H7.5L4 4Z" fill="#222"/></svg>
<svg style="left:139px;top:91px" width="8" height="4" viewBox="0 0 8 4"><path d="M0.5 0H7.5L4 4Z" fill="#222"/></svg>
<svg style="left:269px;top:91px" width="8" height="4" viewBox="0 0 8 4"><path d="M0.5 0H7.5L4 4Z" fill="#222"/></svg>
<svg style="left:341px;top:91px" width="8" height="4" viewBox="0 0 8 4"><path d="M0.5 0H7.5L4 4Z" fill="#222"/></svg>
<svg style="left:378px;top:91px" width="8" height="4" viewBox="0 0 8 4"><path d="M0.5 0H7.5L4 4Z" fill="#222"/></svg>
<svg style="left:416px;top:91px" width="8" height="4" viewBox="0 0 8 4"><path d="M0.5 0H7.5L4 4Z" fill="#222"/></svg>
<svg style="left:454px;top:91px" width="8" height="4" viewBox="0 0 8 4"><path d="M0.5 0H7.5L4 4Z" fill="#222"/></svg>
<svg style="left:629px;top:91px" width="8" height="4" viewBox="0 0 8 4"><path d="M0.5 0H7.5L4 4Z" fill="#222"/></svg>
<svg style="left:667px;top:91px" width="8" height="4" viewBox="0 0 8 4"><path d="M0.5 0H7.5L4 4Z" fill="#222"/></svg>
<svg style="left:1075px;top:91px" width="8" height="4" viewBox="0 0 8 4"><path d="M0.5 0H7.5L4 4Z" fill="#8e8e8e"/></svg>
<svg style="left:1573px;top:91px" width="8" height="4" viewBox="0 0 8 4"><path d="M0.5 0H7.5L4 4Z" fill="#222"/></svg>
<div class="sep" style="left:153px;top:84px;height:18px;background:#d0d0d0"></div>
<div class="sep" style="left:238px;top:84px;height:18px;background:#d0d0d0"></div>
<div class="sep" style="left:309px;top:84px;height:18px;background:#d0d0d0"></div>
<div class="sep" style="left:494px;top:84px;height:18px;background:#d0d0d0"></div>
<div class="sep" style="left:718px;top:84px;height:18px;background:#d0d0d0"></div>
<div class="sep" style="left:881px;top:84px;height:18px;background:#d0d0d0"></div>
<div class="sep" style="left:1044px;top:84px;height:18px;background:#d0d0d0"></div>
<div class="sep" style="left:1264px;top:84px;height:18px;background:#d0d0d0"></div>
<div class="sep" style="left:1401px;top:84px;height:18px;background:#d0d0d0"></div>
<div class="sep" style="left:680px;top:80px;height:26px;background:#dedede"></div>
<svg style="left:685px;top:84px" width="2" height="20" viewBox="0 0 2 20"><rect x="0" y="0" width="2" height="2" fill="#bdbdbd"/><rect x="0" y="4" width="2" height="2" fill="#bdbdbd"/><rect x="0" y="8" width="2" height="2" fill="#bdbdbd"/><rect x="0" y="12" width="2" height="2" fill="#bdbdbd"/><rect x="0" y="16" width="2" height="2" fill="#bdbdbd"/></svg>
<div class="sep" style="left:1087px;top:80px;height:26px;background:#dedede"></div>
<svg style="left:1092px;top:84px" width="2" height="20" viewBox="0 0 2 20"><rect x="0" y="0" width="2" height="2" fill="#bdbdbd"/><rect x="0" y="4" width="2" height="2" fill="#bdbdbd"/><rect x="0" y="8" width="2" height="2" fill="#bdbdbd"/><rect x="0" y="12" width="2" height="2" fill="#bdbdbd"/><rect x="0" y="16" width="2" height="2" fill="#bdbdbd"/></svg>
<div class="sep" style="left:1536px;top:80px;height:26px;background:#dedede"></div>
<svg style="left:1541px;top:84px" width="2" height="20" viewBox="0 0 2 20"><rect x="0" y="0" width="2" height="2" fill="#bdbdbd"/><rect x="0" y="4" width="2" height="2" fill="#bdbdbd"/><rect x="0" y="8" width="2" height="2" fill="#bdbdbd"/><rect x="0" y="12" width="2" height="2" fill="#bdbdbd"/><rect x="0" y="16" width="2" height="2" fill="#bdbdbd"/></svg>
<svg style="left:1588px;top:90.0px" width="8" height="7" viewBox="0 0 8 7"><path d="M0.8 0.8L3.3 3.5L0.8 6.2M4.3 0.8L6.8 3.5L4.3 6.2" fill="none" stroke="#555" stroke-width="1"/></svg>
<div class="a" style="left:1098px;top:82px;width:136px;height:21px;background:#e8e8f4;"></div>
<div class="a" style="left:1103px;top:87px;width:11px;height:11px;background:#ccffff;"></div>
<div class="t " style="left:1119px;top:86px;;letter-spacing:-0.60px">1 - Global XYZ</div>
<svg style="left:1220px;top:90px" width="10" height="7" viewBox="0 0 10 7"><path d="M1 1L5 5L9 1" fill="none" stroke="#444" stroke-width="1.1"/></svg>
<svg style="left:282px;top:973px" width="20" height="20" viewBox="0 0 20 20"><rect x="3" y="3" width="14" height="14" fill="#dcdcdc" stroke="#444" stroke-width="1.1"/><rect x="3" y="3" width="14" height="2.4" fill="#2f3fa4"/><path d="M16 7V16H6Z" fill="#9fee9f" stroke="#4cae4c" stroke-width="0.9"/></svg>
<svg style="left:523px;top:973px" width="20" height="20" viewBox="0 0 20 20"><path d="M3 16L13 4" stroke="#6f8fc8" stroke-width="2.6"/><path d="M3 16L13 4" stroke="#c4d6f2" stroke-width="1"/><circle cx="3" cy="16" r="1.4" fill="#ee1010"/><circle cx="13" cy="4" r="1.4" fill="#ee1010"/><path d="M12 12.5H16.5M12 17.5H16.5M14.2 12.5V17.5" stroke="#555" stroke-width="1.2"/></svg>
<div class="sel" style="left:832px;top:971px;width:25px;height:24px"></div>
<svg style="left:835px;top:973px" width="20" height="20" viewBox="0 0 20 20"><rect x="3.5" y="3.5" width="9" height="6.5" fill="#fff" stroke="#4a6fc0" stroke-width="1.2"/><path d="M9 8Q16 9 14.5 17" fill="none" stroke="#2f55a8" stroke-width="1.6"/><path d="M11.5 15L14.5 18.5L17 14.5" fill="none" stroke="#2f55a8" stroke-width="1.4"/></svg>
<svg style="left:859px;top:973px" width="20" height="20" viewBox="0 0 20 20"><rect x="9" y="2.5" width="8" height="6" fill="#fff" stroke="#777" stroke-width="1.1"/><path d="M9.5 6Q3 7 6 16" fill="none" stroke="#3b5fa8" stroke-width="1.5"/><path d="M3 13L6.2 17L8.5 12.5" fill="none" stroke="#3b5fa8" stroke-width="1.3"/></svg>
<svg style="left:892px;top:973px" width="20" height="20" viewBox="0 0 20 20"><rect x="2.5" y="4" width="15" height="12.5" fill="#d9d9d9" stroke="#666" stroke-width="1.1"/><rect x="2.5" y="4" width="15" height="3" fill="#777"/><path d="M2.5 10H17.5M2.5 13H17.5M7.5 4V16.5M12.5 4V16.5" stroke="#666" stroke-width="0.9"/></svg>
<svg style="left:918px;top:973px" width="20" height="20" viewBox="0 0 20 20"><rect x="2.5" y="7" width="15" height="10" fill="#f2f2f2" stroke="#b5b5b5" stroke-width="1"/><path d="M2.5 10.5H17.5M2.5 13.5H17.5M7.5 7V17M12.5 7V17" stroke="#c4c4c4" stroke-width="0.9"/><path d="M5 4H15M13 2.5L15 4L13 5.5" fill="none" stroke="#b5b5b5" stroke-width="1"/></svg>
<svg style="left:945px;top:973px" width="20" height="20" viewBox="0 0 20 20"><rect x="2.5" y="2.5" width="15" height="15" fill="#dedede" stroke="#b5b5b5" stroke-width="1"/><path d="M10 6V14M6 10H14" stroke="#a9a9a9" stroke-width="2.6"/></svg>
<svg style="left:970px;top:973px" width="20" height="20" viewBox="0 0 20 20"><rect x="2.5" y="2.5" width="15" height="15" fill="#dedede" stroke="#b5b5b5" stroke-width="1"/><path d="M7 7L13 13M13 7L7 13" stroke="#a9a9a9" stroke-width="2.6"/></svg>
<svg style="left:997px;top:973px" width="20" height="20" viewBox="0 0 20 20"><rect x="2.5" y="2.5" width="15" height="15" fill="#dedede" stroke="#b5b5b5" stroke-width="1"/><circle cx="10" cy="7" r="1.8" fill="#a9a9a9"/><circle cx="10" cy="13" r="1.8" fill="#a9a9a9"/></svg>
<svg style="left:1029px;top:973px" width="20" height="20" viewBox="0 0 20 20"><rect x="2.5" y="2.5" width="15" height="15" fill="#d6d6d6" stroke="#8e8e8e" stroke-width="1"/><path d="M5.5 5.5L14.5 14.5M14.5 5.5L5.5 14.5" stroke="#6a6a6a" stroke-width="2.8"/></svg>
<svg style="left:1061px;top:973px" width="20" height="20" viewBox="0 0 20 20"><rect x="3" y="5" width="7" height="11" fill="#8a8a8a"/><path d="M10 8H15Q18 10.5 15 13H12" fill="none" stroke="#777" stroke-width="1.4"/><path d="M14 10.5L11.5 13L14 15.5" fill="none" stroke="#777" stroke-width="1.2"/></svg>
<svg style="left:1087px;top:973px" width="20" height="20" viewBox="0 0 20 20"><rect x="2.5" y="6" width="7" height="8" fill="#a9a9a9"/><path d="M9.5 10H12" stroke="#a9a9a9" stroke-width="1.3"/><path d="M12 6L18 14M18 6L12 14" stroke="#a9a9a9" stroke-width="2"/></svg>
<svg style="left:1113px;top:973px" width="20" height="20" viewBox="0 0 20 20"><path d="M9 5H16M9 10H16M9 15H16" stroke="#b9b9b9" stroke-width="1.4"/><path d="M8 10H3M5.5 7.5L3 10L5.5 12.5" fill="none" stroke="#a9a9a9" stroke-width="1.4"/></svg>
<svg style="left:1139px;top:973px" width="20" height="20" viewBox="0 0 20 20"><path d="M3 5H10M3 10H10M3 15H10" stroke="#b9b9b9" stroke-width="1.4"/><path d="M11 10H17M14.5 7.5L17 10L14.5 12.5" fill="none" stroke="#a9a9a9" stroke-width="1.4"/></svg>
<svg style="left:1173px;top:973px" width="20" height="20" viewBox="0 0 20 20"><rect x="2.5" y="3" width="15" height="14.5" fill="#fff" stroke="#555" stroke-width="1.1"/><rect x="3" y="3.5" width="14" height="4" fill="#d0d4f4"/><path d="M2.5 8H17.5M8 3V17.5" stroke="#555" stroke-width="0.9"/></svg>
<svg style="left:1206px;top:973px" width="20" height="20" viewBox="0 0 20 20"><text x="2" y="17" font-size="9" font-style="italic" font-weight="bold" fill="#444" font-family="Liberation Serif, serif">ab</text><path d="M12.5 12.5H16.5M12.5 15H16.5" stroke="#444" stroke-width="1"/><rect x="9.5" y="2" width="8" height="6.5" fill="#fff" stroke="#6e6e6e" stroke-width="0.9"/><rect x="9.5" y="2" width="8" height="2.2" fill="#2f3fa4"/></svg>
<svg style="left:1233px;top:973px" width="20" height="20" viewBox="0 0 20 20"><text x="3" y="15" font-size="14" font-style="italic" fill="#6a6a6a" font-family="Liberation Serif, serif">fx</text></svg>
<svg style="left:1258px;top:973px" width="20" height="20" viewBox="0 0 20 20"><text x="2" y="16" font-size="14" font-style="italic" fill="#8a8a8a" font-family="Liberation Serif, serif">fx</text><path d="M10 2.5L17 9.5M17 2.5L10 9.5" stroke="#9a9a9a" stroke-width="2"/></svg>
<svg style="left:1284px;top:973px" width="20" height="20" viewBox="0 0 20 20"><text x="2" y="17" font-size="14" font-style="italic" font-weight="bold" fill="#4a4a4a" font-family="Liberation Serif, serif">fx</text><path d="M9.5 4.5Q13.5 0.3 17.5 4.5Q13.5 8.4 9.5 4.5Z" fill="#ececf8" stroke="#2e2e78" stroke-width="0.9"/><circle cx="13.5" cy="4.3" r="2" fill="#2d2d86"/></svg>
<svg style="left:1317px;top:973px" width="20" height="20" viewBox="0 0 20 20"><rect x="3" y="3" width="13" height="12" fill="#fff" stroke="#2f8a3c" stroke-width="1.2"/><rect x="3" y="3" width="6" height="5" fill="#2f8a3c"/><path d="M3 9H16M3 12H16M9.5 3V15" stroke="#2f8a3c" stroke-width="0.8"/><path d="M4.5 4.2L7.5 7M7.5 4.2L4.5 7" stroke="#fff" stroke-width="1"/><path d="M10 14.5H16L13 18.5Z" fill="#2f8a3c"/></svg>
<svg style="left:1350px;top:973px" width="20" height="20" viewBox="0 0 20 20"><rect x="2.5" y="6.5" width="15" height="11" fill="#fff" stroke="#444" stroke-width="1.1"/><rect x="2.5" y="6.5" width="15" height="2.6" fill="#555"/><path d="M4.5 12H8M9.5 12H15.5M4.5 15H8M9.5 15H15.5" stroke="#666" stroke-width="1.2"/><path d="M12 2H17.5V8H14Z" fill="#5a8fd6" stroke="#2f5ea6" stroke-width="0.5"/><path d="M4 5.5Q6 2.5 9.5 2.5Q13.5 3 14.5 5.5Q13.5 8 10 8Q7 8.5 6 7Z" fill="#e6bf9e" stroke="#9b7a5c" stroke-width="0.6"/></svg>
<div class="sep" style="left:1376px;top:974px;height:19px;background:#d0d0d0"></div>
<svg style="left:1380px;top:973px" width="20" height="20" viewBox="0 0 20 20"><rect x="1.5" y="2" width="17" height="4" fill="#7fd07f"/><path d="M3.5 2V4M6.5 2V4M9.5 2V4M12.5 2V4M15.5 2V4" stroke="#2f8a3c" stroke-width="0.7"/><text x="10" y="16" font-size="10.5" text-anchor="middle" fill="#111" font-family="Liberation Sans, sans-serif" letter-spacing="-0.5">0,00</text><path d="M9.5 17.8H18.5" stroke="#2f3fd0" stroke-width="1.1"/></svg>
<div class="sep" style="left:886px;top:974px;height:19px;background:#d0d0d0"></div>
<div class="sep" style="left:1023px;top:974px;height:19px;background:#d0d0d0"></div>
<div class="sep" style="left:1055px;top:974px;height:19px;background:#d0d0d0"></div>
<div class="sep" style="left:1167px;top:974px;height:19px;background:#d0d0d0"></div>
<div class="sep" style="left:1200px;top:974px;height:19px;background:#d0d0d0"></div>
<div class="sep" style="left:1311px;top:974px;height:19px;background:#d0d0d0"></div>
<div class="sep" style="left:1344px;top:974px;height:19px;background:#d0d0d0"></div>
<div class="a" style="left:641px;top:105px;width:246px;height:310px;background:#f8f8f8;border:1px solid #c6c6c6;box-shadow:2px 2px 2px rgba(0,0,0,0.55)"></div>
<div class="a" style="left:642px;top:106px;width:28px;height:308px;background:#f2f2f2;"></div>
<div class="a" style="left:644px;top:108px;width:239px;height:22px;background:#95cbf8;"></div>
<div class="a" style="left:644px;top:108px;width:25px;height:22px;background:#90c6f5;"></div>
<div class="a" style="left:670px;top:245px;width:213px;height:1px;background:#d7d7d7;"></div>
<div class="a" style="left:670px;top:363px;width:213px;height:1px;background:#d7d7d7;"></div>
<svg style="left:645px;top:110px" width="20" height="20" viewBox="0 0 20 20"><path d="M2 14L6 11H17L13 14Z" fill="#7fa6d6" stroke="#3f6db0" stroke-width="0.6"/><path d="M5 5H15" stroke="#3f6db0" stroke-width="1"/><path d="M6 5V12" stroke="#3f6db0" stroke-width="1"/><path d="M4.4 10L6 13L7.6 10Z" fill="#3f6db0"/><path d="M9 5V12" stroke="#3f6db0" stroke-width="1"/><path d="M7.4 10L9 13L10.6 10Z" fill="#3f6db0"/><path d="M12 5V12" stroke="#3f6db0" stroke-width="1"/><path d="M10.4 10L12 13L13.6 10Z" fill="#3f6db0"/><path d="M15 5V12" stroke="#3f6db0" stroke-width="1"/><path d="M13.4 10L15 13L16.6 10Z" fill="#3f6db0"/><circle cx="6" cy="14.5" r="1.2" fill="#e01010"/><circle cx="10" cy="15" r="1.2" fill="#e01010"/><circle cx="14" cy="14" r="1.2" fill="#e01010"/><polygon points="5.2,1.0 6.0,3.4 8.5,2.9 6.8,4.8 8.5,6.7 6.0,6.2 5.2,8.6 4.4,6.2 1.9,6.7 3.6,4.8 1.9,2.9 4.4,3.4" fill="#fbf31a" stroke="#c9bc10" stroke-width="0.5"/></svg>
<div class="mi " style="top:113px;letter-spacing:-0.15px">New Opening Load</div>
<svg style="left:645px;top:132px" width="20" height="20" viewBox="0 0 20 20"><path d="M5 11L9 9H16V15L12 17H5Z" fill="#d9d9d9" stroke="#b0b0b0" stroke-width="0.6"/><path d="M5 11H12V17M12 11L16 9" stroke="#b5b5b5" stroke-width="0.6" fill="none"/><path d="M9 3V9" stroke="#b0b0b0" stroke-width="1"/><path d="M7.4 7L9 10L10.6 7Z" fill="#b0b0b0"/><polygon points="5.2,1.0 6.0,3.4 8.5,2.9 6.8,4.8 8.5,6.7 6.0,6.2 5.2,8.6 4.4,6.2 1.9,6.7 3.6,4.8 1.9,2.9 4.4,3.4" fill="#e4e4e4" stroke="#ababab" stroke-width="0.5"/></svg>
<div class="mi g" style="top:135px;letter-spacing:-0.29px">New Solid Load</div>
<svg style="left:645px;top:154px" width="20" height="20" viewBox="0 0 20 20"><path d="M5 5H16" stroke="#aaa" stroke-width="1"/><path d="M6 5V12" stroke="#aaa" stroke-width="1"/><path d="M4.4 10L6 13L7.6 10Z" fill="#aaa"/><path d="M9.5 5V12" stroke="#aaa" stroke-width="1"/><path d="M7.9 10L9.5 13L11.1 10Z" fill="#aaa"/><path d="M13 5V12" stroke="#aaa" stroke-width="1"/><path d="M11.4 10L13 13L14.6 10Z" fill="#aaa"/><path d="M16 5V12" stroke="#aaa" stroke-width="1"/><path d="M14.4 10L16 13L17.6 10Z" fill="#aaa"/><path d="M3 16H17" stroke="#888" stroke-width="1.2"/><circle cx="3.5" cy="16" r="1.2" fill="#999"/><circle cx="10" cy="16" r="1.2" fill="#999"/><circle cx="16.5" cy="16" r="1.2" fill="#999"/><polygon points="5.2,1.0 6.0,3.4 8.5,2.9 6.8,4.8 8.5,6.7 6.0,6.2 5.2,8.6 4.4,6.2 1.9,6.7 3.6,4.8 1.9,2.9 4.4,3.4" fill="#e4e4e4" stroke="#ababab" stroke-width="0.5"/></svg>
<div class="mi g" style="top:157px;letter-spacing:-0.43px">New Line Set Load</div>
<svg style="left:645px;top:176px" width="20" height="20" viewBox="0 0 20 20"><path d="M5 5H16" stroke="#3f6db0" stroke-width="1"/><path d="M6 5V12" stroke="#3f6db0" stroke-width="1"/><path d="M4.4 10L6 13L7.6 10Z" fill="#3f6db0"/><path d="M9.5 5V12" stroke="#3f6db0" stroke-width="1"/><path d="M7.9 10L9.5 13L11.1 10Z" fill="#3f6db0"/><path d="M13 5V12" stroke="#3f6db0" stroke-width="1"/><path d="M11.4 10L13 13L14.6 10Z" fill="#3f6db0"/><path d="M16 5V12" stroke="#3f6db0" stroke-width="1"/><path d="M14.4 10L16 13L17.6 10Z" fill="#3f6db0"/><path d="M3 16H17" stroke="#6f8fc8" stroke-width="2.2"/><circle cx="3.5" cy="16" r="1.4" fill="#e01010"/><circle cx="10" cy="16" r="1.4" fill="#e01010"/><circle cx="16.5" cy="16" r="1.4" fill="#e01010"/><polygon points="5.2,1.0 6.0,3.4 8.5,2.9 6.8,4.8 8.5,6.7 6.0,6.2 5.2,8.6 4.4,6.2 1.9,6.7 3.6,4.8 1.9,2.9 4.4,3.4" fill="#fbf31a" stroke="#c9bc10" stroke-width="0.5"/></svg>
<div class="mi " style="top:179px;letter-spacing:-0.40px">New Member Set Load</div>
<svg style="left:645px;top:198px" width="20" height="20" viewBox="0 0 20 20"><path d="M5 5H15" stroke="#aaa" stroke-width="1"/><path d="M6 5V12" stroke="#aaa" stroke-width="1"/><path d="M4.4 10L6 13L7.6 10Z" fill="#aaa"/><path d="M9 5V12" stroke="#aaa" stroke-width="1"/><path d="M7.4 10L9 13L10.6 10Z" fill="#aaa"/><path d="M12 5V12" stroke="#aaa" stroke-width="1"/><path d="M10.4 10L12 13L13.6 10Z" fill="#aaa"/><path d="M15 5V12" stroke="#aaa" stroke-width="1"/><path d="M13.4 10L15 13L16.6 10Z" fill="#aaa"/><path d="M3 15L6 12H16L13 15Z" fill="#ddd" stroke="#999" stroke-width="0.7"/><path d="M14.5 16.5H19.5M17 14V19" stroke="#222" stroke-width="1.2"/><polygon points="5.2,1.0 6.0,3.4 8.5,2.9 6.8,4.8 8.5,6.7 6.0,6.2 5.2,8.6 4.4,6.2 1.9,6.7 3.6,4.8 1.9,2.9 4.4,3.4" fill="#e4e4e4" stroke="#ababab" stroke-width="0.5"/></svg>
<div class="mi g" style="top:201px;letter-spacing:-0.44px">New Surface Set Load</div>
<svg style="left:645px;top:220px" width="20" height="20" viewBox="0 0 20 20"><path d="M4 11L8 9H14V15L10 17H4Z" fill="#d9d9d9" stroke="#b0b0b0" stroke-width="0.6"/><path d="M4 11H10V17M10 11L14 9" stroke="#b5b5b5" stroke-width="0.6" fill="none"/><path d="M8 3V9" stroke="#b0b0b0" stroke-width="1"/><path d="M6.4 7L8 10L9.6 7Z" fill="#b0b0b0"/><path d="M14.5 16.5H19.5M17 14V19" stroke="#222" stroke-width="1.2"/><polygon points="5.2,1.0 6.0,3.4 8.5,2.9 6.8,4.8 8.5,6.7 6.0,6.2 5.2,8.6 4.4,6.2 1.9,6.7 3.6,4.8 1.9,2.9 4.4,3.4" fill="#e4e4e4" stroke="#ababab" stroke-width="0.5"/></svg>
<div class="mi g" style="top:223px;letter-spacing:-0.36px">New Solid Set Load</div>
<svg style="left:645px;top:251px" width="20" height="20" viewBox="0 0 20 20"><path d="M3 14L8 10H18L13 14Z" fill="#fff" stroke="#2b8fd8" stroke-width="0.9" stroke-dasharray="1.5 1"/><path d="M10 2V11" stroke="#2f62b8" stroke-width="1"/><path d="M8.4 9L10 12L11.6 9Z" fill="#2f62b8"/><polygon points="5.2,1.0 6.0,3.4 8.5,2.9 6.8,4.8 8.5,6.7 6.0,6.2 5.2,8.6 4.4,6.2 1.9,6.7 3.6,4.8 1.9,2.9 4.4,3.4" fill="#fbf31a" stroke="#c9bc10" stroke-width="0.5"/></svg>
<div class="mi " style="top:254px;letter-spacing:-0.31px">New Free Concentrated Load</div>
<svg style="left:645px;top:273px" width="20" height="20" viewBox="0 0 20 20"><path d="M3 15L8 11H18L13 15Z" fill="#fff" stroke="#2b8fd8" stroke-width="0.9" stroke-dasharray="1.5 1"/><path d="M7 4H15" stroke="#2f62b8" stroke-width="1"/><path d="M8 4V11" stroke="#2f62b8" stroke-width="1"/><path d="M6.4 9L8 12L9.6 9Z" fill="#2f62b8"/><path d="M11 4V11" stroke="#2f62b8" stroke-width="1"/><path d="M9.4 9L11 12L12.6 9Z" fill="#2f62b8"/><path d="M14 4V11" stroke="#2f62b8" stroke-width="1"/><path d="M12.4 9L14 12L15.6 9Z" fill="#2f62b8"/><polygon points="5.2,1.0 6.0,3.4 8.5,2.9 6.8,4.8 8.5,6.7 6.0,6.2 5.2,8.6 4.4,6.2 1.9,6.7 3.6,4.8 1.9,2.9 4.4,3.4" fill="#fbf31a" stroke="#c9bc10" stroke-width="0.5"/></svg>
<div class="mi " style="top:276px;letter-spacing:-0.43px">New Free Line Load</div>
<svg style="left:645px;top:295px" width="20" height="20" viewBox="0 0 20 20"><path d="M3 15L8 11H18L13 15Z" fill="#fff" stroke="#2b8fd8" stroke-width="0.9" stroke-dasharray="1.5 1"/><path d="M6 6L9 3H16L13 6Z" fill="#8fb4e2" stroke="#2f62b8" stroke-width="0.7"/><path d="M8 5V11" stroke="#2f62b8" stroke-width="1"/><path d="M6.4 9L8 12L9.6 9Z" fill="#2f62b8"/><path d="M11 5V11" stroke="#2f62b8" stroke-width="1"/><path d="M9.4 9L11 12L12.6 9Z" fill="#2f62b8"/><path d="M14 5V11" stroke="#2f62b8" stroke-width="1"/><path d="M12.4 9L14 12L15.6 9Z" fill="#2f62b8"/><polygon points="5.2,1.0 6.0,3.4 8.5,2.9 6.8,4.8 8.5,6.7 6.0,6.2 5.2,8.6 4.4,6.2 1.9,6.7 3.6,4.8 1.9,2.9 4.4,3.4" fill="#fbf31a" stroke="#c9bc10" stroke-width="0.5"/></svg>
<div class="mi " style="top:298px;letter-spacing:-0.35px">New Free Rectangular Load</div>
<svg style="left:645px;top:317px" width="20" height="20" viewBox="0 0 20 20"><path d="M3 15L8 11H18L13 15Z" fill="#fff" stroke="#2b8fd8" stroke-width="0.9" stroke-dasharray="1.5 1"/><ellipse cx="11" cy="4.5" rx="5" ry="2" fill="#8fb4e2" stroke="#2f62b8" stroke-width="0.7"/><path d="M8 5V11" stroke="#2f62b8" stroke-width="1"/><path d="M6.4 9L8 12L9.6 9Z" fill="#2f62b8"/><path d="M11 5V11" stroke="#2f62b8" stroke-width="1"/><path d="M9.4 9L11 12L12.6 9Z" fill="#2f62b8"/><path d="M14 5V11" stroke="#2f62b8" stroke-width="1"/><path d="M12.4 9L14 12L15.6 9Z" fill="#2f62b8"/><polygon points="5.2,1.0 6.0,3.4 8.5,2.9 6.8,4.8 8.5,6.7 6.0,6.2 5.2,8.6 4.4,6.2 1.9,6.7 3.6,4.8 1.9,2.9 4.4,3.4" fill="#fbf31a" stroke="#c9bc10" stroke-width="0.5"/></svg>
<div class="mi " style="top:320px;letter-spacing:-0.39px">New Free Circular Load</div>
<svg style="left:645px;top:339px" width="20" height="20" viewBox="0 0 20 20"><path d="M3 15L8 11H18L13 15Z" fill="#fff" stroke="#2b8fd8" stroke-width="0.9" stroke-dasharray="1.5 1"/><path d="M6 6L8 3H13L16 5L12 7Z" fill="#8fb4e2" stroke="#2f62b8" stroke-width="0.7"/><path d="M8 5V11" stroke="#2f62b8" stroke-width="1"/><path d="M6.4 9L8 12L9.6 9Z" fill="#2f62b8"/><path d="M11 5V11" stroke="#2f62b8" stroke-width="1"/><path d="M9.4 9L11 12L12.6 9Z" fill="#2f62b8"/><path d="M14 5V11" stroke="#2f62b8" stroke-width="1"/><path d="M12.4 9L14 12L15.6 9Z" fill="#2f62b8"/><polygon points="5.2,1.0 6.0,3.4 8.5,2.9 6.8,4.8 8.5,6.7 6.0,6.2 5.2,8.6 4.4,6.2 1.9,6.7 3.6,4.8 1.9,2.9 4.4,3.4" fill="#fbf31a" stroke="#c9bc10" stroke-width="0.5"/></svg>
<div class="mi " style="top:342px;letter-spacing:-0.35px">New Free Polygon Load</div>
<svg style="left:645px;top:370px" width="20" height="20" viewBox="0 0 20 20"><path d="M3 11L8 3L12 11Z" fill="#1e9e3a" stroke="#0d6a22" stroke-width="0.6"/><circle cx="8" cy="4" r="2" fill="#1e7c30"/><path d="M2 12H13" stroke="#0d6a22" stroke-width="1"/><path d="M9 12L15 15" stroke="#e01010" stroke-width="1" stroke-dasharray="1.5 1"/><circle cx="17" cy="16.5" r="1.5" fill="#e01010"/><path d="M3.5 0.5L4.4 2.6L6.5 2.8L4.9 4.2L5.4 6.3L3.5 5.2L1.6 6.3L2.1 4.2L0.5 2.8L2.6 2.6Z" fill="#f7e81e" stroke="#b9a800" stroke-width="0.4"/></svg>
<div class="mi " style="top:373px;letter-spacing:-0.14px">New Imposed Nodal Deformation</div>
<svg style="left:645px;top:392px" width="20" height="20" viewBox="0 0 20 20"><path d="M4 15L10 5L15 3" fill="none" stroke="#8e8e8e" stroke-width="0.9"/><path d="M5 7L16 5M7 14L15 16" stroke="#b5b5b5" stroke-width="0.8" stroke-dasharray="1.5 1.2"/><circle cx="16.5" cy="5" r="1.1" fill="#999"/><circle cx="15.5" cy="16" r="1.1" fill="#999"/><circle cx="9" cy="15" r="1.1" fill="#999"/><path d="M3.5 1.5L4.4 3.6L6.5 3.8L4.9 5.2L5.4 7.3L3.5 6.2L1.6 7.3L2.1 5.2L0.5 3.8L2.6 3.6Z" fill="#e2e2e2" stroke="#a8a8a8" stroke-width="0.4"/></svg>
<div class="mi g" style="top:395px;letter-spacing:-0.21px">New Imposed Line Deformation</div>
</body></html>
